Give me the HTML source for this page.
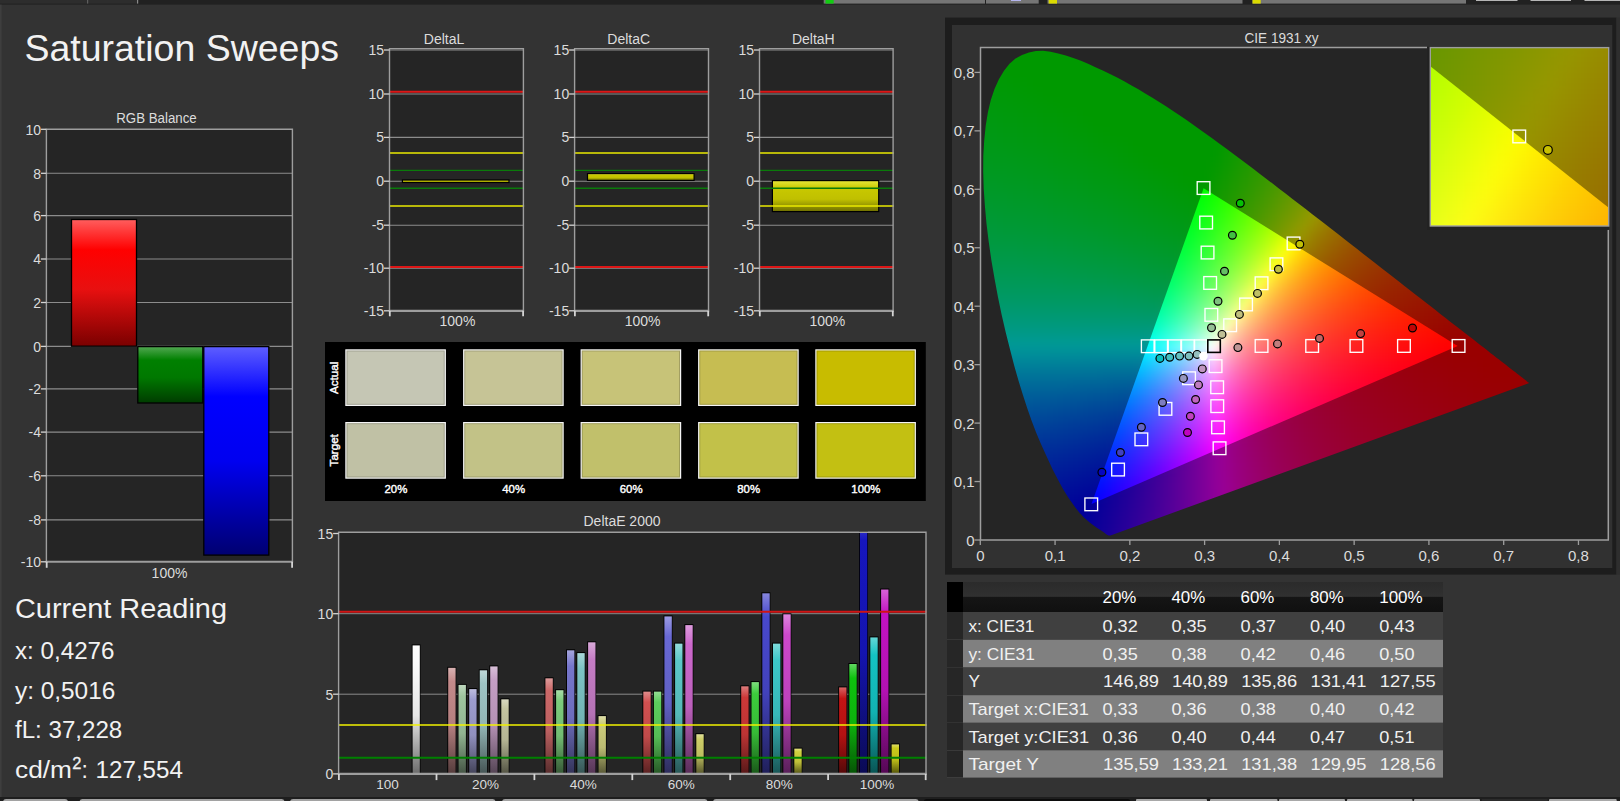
<!DOCTYPE html>
<html><head><meta charset="utf-8"><title>Saturation Sweeps</title>
<style>
html,body{margin:0;padding:0;background:#333333;overflow:hidden}
svg{display:block;font-family:"Liberation Sans", sans-serif}
</style></head><body>
<svg width="1620" height="801" viewBox="0 0 1620 801">
<defs>
<linearGradient id="gR" x1="0" y1="0" x2="0" y2="1"><stop offset="0" stop-color="#ff5e5e"/><stop offset=".24" stop-color="#ff0000"/><stop offset=".55" stop-color="#e81010"/><stop offset="1" stop-color="#7a0000"/></linearGradient>
<linearGradient id="gG" x1="0" y1="0" x2="0" y2="1"><stop offset="0" stop-color="#52a852"/><stop offset=".24" stop-color="#008000"/><stop offset=".55" stop-color="#007800"/><stop offset="1" stop-color="#003c00"/></linearGradient>
<linearGradient id="gB" x1="0" y1="0" x2="0" y2="1"><stop offset="0" stop-color="#5e5eff"/><stop offset=".24" stop-color="#0000ff"/><stop offset=".55" stop-color="#0000f0"/><stop offset="1" stop-color="#000070"/></linearGradient>
<linearGradient id="gY" x1="0" y1="0" x2="0" y2="1"><stop offset="0" stop-color="#e6e63a"/><stop offset=".25" stop-color="#c8c800"/><stop offset=".6" stop-color="#c0c000"/><stop offset="1" stop-color="#6e6e00"/></linearGradient>
<linearGradient id="e1" gradientUnits="userSpaceOnUse" x1="0" y1="645.4" x2="0" y2="773.0"><stop offset="0" stop-color="#fcfcfc"/><stop offset=".13" stop-color="#fafafa"/><stop offset=".55" stop-color="#e6e6e6"/><stop offset="1" stop-color="#6e6e6e"/></linearGradient>
<linearGradient id="e2" gradientUnits="userSpaceOnUse" x1="0" y1="667.8" x2="0" y2="773.0"><stop offset="0" stop-color="#d8b2b2"/><stop offset=".13" stop-color="#c48a8a"/><stop offset=".55" stop-color="#b47f7f"/><stop offset="1" stop-color="#563d3d"/></linearGradient>
<linearGradient id="e3" gradientUnits="userSpaceOnUse" x1="0" y1="684.9" x2="0" y2="773.0"><stop offset="0" stop-color="#bfd8bf"/><stop offset=".13" stop-color="#9ec49e"/><stop offset=".55" stop-color="#91b491"/><stop offset="1" stop-color="#465646"/></linearGradient>
<linearGradient id="e4" gradientUnits="userSpaceOnUse" x1="0" y1="689.1" x2="0" y2="773.0"><stop offset="0" stop-color="#bebedf"/><stop offset=".13" stop-color="#9c9cce"/><stop offset=".55" stop-color="#9090be"/><stop offset="1" stop-color="#45455b"/></linearGradient>
<linearGradient id="e5" gradientUnits="userSpaceOnUse" x1="0" y1="670.3" x2="0" y2="773.0"><stop offset="0" stop-color="#bfd8d8"/><stop offset=".13" stop-color="#9ec4c4"/><stop offset=".55" stop-color="#91b4b4"/><stop offset="1" stop-color="#465656"/></linearGradient>
<linearGradient id="e6" gradientUnits="userSpaceOnUse" x1="0" y1="666.4" x2="0" y2="773.0"><stop offset="0" stop-color="#d8bfd8"/><stop offset=".13" stop-color="#c49ec4"/><stop offset=".55" stop-color="#b491b4"/><stop offset="1" stop-color="#564656"/></linearGradient>
<linearGradient id="e7" gradientUnits="userSpaceOnUse" x1="0" y1="699.3" x2="0" y2="773.0"><stop offset="0" stop-color="#d8d8c0"/><stop offset=".13" stop-color="#c4c4a0"/><stop offset=".55" stop-color="#b4b493"/><stop offset="1" stop-color="#565646"/></linearGradient>
<linearGradient id="e8" gradientUnits="userSpaceOnUse" x1="0" y1="678.3" x2="0" y2="773.0"><stop offset="0" stop-color="#dd9b9b"/><stop offset=".13" stop-color="#cc6868"/><stop offset=".55" stop-color="#bc6060"/><stop offset="1" stop-color="#5a2e2e"/></linearGradient>
<linearGradient id="e9" gradientUnits="userSpaceOnUse" x1="0" y1="690.2" x2="0" y2="773.0"><stop offset="0" stop-color="#a9dda9"/><stop offset=".13" stop-color="#7ccc7c"/><stop offset=".55" stop-color="#72bc72"/><stop offset="1" stop-color="#375a37"/></linearGradient>
<linearGradient id="e10" gradientUnits="userSpaceOnUse" x1="0" y1="650.3" x2="0" y2="773.0"><stop offset="0" stop-color="#a5a5dd"/><stop offset=".13" stop-color="#7676cc"/><stop offset=".55" stop-color="#6d6dbc"/><stop offset="1" stop-color="#34345a"/></linearGradient>
<linearGradient id="e11" gradientUnits="userSpaceOnUse" x1="0" y1="653.1" x2="0" y2="773.0"><stop offset="0" stop-color="#a9d8d8"/><stop offset=".13" stop-color="#7cc4c4"/><stop offset=".55" stop-color="#72b4b4"/><stop offset="1" stop-color="#375656"/></linearGradient>
<linearGradient id="e12" gradientUnits="userSpaceOnUse" x1="0" y1="642.3" x2="0" y2="773.0"><stop offset="0" stop-color="#d8a9d8"/><stop offset=".13" stop-color="#c47cc4"/><stop offset=".55" stop-color="#b472b4"/><stop offset="1" stop-color="#563756"/></linearGradient>
<linearGradient id="e13" gradientUnits="userSpaceOnUse" x1="0" y1="716.1" x2="0" y2="773.0"><stop offset="0" stop-color="#dddda9"/><stop offset=".13" stop-color="#cccc7c"/><stop offset=".55" stop-color="#bcbc72"/><stop offset="1" stop-color="#5a5a37"/></linearGradient>
<linearGradient id="e14" gradientUnits="userSpaceOnUse" x1="0" y1="691.6" x2="0" y2="773.0"><stop offset="0" stop-color="#e18c8c"/><stop offset=".13" stop-color="#d25050"/><stop offset=".55" stop-color="#c14a4a"/><stop offset="1" stop-color="#5c2323"/></linearGradient>
<linearGradient id="e15" gradientUnits="userSpaceOnUse" x1="0" y1="691.6" x2="0" y2="773.0"><stop offset="0" stop-color="#93dd93"/><stop offset=".13" stop-color="#5ccc5c"/><stop offset=".55" stop-color="#55bc55"/><stop offset="1" stop-color="#285a28"/></linearGradient>
<linearGradient id="e16" gradientUnits="userSpaceOnUse" x1="0" y1="616.4" x2="0" y2="773.0"><stop offset="0" stop-color="#9b9be3"/><stop offset=".13" stop-color="#6868d4"/><stop offset=".55" stop-color="#6060c3"/><stop offset="1" stop-color="#2e2e5d"/></linearGradient>
<linearGradient id="e17" gradientUnits="userSpaceOnUse" x1="0" y1="643.6" x2="0" y2="773.0"><stop offset="0" stop-color="#93dbdb"/><stop offset=".13" stop-color="#5cc8c8"/><stop offset=".55" stop-color="#55b8b8"/><stop offset="1" stop-color="#285858"/></linearGradient>
<linearGradient id="e18" gradientUnits="userSpaceOnUse" x1="0" y1="625.1" x2="0" y2="773.0"><stop offset="0" stop-color="#dd9bdd"/><stop offset=".13" stop-color="#cc68cc"/><stop offset=".55" stop-color="#bc60bc"/><stop offset="1" stop-color="#5a2e5a"/></linearGradient>
<linearGradient id="e19" gradientUnits="userSpaceOnUse" x1="0" y1="734.2" x2="0" y2="773.0"><stop offset="0" stop-color="#dfdf9b"/><stop offset=".13" stop-color="#cece68"/><stop offset=".55" stop-color="#bebe60"/><stop offset="1" stop-color="#5b5b2e"/></linearGradient>
<linearGradient id="e20" gradientUnits="userSpaceOnUse" x1="0" y1="686.3" x2="0" y2="773.0"><stop offset="0" stop-color="#dd7c7c"/><stop offset=".13" stop-color="#cc3838"/><stop offset=".55" stop-color="#bc3434"/><stop offset="1" stop-color="#5a1919"/></linearGradient>
<linearGradient id="e21" gradientUnits="userSpaceOnUse" x1="0" y1="682.1" x2="0" y2="773.0"><stop offset="0" stop-color="#7edd7e"/><stop offset=".13" stop-color="#3ccc3c"/><stop offset=".55" stop-color="#37bc37"/><stop offset="1" stop-color="#1a5a1a"/></linearGradient>
<linearGradient id="e22" gradientUnits="userSpaceOnUse" x1="0" y1="593.3" x2="0" y2="773.0"><stop offset="0" stop-color="#8686dd"/><stop offset=".13" stop-color="#4848cc"/><stop offset=".55" stop-color="#4242bc"/><stop offset="1" stop-color="#20205a"/></linearGradient>
<linearGradient id="e23" gradientUnits="userSpaceOnUse" x1="0" y1="643.6" x2="0" y2="773.0"><stop offset="0" stop-color="#7edbdb"/><stop offset=".13" stop-color="#3cc8c8"/><stop offset=".55" stop-color="#37b8b8"/><stop offset="1" stop-color="#1a5858"/></linearGradient>
<linearGradient id="e24" gradientUnits="userSpaceOnUse" x1="0" y1="614.3" x2="0" y2="773.0"><stop offset="0" stop-color="#dd86dd"/><stop offset=".13" stop-color="#cc48cc"/><stop offset=".55" stop-color="#bc42bc"/><stop offset="1" stop-color="#5a205a"/></linearGradient>
<linearGradient id="e25" gradientUnits="userSpaceOnUse" x1="0" y1="748.6" x2="0" y2="773.0"><stop offset="0" stop-color="#e0e080"/><stop offset=".13" stop-color="#d0d03e"/><stop offset=".55" stop-color="#bfbf39"/><stop offset="1" stop-color="#5c5c1b"/></linearGradient>
<linearGradient id="e26" gradientUnits="userSpaceOnUse" x1="0" y1="687.4" x2="0" y2="773.0"><stop offset="0" stop-color="#d86464"/><stop offset=".13" stop-color="#c41414"/><stop offset=".55" stop-color="#b41212"/><stop offset="1" stop-color="#560909"/></linearGradient>
<linearGradient id="e27" gradientUnits="userSpaceOnUse" x1="0" y1="664.0" x2="0" y2="773.0"><stop offset="0" stop-color="#60d760"/><stop offset=".13" stop-color="#0ec20e"/><stop offset=".55" stop-color="#0db20d"/><stop offset="1" stop-color="#065506"/></linearGradient>
<linearGradient id="e28" gradientUnits="userSpaceOnUse" x1="0" y1="505.6" x2="0" y2="773.0"><stop offset="0" stop-color="#6565d4"/><stop offset=".13" stop-color="#1616be"/><stop offset=".55" stop-color="#1414af"/><stop offset="1" stop-color="#0a0a54"/></linearGradient>
<linearGradient id="e29" gradientUnits="userSpaceOnUse" x1="0" y1="637.4" x2="0" y2="773.0"><stop offset="0" stop-color="#64d7d7"/><stop offset=".13" stop-color="#14c2c2"/><stop offset=".55" stop-color="#12b2b2"/><stop offset="1" stop-color="#095555"/></linearGradient>
<linearGradient id="e30" gradientUnits="userSpaceOnUse" x1="0" y1="589.5" x2="0" y2="773.0"><stop offset="0" stop-color="#d763d7"/><stop offset=".13" stop-color="#c212c2"/><stop offset=".55" stop-color="#b211b2"/><stop offset="1" stop-color="#550855"/></linearGradient>
<linearGradient id="e31" gradientUnits="userSpaceOnUse" x1="0" y1="744.4" x2="0" y2="773.0"><stop offset="0" stop-color="#dcdc68"/><stop offset=".13" stop-color="#caca1a"/><stop offset=".55" stop-color="#baba18"/><stop offset="1" stop-color="#59590b"/></linearGradient>
<clipPath id="cl"><path d="M1110.5 535.5L1108.5 535.4L1106.6 534.4L1104.7 533.1L1102.7 531.6L1100.8 530.3L1098.4 528.7L1096.5 527.4L1094.4 526L1092 524.2L1089.4 522.2L1086.6 519.8L1083.4 516.9L1081.7 515.1L1079.7 512.9L1077.7 510.5L1075.5 507.8L1073.2 504.6L1070.7 501.1L1068.1 497.2L1065.3 492.7L1062.3 487.7L1059.2 482L1055.9 475.7L1052.3 468.7L1048.6 460.8L1044.7 452.2L1040.4 442.7L1036.1 432.4L1031.7 421.1L1027.4 408.7L1023 395.3L1018.6 381.1L1014.3 366L1010.1 349.8L1005.8 332.7L1001.7 315L998 297.2L994.6 279L991.4 260.4L988.7 241.8L986.5 223.7L984.9 206L983.7 188.6L983.2 171.7L983.3 155.7L984.2 140.4L985.7 125.8L987.9 112.2L990.8 99.9L994.5 88.9L998.9 79.2L1004 70.7L1009.5 63.8L1015.5 58.6L1022 54.9L1028.9 52.5L1035.9 51L1043.1 50.8L1050.6 51.7L1058.2 53.5L1065.8 55.5L1073.3 57.9L1081 60.8L1088.6 64L1096 67.4L1103.3 70.7L1110.5 74.2L1117.6 77.8L1124.6 81.6L1131.5 85.4L1138.4 89.3L1145.2 93.4L1152 97.5L1158.8 101.8L1165.6 106.1L1172.3 110.5L1179.1 115L1185.8 119.6L1192.5 124.3L1199.1 129L1205.8 133.8L1212.5 138.6L1219.2 143.4L1225.8 148.3L1232.5 153.3L1239.2 158.3L1245.9 163.3L1252.6 168.3L1259.3 173.4L1265.9 178.5L1272.6 183.6L1279.2 188.7L1285.9 193.8L1292.5 198.9L1299.1 204L1305.7 209.1L1312.3 214.2L1318.9 219.2L1325.4 224.3L1331.8 229.3L1338.3 234.3L1344.6 239.3L1351 244.2L1357.2 249.1L1363.4 254L1369.6 258.8L1375.7 263.5L1381.7 268.2L1387.6 272.8L1393.4 277.3L1399.2 281.8L1404.8 286.2L1410.3 290.5L1415.7 294.7L1421 298.8L1426.1 302.8L1431 306.6L1435.8 310.3L1440.3 313.9L1444.7 317.3L1449 320.7L1453.2 323.9L1457.2 327.1L1461.1 330.1L1464.9 333L1468.4 335.7L1471.8 338.3L1475 340.8L1478 343.2L1480.9 345.4L1483.7 347.6L1486.2 349.6L1488.7 351.5L1491 353.4L1493.2 355.1L1495.3 356.7L1497.2 358.2L1499.1 359.6L1500.8 361L1502.5 362.2L1505.5 364.6L1508.2 366.7L1510.7 368.7L1513 370.5L1515.1 372.1L1516.9 373.5L1518.6 374.8L1520.8 376.5L1522.5 377.8L1524.3 379.3L1526 380.6L1527.6 381.9L1529.2 383.1Z"/></clipPath>
<clipPath id="ct"><path d="M1457.7 346.1L1203.6 188.3L1091.5 503.9Z"/></clipPath>
<filter id="bl" x="-5%" y="-5%" width="110%" height="110%" color-interpolation-filters="sRGB"><feGaussianBlur stdDeviation="5"/></filter>
<filter id="bs" x="-5%" y="-5%" width="110%" height="110%" color-interpolation-filters="sRGB"><feGaussianBlur stdDeviation="3.2"/></filter>
<clipPath id="ci"><rect x="1430.3" y="47.6" width="178.4" height="178.4"/></clipPath>
<clipPath id="cit"><path d="M2307.0 762.3L1093.8 -201.1L558.6 1725.6Z"/></clipPath>
<filter id="bi" x="-20%" y="-20%" width="140%" height="140%" color-interpolation-filters="sRGB"><feGaussianBlur stdDeviation="8"/></filter>
<linearGradient id="th" x1="0" y1="0" x2="0" y2="1"><stop offset="0" stop-color="#2b2b2b"/><stop offset=".48" stop-color="#303030"/><stop offset=".5" stop-color="#151515"/><stop offset="1" stop-color="#101010"/></linearGradient>
</defs>
<rect x="0" y="0" width="1620" height="801" fill="#333333"/>
<rect x="0" y="0" width="1620" height="4.6" fill="#212121"/>
<rect x="0" y="0" width="137.5" height="3.6" fill="#2d2d2d"/>
<rect x="87" y="0" width="1.2" height="3.6" fill="#5e5e5e"/>
<rect x="137" y="0" width="1.2" height="3.6" fill="#8a8a8a"/>
<rect x="823.7" y="0" width="161.3" height="3.6" fill="#757575"/>
<rect x="825.5" y="0" width="8.2" height="3.6" fill="#12cc12"/>
<rect x="986" y="0" width="52.7" height="3.6" fill="#757575"/>
<rect x="1011" y="0" width="10" height="1.0" fill="#b4b4ee"/>
<rect x="1047.5" y="0" width="195" height="3.6" fill="#757575"/>
<rect x="1048.7" y="0" width="8.3" height="3.6" fill="#dada00"/>
<rect x="1252.5" y="0" width="213.5" height="3.6" fill="#757575"/>
<rect x="1252.5" y="0" width="8.2" height="3.6" fill="#dada00"/>
<rect x="1476" y="0" width="41.5" height="1.0" fill="#b5b5b5"/>
<rect x="1530.5" y="0" width="40.5" height="1.0" fill="#b5b5b5"/>
<rect x="1584.5" y="0" width="35.5" height="1.0" fill="#b5b5b5"/>
<rect x="0" y="4.6" width="1.6" height="796" fill="#3e3e3e"/>
<rect x="0" y="797" width="1620" height="4" fill="#1e1e1e"/>
<rect x="3" y="799" width="65" height="8" rx="3" fill="#a2a2a2"/>
<rect x="79.5" y="799" width="205.0" height="8" rx="3" fill="#a2a2a2"/>
<rect x="290" y="799" width="205.5" height="8" rx="3" fill="#a2a2a2"/>
<rect x="502" y="799" width="205.5" height="8" rx="3" fill="#a2a2a2"/>
<rect x="713" y="799" width="205.70000000000005" height="8" rx="3" fill="#a2a2a2"/>
<rect x="923.7" y="799" width="206.8" height="8" rx="3" fill="#0c0c0c"/>
<rect x="1136" y="799" width="71" height="4" rx="1" fill="#a8a8a8"/>
<rect x="1210" y="799" width="67.5" height="4" rx="1" fill="#a8a8a8"/>
<rect x="1279" y="799" width="66" height="4" rx="1" fill="#a8a8a8"/>
<rect x="1347" y="799" width="65.5" height="4" rx="1" fill="#a8a8a8"/>
<rect x="1414" y="799" width="66" height="4" rx="1" fill="#a8a8a8"/>
<rect x="1549" y="799" width="67.70000000000005" height="4" rx="1" fill="#a8a8a8"/>
<rect x="1481.7" y="799" width="65.8" height="3" fill="#2c2c2c"/>
<text x="24.4" y="60.5" font-size="37" textLength="314.6" lengthAdjust="spacingAndGlyphs" fill="#f2f2f2">Saturation Sweeps</text>
<rect x="46.4" y="129.3" width="245.99999999999997" height="432.49999999999994" fill="#252525"/>
<line x1="46.4" y1="519.9" x2="292.4" y2="519.9" stroke="#8c8c8c" stroke-width="1.1"/>
<line x1="46.4" y1="475.8" x2="292.4" y2="475.8" stroke="#8c8c8c" stroke-width="1.1"/>
<line x1="46.4" y1="432.1" x2="292.4" y2="432.1" stroke="#8c8c8c" stroke-width="1.1"/>
<line x1="46.4" y1="388.9" x2="292.4" y2="388.9" stroke="#8c8c8c" stroke-width="1.1"/>
<line x1="46.4" y1="346.4" x2="292.4" y2="346.4" stroke="#8c8c8c" stroke-width="1.1"/>
<line x1="46.4" y1="302.5" x2="292.4" y2="302.5" stroke="#8c8c8c" stroke-width="1.1"/>
<line x1="46.4" y1="259.0" x2="292.4" y2="259.0" stroke="#8c8c8c" stroke-width="1.1"/>
<line x1="46.4" y1="215.6" x2="292.4" y2="215.6" stroke="#8c8c8c" stroke-width="1.1"/>
<line x1="46.4" y1="173.3" x2="292.4" y2="173.3" stroke="#8c8c8c" stroke-width="1.1"/>
<rect x="71.5" y="219.5" width="65" height="126.7" fill="url(#gR)" stroke="#000" stroke-width="1.3"/>
<rect x="137.8" y="346.6" width="65.0" height="56.4" fill="url(#gG)" stroke="#000" stroke-width="1.3"/>
<rect x="203.8" y="346.6" width="65.0" height="208.5" fill="url(#gB)" stroke="#000" stroke-width="1.3"/>
<path d="M46.4 561.8V129.3H292.4V561.8" fill="none" stroke="#9e9e9e" stroke-width="1.4"/>
<line x1="45.699999999999996" y1="561.8" x2="293.09999999999997" y2="561.8" stroke="#9e9e9e" stroke-width="2.0"/>
<line x1="46.699999999999996" y1="561.8" x2="46.699999999999996" y2="567.8" stroke="#d4d4d4" stroke-width="1.8"/>
<line x1="292.09999999999997" y1="561.8" x2="292.09999999999997" y2="567.8" stroke="#d4d4d4" stroke-width="1.8"/>
<line x1="40.9" y1="561.8" x2="46.4" y2="561.8" stroke="#d4d4d4" stroke-width="1.3"/>
<text x="41.0" y="567.0" font-size="14" text-anchor="end" fill="#dcdcdc">-10</text>
<line x1="40.9" y1="519.9" x2="46.4" y2="519.9" stroke="#d4d4d4" stroke-width="1.3"/>
<text x="41.0" y="525.1" font-size="14" text-anchor="end" fill="#dcdcdc">-8</text>
<line x1="40.9" y1="475.8" x2="46.4" y2="475.8" stroke="#d4d4d4" stroke-width="1.3"/>
<text x="41.0" y="481.0" font-size="14" text-anchor="end" fill="#dcdcdc">-6</text>
<line x1="40.9" y1="432.1" x2="46.4" y2="432.1" stroke="#d4d4d4" stroke-width="1.3"/>
<text x="41.0" y="437.3" font-size="14" text-anchor="end" fill="#dcdcdc">-4</text>
<line x1="40.9" y1="388.9" x2="46.4" y2="388.9" stroke="#d4d4d4" stroke-width="1.3"/>
<text x="41.0" y="394.09999999999997" font-size="14" text-anchor="end" fill="#dcdcdc">-2</text>
<line x1="40.9" y1="346.4" x2="46.4" y2="346.4" stroke="#d4d4d4" stroke-width="1.3"/>
<text x="41.0" y="351.59999999999997" font-size="14" text-anchor="end" fill="#dcdcdc">0</text>
<line x1="40.9" y1="302.5" x2="46.4" y2="302.5" stroke="#d4d4d4" stroke-width="1.3"/>
<text x="41.0" y="307.7" font-size="14" text-anchor="end" fill="#dcdcdc">2</text>
<line x1="40.9" y1="259.0" x2="46.4" y2="259.0" stroke="#d4d4d4" stroke-width="1.3"/>
<text x="41.0" y="264.2" font-size="14" text-anchor="end" fill="#dcdcdc">4</text>
<line x1="40.9" y1="215.6" x2="46.4" y2="215.6" stroke="#d4d4d4" stroke-width="1.3"/>
<text x="41.0" y="220.79999999999998" font-size="14" text-anchor="end" fill="#dcdcdc">6</text>
<line x1="40.9" y1="173.3" x2="46.4" y2="173.3" stroke="#d4d4d4" stroke-width="1.3"/>
<text x="41.0" y="178.5" font-size="14" text-anchor="end" fill="#dcdcdc">8</text>
<line x1="40.9" y1="129.3" x2="46.4" y2="129.3" stroke="#d4d4d4" stroke-width="1.3"/>
<text x="41.0" y="134.5" font-size="14" text-anchor="end" fill="#dcdcdc">10</text>
<text x="156.5" y="122.8" font-size="14" text-anchor="middle" textLength="80.5" lengthAdjust="spacingAndGlyphs" fill="#dcdcdc">RGB Balance</text>
<text x="169.5" y="578" font-size="14" text-anchor="middle" fill="#dcdcdc">100%</text>
<text x="15" y="617.8" font-size="27" textLength="212" lengthAdjust="spacingAndGlyphs" fill="#f2f2f2">Current Reading</text>
<text x="15" y="659.2" font-size="23" textLength="99.5" lengthAdjust="spacingAndGlyphs" fill="#f2f2f2">x: 0,4276</text>
<text x="15" y="698.6" font-size="23" textLength="100.3" lengthAdjust="spacingAndGlyphs" fill="#f2f2f2">y: 0,5016</text>
<text x="15" y="738.2" font-size="23" textLength="107.2" lengthAdjust="spacingAndGlyphs" fill="#f2f2f2">fL: 37,228</text>
<text x="15" y="777.8" font-size="23" textLength="57.0" lengthAdjust="spacingAndGlyphs" fill="#f2f2f2">cd/m</text>
<text x="72.2" y="769.2" font-size="16.5" fill="#f2f2f2" stroke="#f2f2f2" stroke-width=".3">2</text>
<text x="81.6" y="777.8" font-size="23" fill="#f2f2f2">:</text>
<text x="95.6" y="777.8" font-size="23" textLength="87.3" lengthAdjust="spacingAndGlyphs" fill="#f2f2f2">127,554</text>
<rect x="389.5" y="48.6" width="133.89999999999998" height="262.2" fill="#252525"/>
<line x1="389.5" y1="50.0" x2="523.4" y2="50.0" stroke="#8c8c8c" stroke-width="1.1"/>
<line x1="389.5" y1="94.0" x2="523.4" y2="94.0" stroke="#8c8c8c" stroke-width="1.1"/>
<line x1="389.5" y1="137.4" x2="523.4" y2="137.4" stroke="#8c8c8c" stroke-width="1.1"/>
<line x1="389.5" y1="181.2" x2="523.4" y2="181.2" stroke="#8c8c8c" stroke-width="1.1"/>
<line x1="389.5" y1="225.2" x2="523.4" y2="225.2" stroke="#8c8c8c" stroke-width="1.1"/>
<line x1="389.5" y1="268.2" x2="523.4" y2="268.2" stroke="#8c8c8c" stroke-width="1.1"/>
<line x1="389.5" y1="91.7" x2="524.1" y2="91.7" stroke="#dc1616" stroke-width="2.0"/>
<line x1="389.5" y1="266.9" x2="524.1" y2="266.9" stroke="#dc1616" stroke-width="2.0"/>
<rect x="402.4" y="180.0" width="106.6" height="2.5" fill="url(#gY)" stroke="#000" stroke-width="1.2"/>
<line x1="389.5" y1="153.0" x2="524.1" y2="153.0" stroke="#eaea00" stroke-width="1.4"/>
<line x1="389.5" y1="206.0" x2="524.1" y2="206.0" stroke="#eaea00" stroke-width="1.4"/>
<line x1="389.5" y1="170.4" x2="524.1" y2="170.4" stroke="#0a7a0a" stroke-width="1.4"/>
<line x1="389.5" y1="188.2" x2="524.1" y2="188.2" stroke="#0a7a0a" stroke-width="1.4"/>
<path d="M389.5 310.8V48.6H523.4V310.8" fill="none" stroke="#9e9e9e" stroke-width="1.4"/>
<line x1="388.8" y1="310.8" x2="524.1" y2="310.8" stroke="#9e9e9e" stroke-width="2.2"/>
<line x1="389.8" y1="310.8" x2="389.8" y2="316.3" stroke="#d4d4d4" stroke-width="1.8"/>
<line x1="523.1" y1="310.8" x2="523.1" y2="316.3" stroke="#d4d4d4" stroke-width="1.8"/>
<line x1="384.0" y1="50.0" x2="389.5" y2="50.0" stroke="#d4d4d4" stroke-width="1.3"/>
<text x="384.1" y="55.0" font-size="14" text-anchor="end" fill="#dcdcdc">15</text>
<line x1="384.0" y1="94.0" x2="389.5" y2="94.0" stroke="#d4d4d4" stroke-width="1.3"/>
<text x="384.1" y="99.0" font-size="14" text-anchor="end" fill="#dcdcdc">10</text>
<line x1="384.0" y1="137.4" x2="389.5" y2="137.4" stroke="#d4d4d4" stroke-width="1.3"/>
<text x="384.1" y="142.4" font-size="14" text-anchor="end" fill="#dcdcdc">5</text>
<line x1="384.0" y1="181.2" x2="389.5" y2="181.2" stroke="#d4d4d4" stroke-width="1.3"/>
<text x="384.1" y="186.2" font-size="14" text-anchor="end" fill="#dcdcdc">0</text>
<line x1="384.0" y1="225.2" x2="389.5" y2="225.2" stroke="#d4d4d4" stroke-width="1.3"/>
<text x="384.1" y="230.2" font-size="14" text-anchor="end" fill="#dcdcdc">-5</text>
<line x1="384.0" y1="268.2" x2="389.5" y2="268.2" stroke="#d4d4d4" stroke-width="1.3"/>
<text x="384.1" y="273.2" font-size="14" text-anchor="end" fill="#dcdcdc">-10</text>
<line x1="384.0" y1="310.8" x2="389.5" y2="310.8" stroke="#d4d4d4" stroke-width="1.3"/>
<text x="384.1" y="315.8" font-size="14" text-anchor="end" fill="#dcdcdc">-15</text>
<text x="444" y="44.0" font-size="14" text-anchor="middle" fill="#dcdcdc">DeltaL</text>
<text x="457.45" y="325.8" font-size="14" text-anchor="middle" fill="#dcdcdc">100%</text>
<rect x="574.6" y="48.6" width="133.89999999999998" height="262.2" fill="#252525"/>
<line x1="574.6" y1="50.0" x2="708.5" y2="50.0" stroke="#8c8c8c" stroke-width="1.1"/>
<line x1="574.6" y1="94.0" x2="708.5" y2="94.0" stroke="#8c8c8c" stroke-width="1.1"/>
<line x1="574.6" y1="137.4" x2="708.5" y2="137.4" stroke="#8c8c8c" stroke-width="1.1"/>
<line x1="574.6" y1="181.2" x2="708.5" y2="181.2" stroke="#8c8c8c" stroke-width="1.1"/>
<line x1="574.6" y1="225.2" x2="708.5" y2="225.2" stroke="#8c8c8c" stroke-width="1.1"/>
<line x1="574.6" y1="268.2" x2="708.5" y2="268.2" stroke="#8c8c8c" stroke-width="1.1"/>
<line x1="574.6" y1="91.7" x2="709.2" y2="91.7" stroke="#dc1616" stroke-width="2.0"/>
<line x1="574.6" y1="266.9" x2="709.2" y2="266.9" stroke="#dc1616" stroke-width="2.0"/>
<rect x="587.5" y="173.6" width="106.6" height="6.8" fill="url(#gY)" stroke="#000" stroke-width="1.2"/>
<line x1="574.6" y1="153.0" x2="709.2" y2="153.0" stroke="#eaea00" stroke-width="1.4"/>
<line x1="574.6" y1="206.0" x2="709.2" y2="206.0" stroke="#eaea00" stroke-width="1.4"/>
<line x1="574.6" y1="170.4" x2="709.2" y2="170.4" stroke="#0a7a0a" stroke-width="1.4"/>
<line x1="574.6" y1="188.2" x2="709.2" y2="188.2" stroke="#0a7a0a" stroke-width="1.4"/>
<path d="M574.6 310.8V48.6H708.5V310.8" fill="none" stroke="#9e9e9e" stroke-width="1.4"/>
<line x1="573.9" y1="310.8" x2="709.2" y2="310.8" stroke="#9e9e9e" stroke-width="2.2"/>
<line x1="574.9" y1="310.8" x2="574.9" y2="316.3" stroke="#d4d4d4" stroke-width="1.8"/>
<line x1="708.2" y1="310.8" x2="708.2" y2="316.3" stroke="#d4d4d4" stroke-width="1.8"/>
<line x1="569.1" y1="50.0" x2="574.6" y2="50.0" stroke="#d4d4d4" stroke-width="1.3"/>
<text x="569.2" y="55.0" font-size="14" text-anchor="end" fill="#dcdcdc">15</text>
<line x1="569.1" y1="94.0" x2="574.6" y2="94.0" stroke="#d4d4d4" stroke-width="1.3"/>
<text x="569.2" y="99.0" font-size="14" text-anchor="end" fill="#dcdcdc">10</text>
<line x1="569.1" y1="137.4" x2="574.6" y2="137.4" stroke="#d4d4d4" stroke-width="1.3"/>
<text x="569.2" y="142.4" font-size="14" text-anchor="end" fill="#dcdcdc">5</text>
<line x1="569.1" y1="181.2" x2="574.6" y2="181.2" stroke="#d4d4d4" stroke-width="1.3"/>
<text x="569.2" y="186.2" font-size="14" text-anchor="end" fill="#dcdcdc">0</text>
<line x1="569.1" y1="225.2" x2="574.6" y2="225.2" stroke="#d4d4d4" stroke-width="1.3"/>
<text x="569.2" y="230.2" font-size="14" text-anchor="end" fill="#dcdcdc">-5</text>
<line x1="569.1" y1="268.2" x2="574.6" y2="268.2" stroke="#d4d4d4" stroke-width="1.3"/>
<text x="569.2" y="273.2" font-size="14" text-anchor="end" fill="#dcdcdc">-10</text>
<line x1="569.1" y1="310.8" x2="574.6" y2="310.8" stroke="#d4d4d4" stroke-width="1.3"/>
<text x="569.2" y="315.8" font-size="14" text-anchor="end" fill="#dcdcdc">-15</text>
<text x="628.7" y="44.0" font-size="14" text-anchor="middle" fill="#dcdcdc">DeltaC</text>
<text x="642.55" y="325.8" font-size="14" text-anchor="middle" fill="#dcdcdc">100%</text>
<rect x="759.5" y="48.6" width="133.60000000000002" height="262.2" fill="#252525"/>
<line x1="759.5" y1="50.0" x2="893.1" y2="50.0" stroke="#8c8c8c" stroke-width="1.1"/>
<line x1="759.5" y1="94.0" x2="893.1" y2="94.0" stroke="#8c8c8c" stroke-width="1.1"/>
<line x1="759.5" y1="137.4" x2="893.1" y2="137.4" stroke="#8c8c8c" stroke-width="1.1"/>
<line x1="759.5" y1="181.2" x2="893.1" y2="181.2" stroke="#8c8c8c" stroke-width="1.1"/>
<line x1="759.5" y1="225.2" x2="893.1" y2="225.2" stroke="#8c8c8c" stroke-width="1.1"/>
<line x1="759.5" y1="268.2" x2="893.1" y2="268.2" stroke="#8c8c8c" stroke-width="1.1"/>
<line x1="759.5" y1="91.7" x2="893.8000000000001" y2="91.7" stroke="#dc1616" stroke-width="2.0"/>
<line x1="759.5" y1="266.9" x2="893.8000000000001" y2="266.9" stroke="#dc1616" stroke-width="2.0"/>
<rect x="772.4" y="180.6" width="106.3" height="31.0" fill="url(#gY)" stroke="#000" stroke-width="1.2"/>
<line x1="759.5" y1="153.0" x2="893.8000000000001" y2="153.0" stroke="#eaea00" stroke-width="1.4"/>
<line x1="759.5" y1="206.0" x2="893.8000000000001" y2="206.0" stroke="#eaea00" stroke-width="1.4"/>
<line x1="759.5" y1="170.4" x2="893.8000000000001" y2="170.4" stroke="#0a7a0a" stroke-width="1.4"/>
<line x1="759.5" y1="188.2" x2="893.8000000000001" y2="188.2" stroke="#0a7a0a" stroke-width="1.4"/>
<path d="M759.5 310.8V48.6H893.1V310.8" fill="none" stroke="#9e9e9e" stroke-width="1.4"/>
<line x1="758.8" y1="310.8" x2="893.8000000000001" y2="310.8" stroke="#9e9e9e" stroke-width="2.2"/>
<line x1="759.8" y1="310.8" x2="759.8" y2="316.3" stroke="#d4d4d4" stroke-width="1.8"/>
<line x1="892.8000000000001" y1="310.8" x2="892.8000000000001" y2="316.3" stroke="#d4d4d4" stroke-width="1.8"/>
<line x1="754.0" y1="50.0" x2="759.5" y2="50.0" stroke="#d4d4d4" stroke-width="1.3"/>
<text x="754.1" y="55.0" font-size="14" text-anchor="end" fill="#dcdcdc">15</text>
<line x1="754.0" y1="94.0" x2="759.5" y2="94.0" stroke="#d4d4d4" stroke-width="1.3"/>
<text x="754.1" y="99.0" font-size="14" text-anchor="end" fill="#dcdcdc">10</text>
<line x1="754.0" y1="137.4" x2="759.5" y2="137.4" stroke="#d4d4d4" stroke-width="1.3"/>
<text x="754.1" y="142.4" font-size="14" text-anchor="end" fill="#dcdcdc">5</text>
<line x1="754.0" y1="181.2" x2="759.5" y2="181.2" stroke="#d4d4d4" stroke-width="1.3"/>
<text x="754.1" y="186.2" font-size="14" text-anchor="end" fill="#dcdcdc">0</text>
<line x1="754.0" y1="225.2" x2="759.5" y2="225.2" stroke="#d4d4d4" stroke-width="1.3"/>
<text x="754.1" y="230.2" font-size="14" text-anchor="end" fill="#dcdcdc">-5</text>
<line x1="754.0" y1="268.2" x2="759.5" y2="268.2" stroke="#d4d4d4" stroke-width="1.3"/>
<text x="754.1" y="273.2" font-size="14" text-anchor="end" fill="#dcdcdc">-10</text>
<line x1="754.0" y1="310.8" x2="759.5" y2="310.8" stroke="#d4d4d4" stroke-width="1.3"/>
<text x="754.1" y="315.8" font-size="14" text-anchor="end" fill="#dcdcdc">-15</text>
<text x="813.3" y="44.0" font-size="14" text-anchor="middle" fill="#dcdcdc">DeltaH</text>
<text x="827.3" y="325.8" font-size="14" text-anchor="middle" fill="#dcdcdc">100%</text>
<rect x="325" y="342" width="600.8" height="159.0" fill="#000"/>
<rect x="345.9" y="349.9" width="99.4" height="55.5" fill="#c5c6b4" stroke="#f4f4f4" stroke-width="1.2"/>
<rect x="347.0" y="351.0" width="97.2" height="53.3" fill="none" stroke="#000" stroke-opacity=".18" stroke-width="1"/>
<rect x="345.9" y="422.6" width="99.4" height="55.5" fill="#c0c1a5" stroke="#f4f4f4" stroke-width="1.2"/>
<rect x="347.0" y="423.7" width="97.2" height="53.3" fill="none" stroke="#000" stroke-opacity=".18" stroke-width="1"/>
<text x="395.90000000000003" y="492.8" font-size="11.4" text-anchor="middle" fill="#fff" stroke="#fff" stroke-width=".4">20%</text>
<rect x="463.7" y="349.9" width="99.4" height="55.5" fill="#c6c496" stroke="#f4f4f4" stroke-width="1.2"/>
<rect x="464.8" y="351.0" width="97.2" height="53.3" fill="none" stroke="#000" stroke-opacity=".18" stroke-width="1"/>
<rect x="463.7" y="422.6" width="99.4" height="55.5" fill="#c2c287" stroke="#f4f4f4" stroke-width="1.2"/>
<rect x="464.8" y="423.7" width="97.2" height="53.3" fill="none" stroke="#000" stroke-opacity=".18" stroke-width="1"/>
<text x="513.7" y="492.8" font-size="11.4" text-anchor="middle" fill="#fff" stroke="#fff" stroke-width=".4">40%</text>
<rect x="581.2" y="349.9" width="99.4" height="55.5" fill="#c7c378" stroke="#f4f4f4" stroke-width="1.2"/>
<rect x="582.3" y="351.0" width="97.2" height="53.3" fill="none" stroke="#000" stroke-opacity=".18" stroke-width="1"/>
<rect x="581.2" y="422.6" width="99.4" height="55.5" fill="#c1c06b" stroke="#f4f4f4" stroke-width="1.2"/>
<rect x="582.3" y="423.7" width="97.2" height="53.3" fill="none" stroke="#000" stroke-opacity=".18" stroke-width="1"/>
<text x="631.2" y="492.8" font-size="11.4" text-anchor="middle" fill="#fff" stroke="#fff" stroke-width=".4">60%</text>
<rect x="698.7" y="349.9" width="99.4" height="55.5" fill="#c6bd52" stroke="#f4f4f4" stroke-width="1.2"/>
<rect x="699.8" y="351.0" width="97.2" height="53.3" fill="none" stroke="#000" stroke-opacity=".18" stroke-width="1"/>
<rect x="698.7" y="422.6" width="99.4" height="55.5" fill="#c2c149" stroke="#f4f4f4" stroke-width="1.2"/>
<rect x="699.8" y="423.7" width="97.2" height="53.3" fill="none" stroke="#000" stroke-opacity=".18" stroke-width="1"/>
<text x="748.7" y="492.8" font-size="11.4" text-anchor="middle" fill="#fff" stroke="#fff" stroke-width=".4">80%</text>
<rect x="815.9" y="349.9" width="99.4" height="55.5" fill="#c8bc00" stroke="#f4f4f4" stroke-width="1.2"/>
<rect x="817.0" y="351.0" width="97.2" height="53.3" fill="none" stroke="#000" stroke-opacity=".18" stroke-width="1"/>
<rect x="815.9" y="422.6" width="99.4" height="55.5" fill="#c3c012" stroke="#f4f4f4" stroke-width="1.2"/>
<rect x="817.0" y="423.7" width="97.2" height="53.3" fill="none" stroke="#000" stroke-opacity=".18" stroke-width="1"/>
<text x="865.9" y="492.8" font-size="11.4" text-anchor="middle" fill="#fff" stroke="#fff" stroke-width=".4">100%</text>
<text transform="translate(337.8 377.8) rotate(-90)" font-size="11.6" stroke="#fff" stroke-width=".4" text-anchor="middle" fill="#fff">Actual</text>
<text transform="translate(337.8 450.3) rotate(-90)" font-size="11.6" stroke="#fff" stroke-width=".4" text-anchor="middle" fill="#fff">Target</text>
<rect x="338.6" y="532.2" width="587.4" height="240.79999999999995" fill="#252525"/>
<line x1="338.6" y1="613.7" x2="926.0" y2="613.7" stroke="#8c8c8c" stroke-width="1"/>
<line x1="338.6" y1="694.2" x2="926.0" y2="694.2" stroke="#8c8c8c" stroke-width="1"/>
<rect x="411.7" y="644.4" width="8.8" height="128.6" fill="#000"/>
<rect x="412.6" y="645.4" width="7.2" height="127.6" fill="url(#e1)"/>
<rect x="447.3" y="666.8" width="9.0" height="106.2" fill="#000"/>
<rect x="448.2" y="667.8" width="7.4" height="105.2" fill="url(#e2)"/>
<rect x="457.6" y="683.9" width="9.0" height="89.1" fill="#000"/>
<rect x="458.5" y="684.9" width="7.4" height="88.1" fill="url(#e3)"/>
<rect x="468.3" y="688.1" width="9.0" height="84.9" fill="#000"/>
<rect x="469.2" y="689.1" width="7.4" height="83.9" fill="url(#e4)"/>
<rect x="478.8" y="669.3" width="9.0" height="103.7" fill="#000"/>
<rect x="479.7" y="670.3" width="7.4" height="102.7" fill="url(#e5)"/>
<rect x="489.3" y="665.4" width="9.0" height="107.6" fill="#000"/>
<rect x="490.2" y="666.4" width="7.4" height="106.6" fill="url(#e6)"/>
<rect x="500.4" y="698.3" width="9.0" height="74.7" fill="#000"/>
<rect x="501.3" y="699.3" width="7.4" height="73.7" fill="url(#e7)"/>
<rect x="544.5" y="677.3" width="9.0" height="95.7" fill="#000"/>
<rect x="545.4" y="678.3" width="7.4" height="94.7" fill="url(#e8)"/>
<rect x="555.2" y="689.2" width="9.0" height="83.8" fill="#000"/>
<rect x="556.1" y="690.2" width="7.4" height="82.8" fill="url(#e9)"/>
<rect x="566.1" y="649.3" width="9.0" height="123.7" fill="#000"/>
<rect x="567.0" y="650.3" width="7.4" height="122.7" fill="url(#e10)"/>
<rect x="576.4" y="652.1" width="9.0" height="120.9" fill="#000"/>
<rect x="577.3" y="653.1" width="7.4" height="119.9" fill="url(#e11)"/>
<rect x="587.2" y="641.3" width="9.0" height="131.7" fill="#000"/>
<rect x="588.1" y="642.3" width="7.4" height="130.7" fill="url(#e12)"/>
<rect x="597.6" y="715.1" width="9.0" height="57.9" fill="#000"/>
<rect x="598.5" y="716.1" width="7.4" height="56.9" fill="url(#e13)"/>
<rect x="642.4" y="690.6" width="9.0" height="82.4" fill="#000"/>
<rect x="643.3" y="691.6" width="7.4" height="81.4" fill="url(#e14)"/>
<rect x="653.0" y="690.6" width="9.0" height="82.4" fill="#000"/>
<rect x="653.9" y="691.6" width="7.4" height="81.4" fill="url(#e15)"/>
<rect x="663.5" y="615.4" width="9.0" height="157.6" fill="#000"/>
<rect x="664.4" y="616.4" width="7.4" height="156.6" fill="url(#e16)"/>
<rect x="674.2" y="642.6" width="9.0" height="130.4" fill="#000"/>
<rect x="675.1" y="643.6" width="7.4" height="129.4" fill="url(#e17)"/>
<rect x="684.4" y="624.1" width="9.0" height="148.9" fill="#000"/>
<rect x="685.3" y="625.1" width="7.4" height="147.9" fill="url(#e18)"/>
<rect x="695.4" y="733.2" width="9.0" height="39.8" fill="#000"/>
<rect x="696.3" y="734.2" width="7.4" height="38.8" fill="url(#e19)"/>
<rect x="740.3" y="685.3" width="9.0" height="87.7" fill="#000"/>
<rect x="741.2" y="686.3" width="7.4" height="86.7" fill="url(#e20)"/>
<rect x="750.6" y="681.1" width="9.0" height="91.9" fill="#000"/>
<rect x="751.5" y="682.1" width="7.4" height="90.9" fill="url(#e21)"/>
<rect x="761.4" y="592.3" width="9.0" height="180.7" fill="#000"/>
<rect x="762.3" y="593.3" width="7.4" height="179.7" fill="url(#e22)"/>
<rect x="772.1" y="642.6" width="9.0" height="130.4" fill="#000"/>
<rect x="773.0" y="643.6" width="7.4" height="129.4" fill="url(#e23)"/>
<rect x="782.4" y="613.3" width="9.0" height="159.7" fill="#000"/>
<rect x="783.3" y="614.3" width="7.4" height="158.7" fill="url(#e24)"/>
<rect x="793.4" y="747.6" width="9.0" height="25.4" fill="#000"/>
<rect x="794.3" y="748.6" width="7.4" height="24.4" fill="url(#e25)"/>
<rect x="838.2" y="686.4" width="9.0" height="86.6" fill="#000"/>
<rect x="839.1" y="687.4" width="7.4" height="85.6" fill="url(#e26)"/>
<rect x="848.4" y="663.0" width="9.0" height="110.0" fill="#000"/>
<rect x="849.3" y="664.0" width="7.4" height="109.0" fill="url(#e27)"/>
<rect x="859.0" y="531.2" width="9.0" height="241.8" fill="#000"/>
<rect x="859.9" y="532.2" width="7.4" height="240.8" fill="url(#e28)"/>
<rect x="869.4" y="636.4" width="9.0" height="136.6" fill="#000"/>
<rect x="870.3" y="637.4" width="7.4" height="135.6" fill="url(#e29)"/>
<rect x="880.2" y="588.5" width="9.0" height="184.5" fill="#000"/>
<rect x="881.1" y="589.5" width="7.4" height="183.5" fill="url(#e30)"/>
<rect x="890.7" y="743.4" width="9.0" height="29.6" fill="#000"/>
<rect x="891.6" y="744.4" width="7.4" height="28.6" fill="url(#e31)"/>
<line x1="338.6" y1="611.8" x2="926.7" y2="611.8" stroke="#d01414" stroke-width="2.0"/>
<line x1="338.6" y1="725.0" x2="926.7" y2="725.0" stroke="#f2f200" stroke-width="1.7"/>
<line x1="338.6" y1="757.8" x2="926.7" y2="757.8" stroke="#008000" stroke-width="1.9"/>
<path d="M338.6 773.9V532.2H926.0V773.9" fill="none" stroke="#9e9e9e" stroke-width="1.4"/>
<line x1="337.90000000000003" y1="773.9" x2="926.7" y2="773.9" stroke="#9e9e9e" stroke-width="2.2"/>
<line x1="338.90000000000003" y1="773.9" x2="338.90000000000003" y2="780.1" stroke="#d4d4d4" stroke-width="1.8"/>
<line x1="436.5" y1="773.9" x2="436.5" y2="780.1" stroke="#d4d4d4" stroke-width="1.8"/>
<line x1="534.4" y1="773.9" x2="534.4" y2="780.1" stroke="#d4d4d4" stroke-width="1.8"/>
<line x1="632.3" y1="773.9" x2="632.3" y2="780.1" stroke="#d4d4d4" stroke-width="1.8"/>
<line x1="730.2" y1="773.9" x2="730.2" y2="780.1" stroke="#d4d4d4" stroke-width="1.8"/>
<line x1="828.1" y1="773.9" x2="828.1" y2="780.1" stroke="#d4d4d4" stroke-width="1.8"/>
<line x1="925.7" y1="773.9" x2="925.7" y2="780.1" stroke="#d4d4d4" stroke-width="1.8"/>
<line x1="333.1" y1="773.9" x2="338.6" y2="773.9" stroke="#d4d4d4" stroke-width="1.3"/>
<text x="333.20000000000005" y="779.3" font-size="14" text-anchor="end" fill="#dcdcdc">0</text>
<line x1="333.1" y1="694.2" x2="338.6" y2="694.2" stroke="#d4d4d4" stroke-width="1.3"/>
<text x="333.20000000000005" y="699.6" font-size="14" text-anchor="end" fill="#dcdcdc">5</text>
<line x1="333.1" y1="613.7" x2="338.6" y2="613.7" stroke="#d4d4d4" stroke-width="1.3"/>
<text x="333.20000000000005" y="619.1" font-size="14" text-anchor="end" fill="#dcdcdc">10</text>
<line x1="333.1" y1="533.5" x2="338.6" y2="533.5" stroke="#d4d4d4" stroke-width="1.3"/>
<text x="333.20000000000005" y="538.9" font-size="14" text-anchor="end" fill="#dcdcdc">15</text>
<text x="622" y="526.3" font-size="14" text-anchor="middle" textLength="77" lengthAdjust="spacingAndGlyphs" fill="#dcdcdc">DeltaE 2000</text>
<text x="387.55" y="789.3" font-size="13.5" text-anchor="middle" fill="#dcdcdc">100</text>
<text x="485.45000000000005" y="789.3" font-size="13.5" text-anchor="middle" fill="#dcdcdc">20%</text>
<text x="583.35" y="789.3" font-size="13.5" text-anchor="middle" fill="#dcdcdc">40%</text>
<text x="681.25" y="789.3" font-size="13.5" text-anchor="middle" fill="#dcdcdc">60%</text>
<text x="779.15" y="789.3" font-size="13.5" text-anchor="middle" fill="#dcdcdc">80%</text>
<text x="877.05" y="789.3" font-size="13.5" text-anchor="middle" fill="#dcdcdc">100%</text>
<rect x="945" y="17.6" width="671.5" height="557" fill="#1d1d1d"/>
<rect x="1616.5" y="17.6" width="3.5" height="557" fill="#2e2e2e"/>
<rect x="952" y="25" width="660.3" height="543" fill="#313131"/>
<rect x="980.5" y="47.6" width="627.8" height="492.4" fill="#252525"/>
<g clip-path="url(#cl)"><g filter="url(#bl)" stroke-width="10.6" fill="none">
<path stroke="#009900" d="M1000 45h90"/>
<path stroke="#009900" d="M990 55h120"/>
<path stroke="#009901" d="M990 65h10"/>
<path stroke="#009900" d="M1000 65h130"/>
<path stroke="#009905" d="M980 75h10"/>
<path stroke="#009904" d="M990 75h10"/>
<path stroke="#009902" d="M1000 75h10"/>
<path stroke="#009901" d="M1010 75h10"/>
<path stroke="#009900" d="M1020 75h130"/>
<path stroke="#009907" d="M980 85h10"/>
<path stroke="#009906" d="M990 85h10"/>
<path stroke="#009905" d="M1000 85h10"/>
<path stroke="#009903" d="M1010 85h10"/>
<path stroke="#009902" d="M1020 85h10"/>
<path stroke="#009900" d="M1030 85h130"/>
<path stroke="#00990b" d="M970 95h10"/>
<path stroke="#00990a" d="M980 95h10"/>
<path stroke="#009908" d="M990 95h10"/>
<path stroke="#009907" d="M1000 95h10"/>
<path stroke="#009906" d="M1010 95h10"/>
<path stroke="#009904" d="M1020 95h10"/>
<path stroke="#009903" d="M1030 95h10"/>
<path stroke="#009901" d="M1040 95h10"/>
<path stroke="#009900" d="M1050 95h130"/>
<path stroke="#00990e" d="M970 105h10"/>
<path stroke="#00990c" d="M980 105h10"/>
<path stroke="#00990b" d="M990 105h10"/>
<path stroke="#00990a" d="M1000 105h10"/>
<path stroke="#009908" d="M1010 105h10"/>
<path stroke="#009907" d="M1020 105h10"/>
<path stroke="#009905" d="M1030 105h10"/>
<path stroke="#009904" d="M1040 105h10"/>
<path stroke="#009902" d="M1050 105h10"/>
<path stroke="#009901" d="M1060 105h10"/>
<path stroke="#009900" d="M1070 105h120"/>
<path stroke="#009910" d="M970 115h10"/>
<path stroke="#00990f" d="M980 115h10"/>
<path stroke="#00990e" d="M990 115h10"/>
<path stroke="#00990c" d="M1000 115h10"/>
<path stroke="#00990b" d="M1010 115h10"/>
<path stroke="#009909" d="M1020 115h10"/>
<path stroke="#009908" d="M1030 115h10"/>
<path stroke="#009906" d="M1040 115h10"/>
<path stroke="#009905" d="M1050 115h10"/>
<path stroke="#009903" d="M1060 115h10"/>
<path stroke="#009902" d="M1070 115h10"/>
<path stroke="#009900" d="M1080 115h130"/>
<path stroke="#009913" d="M970 125h10"/>
<path stroke="#009912" d="M980 125h10"/>
<path stroke="#009911" d="M990 125h10"/>
<path stroke="#00990f" d="M1000 125h10"/>
<path stroke="#00990e" d="M1010 125h10"/>
<path stroke="#00990c" d="M1020 125h10"/>
<path stroke="#00990b" d="M1030 125h10"/>
<path stroke="#009909" d="M1040 125h10"/>
<path stroke="#009908" d="M1050 125h10"/>
<path stroke="#009906" d="M1060 125h10"/>
<path stroke="#009905" d="M1070 125h10"/>
<path stroke="#009903" d="M1080 125h10"/>
<path stroke="#009901" d="M1090 125h10"/>
<path stroke="#009900" d="M1100 125h120"/>
<path stroke="#009916" d="M970 135h10"/>
<path stroke="#009915" d="M980 135h10"/>
<path stroke="#009914" d="M990 135h10"/>
<path stroke="#009912" d="M1000 135h10"/>
<path stroke="#009911" d="M1010 135h10"/>
<path stroke="#00990f" d="M1020 135h10"/>
<path stroke="#00990e" d="M1030 135h10"/>
<path stroke="#00990c" d="M1040 135h10"/>
<path stroke="#00990b" d="M1050 135h10"/>
<path stroke="#009909" d="M1060 135h10"/>
<path stroke="#009907" d="M1070 135h10"/>
<path stroke="#009906" d="M1080 135h10"/>
<path stroke="#009904" d="M1090 135h10"/>
<path stroke="#009902" d="M1100 135h10"/>
<path stroke="#009901" d="M1110 135h10"/>
<path stroke="#009900" d="M1120 135h100"/>
<path stroke="#029900" d="M1220 135h10"/>
<path stroke="#0a9900" d="M1230 135h10"/>
<path stroke="#009919" d="M970 145h10"/>
<path stroke="#009918" d="M980 145h10"/>
<path stroke="#009917" d="M990 145h10"/>
<path stroke="#009915" d="M1000 145h10"/>
<path stroke="#009914" d="M1010 145h10"/>
<path stroke="#009912" d="M1020 145h10"/>
<path stroke="#009911" d="M1030 145h10"/>
<path stroke="#00990f" d="M1040 145h10"/>
<path stroke="#00990e" d="M1050 145h10"/>
<path stroke="#00990c" d="M1060 145h10"/>
<path stroke="#00990b" d="M1070 145h10"/>
<path stroke="#009909" d="M1080 145h10"/>
<path stroke="#009907" d="M1090 145h10"/>
<path stroke="#009905" d="M1100 145h10"/>
<path stroke="#009904" d="M1110 145h10"/>
<path stroke="#009902" d="M1120 145h10"/>
<path stroke="#009900" d="M1130 145h90"/>
<path stroke="#059900" d="M1220 145h10"/>
<path stroke="#0d9900" d="M1230 145h10"/>
<path stroke="#169900" d="M1240 145h10"/>
<path stroke="#00991d" d="M970 155h10"/>
<path stroke="#00991b" d="M980 155h10"/>
<path stroke="#00991a" d="M990 155h10"/>
<path stroke="#009919" d="M1000 155h10"/>
<path stroke="#009917" d="M1010 155h10"/>
<path stroke="#009916" d="M1020 155h10"/>
<path stroke="#009914" d="M1030 155h10"/>
<path stroke="#009913" d="M1040 155h10"/>
<path stroke="#009911" d="M1050 155h10"/>
<path stroke="#00990f" d="M1060 155h10"/>
<path stroke="#00990e" d="M1070 155h10"/>
<path stroke="#00990c" d="M1080 155h10"/>
<path stroke="#00990a" d="M1090 155h10"/>
<path stroke="#009909" d="M1100 155h10"/>
<path stroke="#009907" d="M1110 155h10"/>
<path stroke="#009905" d="M1120 155h10"/>
<path stroke="#009903" d="M1130 155h10"/>
<path stroke="#009901" d="M1140 155h10"/>
<path stroke="#009900" d="M1150 155h70"/>
<path stroke="#089900" d="M1220 155h10"/>
<path stroke="#119900" d="M1230 155h10"/>
<path stroke="#199900" d="M1240 155h10"/>
<path stroke="#239900" d="M1250 155h10"/>
<path stroke="#009920" d="M970 165h10"/>
<path stroke="#00991f" d="M980 165h10"/>
<path stroke="#00991d" d="M990 165h10"/>
<path stroke="#00991c" d="M1000 165h10"/>
<path stroke="#00991b" d="M1010 165h10"/>
<path stroke="#009919" d="M1020 165h10"/>
<path stroke="#009918" d="M1030 165h10"/>
<path stroke="#009916" d="M1040 165h10"/>
<path stroke="#009914" d="M1050 165h10"/>
<path stroke="#009913" d="M1060 165h10"/>
<path stroke="#009911" d="M1070 165h10"/>
<path stroke="#009910" d="M1080 165h10"/>
<path stroke="#00990e" d="M1090 165h10"/>
<path stroke="#00990c" d="M1100 165h10"/>
<path stroke="#00990a" d="M1110 165h10"/>
<path stroke="#009908" d="M1120 165h10"/>
<path stroke="#009906" d="M1130 165h10"/>
<path stroke="#009904" d="M1140 165h10"/>
<path stroke="#009902" d="M1150 165h10"/>
<path stroke="#009900" d="M1160 165h50"/>
<path stroke="#039900" d="M1210 165h10"/>
<path stroke="#0b9900" d="M1220 165h10"/>
<path stroke="#149900" d="M1230 165h10"/>
<path stroke="#1e9900" d="M1240 165h10"/>
<path stroke="#279900" d="M1250 165h10"/>
<path stroke="#319900" d="M1260 165h10"/>
<path stroke="#3b9900" d="M1270 165h10"/>
<path stroke="#009924" d="M970 175h10"/>
<path stroke="#009922" d="M980 175h10"/>
<path stroke="#009921" d="M990 175h10"/>
<path stroke="#009920" d="M1000 175h10"/>
<path stroke="#00991e" d="M1010 175h10"/>
<path stroke="#00991d" d="M1020 175h10"/>
<path stroke="#00991b" d="M1030 175h10"/>
<path stroke="#00991a" d="M1040 175h10"/>
<path stroke="#009918" d="M1050 175h10"/>
<path stroke="#009916" d="M1060 175h10"/>
<path stroke="#009915" d="M1070 175h10"/>
<path stroke="#009913" d="M1080 175h10"/>
<path stroke="#009911" d="M1090 175h10"/>
<path stroke="#009910" d="M1100 175h10"/>
<path stroke="#00990e" d="M1110 175h10"/>
<path stroke="#00990c" d="M1120 175h10"/>
<path stroke="#00990a" d="M1130 175h10"/>
<path stroke="#009908" d="M1140 175h10"/>
<path stroke="#009906" d="M1150 175h10"/>
<path stroke="#009904" d="M1160 175h10"/>
<path stroke="#009902" d="M1170 175h10"/>
<path stroke="#009900" d="M1180 175h30"/>
<path stroke="#069900" d="M1210 175h10"/>
<path stroke="#0f9900" d="M1220 175h10"/>
<path stroke="#189900" d="M1230 175h10"/>
<path stroke="#229900" d="M1240 175h10"/>
<path stroke="#2c9900" d="M1250 175h10"/>
<path stroke="#369900" d="M1260 175h10"/>
<path stroke="#419900" d="M1270 175h10"/>
<path stroke="#4c9900" d="M1280 175h10"/>
<path stroke="#009928" d="M970 185h10"/>
<path stroke="#009926" d="M980 185h10"/>
<path stroke="#009925" d="M990 185h10"/>
<path stroke="#009923" d="M1000 185h10"/>
<path stroke="#009922" d="M1010 185h10"/>
<path stroke="#009921" d="M1020 185h10"/>
<path stroke="#00991f" d="M1030 185h10"/>
<path stroke="#00991e" d="M1040 185h10"/>
<path stroke="#00991c" d="M1050 185h10"/>
<path stroke="#00991a" d="M1060 185h10"/>
<path stroke="#009919" d="M1070 185h10"/>
<path stroke="#009917" d="M1080 185h10"/>
<path stroke="#009915" d="M1090 185h10"/>
<path stroke="#009913" d="M1100 185h10"/>
<path stroke="#009912" d="M1110 185h10"/>
<path stroke="#009910" d="M1120 185h10"/>
<path stroke="#00990e" d="M1130 185h10"/>
<path stroke="#00990c" d="M1140 185h10"/>
<path stroke="#00990a" d="M1150 185h10"/>
<path stroke="#009908" d="M1160 185h10"/>
<path stroke="#009905" d="M1170 185h10"/>
<path stroke="#009903" d="M1180 185h10"/>
<path stroke="#009901" d="M1190 185h10"/>
<path stroke="#009900" d="M1200 185h10"/>
<path stroke="#099900" d="M1210 185h10"/>
<path stroke="#139900" d="M1220 185h10"/>
<path stroke="#1d9900" d="M1230 185h10"/>
<path stroke="#279900" d="M1240 185h10"/>
<path stroke="#319900" d="M1250 185h10"/>
<path stroke="#3c9900" d="M1260 185h10"/>
<path stroke="#479900" d="M1270 185h10"/>
<path stroke="#539900" d="M1280 185h10"/>
<path stroke="#5f9900" d="M1290 185h10"/>
<path stroke="#00992c" d="M970 195h10"/>
<path stroke="#00992a" d="M980 195h10"/>
<path stroke="#009929" d="M990 195h10"/>
<path stroke="#009928" d="M1000 195h10"/>
<path stroke="#009926" d="M1010 195h10"/>
<path stroke="#009925" d="M1020 195h10"/>
<path stroke="#009923" d="M1030 195h10"/>
<path stroke="#009922" d="M1040 195h10"/>
<path stroke="#009920" d="M1050 195h10"/>
<path stroke="#00991e" d="M1060 195h10"/>
<path stroke="#00991d" d="M1070 195h10"/>
<path stroke="#00991b" d="M1080 195h10"/>
<path stroke="#009919" d="M1090 195h10"/>
<path stroke="#009918" d="M1100 195h10"/>
<path stroke="#009916" d="M1110 195h10"/>
<path stroke="#009914" d="M1120 195h10"/>
<path stroke="#009912" d="M1130 195h10"/>
<path stroke="#009910" d="M1140 195h10"/>
<path stroke="#00990e" d="M1150 195h10"/>
<path stroke="#00990c" d="M1160 195h10"/>
<path stroke="#009909" d="M1170 195h10"/>
<path stroke="#009907" d="M1180 195h10"/>
<path stroke="#009905" d="M1190 195h10"/>
<path stroke="#049902" d="M1200 195h10"/>
<path stroke="#0d9900" d="M1210 195h10"/>
<path stroke="#179900" d="M1220 195h10"/>
<path stroke="#219900" d="M1230 195h10"/>
<path stroke="#2c9900" d="M1240 195h10"/>
<path stroke="#379900" d="M1250 195h10"/>
<path stroke="#429900" d="M1260 195h10"/>
<path stroke="#4e9900" d="M1270 195h10"/>
<path stroke="#5b9900" d="M1280 195h10"/>
<path stroke="#679900" d="M1290 195h10"/>
<path stroke="#759900" d="M1300 195h10"/>
<path stroke="#829900" d="M1310 195h10"/>
<path stroke="#009930" d="M970 205h10"/>
<path stroke="#00992f" d="M980 205h10"/>
<path stroke="#00992d" d="M990 205h10"/>
<path stroke="#00992c" d="M1000 205h10"/>
<path stroke="#00992a" d="M1010 205h10"/>
<path stroke="#009929" d="M1020 205h10"/>
<path stroke="#009928" d="M1030 205h10"/>
<path stroke="#009926" d="M1040 205h10"/>
<path stroke="#009924" d="M1050 205h10"/>
<path stroke="#009923" d="M1060 205h10"/>
<path stroke="#009921" d="M1070 205h10"/>
<path stroke="#009920" d="M1080 205h10"/>
<path stroke="#00991e" d="M1090 205h10"/>
<path stroke="#00991c" d="M1100 205h10"/>
<path stroke="#00991a" d="M1110 205h10"/>
<path stroke="#009918" d="M1120 205h10"/>
<path stroke="#009916" d="M1130 205h10"/>
<path stroke="#009914" d="M1140 205h10"/>
<path stroke="#009912" d="M1150 205h10"/>
<path stroke="#009910" d="M1160 205h10"/>
<path stroke="#00990e" d="M1170 205h10"/>
<path stroke="#00990b" d="M1180 205h10"/>
<path stroke="#009909" d="M1190 205h10"/>
<path stroke="#079907" d="M1200 205h10"/>
<path stroke="#119904" d="M1210 205h10"/>
<path stroke="#1c9901" d="M1220 205h10"/>
<path stroke="#269900" d="M1230 205h10"/>
<path stroke="#329900" d="M1240 205h10"/>
<path stroke="#3d9900" d="M1250 205h10"/>
<path stroke="#499900" d="M1260 205h10"/>
<path stroke="#569900" d="M1270 205h10"/>
<path stroke="#639900" d="M1280 205h10"/>
<path stroke="#709900" d="M1290 205h10"/>
<path stroke="#7e9900" d="M1300 205h10"/>
<path stroke="#8d9900" d="M1310 205h10"/>
<path stroke="#999600" d="M1320 205h10"/>
<path stroke="#009934" d="M970 215h10"/>
<path stroke="#009933" d="M980 215h10"/>
<path stroke="#009932" d="M990 215h10"/>
<path stroke="#009930" d="M1000 215h10"/>
<path stroke="#00992f" d="M1010 215h10"/>
<path stroke="#00992e" d="M1020 215h10"/>
<path stroke="#00992c" d="M1030 215h10"/>
<path stroke="#00992b" d="M1040 215h10"/>
<path stroke="#009929" d="M1050 215h10"/>
<path stroke="#009928" d="M1060 215h10"/>
<path stroke="#009926" d="M1070 215h10"/>
<path stroke="#009924" d="M1080 215h10"/>
<path stroke="#009922" d="M1090 215h10"/>
<path stroke="#009921" d="M1100 215h10"/>
<path stroke="#00991f" d="M1110 215h10"/>
<path stroke="#00991d" d="M1120 215h10"/>
<path stroke="#00991b" d="M1130 215h10"/>
<path stroke="#009919" d="M1140 215h10"/>
<path stroke="#009917" d="M1150 215h10"/>
<path stroke="#009915" d="M1160 215h10"/>
<path stroke="#009912" d="M1170 215h10"/>
<path stroke="#009910" d="M1180 215h10"/>
<path stroke="#01990e" d="M1190 215h10"/>
<path stroke="#0b990b" d="M1200 215h10"/>
<path stroke="#169909" d="M1210 215h10"/>
<path stroke="#219906" d="M1220 215h10"/>
<path stroke="#2c9903" d="M1230 215h10"/>
<path stroke="#389900" d="M1240 215h10"/>
<path stroke="#449900" d="M1250 215h10"/>
<path stroke="#519900" d="M1260 215h10"/>
<path stroke="#5e9900" d="M1270 215h10"/>
<path stroke="#6c9900" d="M1280 215h10"/>
<path stroke="#7a9900" d="M1290 215h10"/>
<path stroke="#899900" d="M1300 215h10"/>
<path stroke="#999900" d="M1310 215h10"/>
<path stroke="#998a00" d="M1320 215h10"/>
<path stroke="#997d00" d="M1330 215h10"/>
<path stroke="#009939" d="M970 225h10"/>
<path stroke="#009938" d="M980 225h10"/>
<path stroke="#009937" d="M990 225h10"/>
<path stroke="#009935" d="M1000 225h10"/>
<path stroke="#009934" d="M1010 225h10"/>
<path stroke="#009932" d="M1020 225h10"/>
<path stroke="#009931" d="M1030 225h10"/>
<path stroke="#009930" d="M1040 225h10"/>
<path stroke="#00992e" d="M1050 225h10"/>
<path stroke="#00992c" d="M1060 225h10"/>
<path stroke="#00992b" d="M1070 225h10"/>
<path stroke="#009929" d="M1080 225h10"/>
<path stroke="#009927" d="M1090 225h10"/>
<path stroke="#009926" d="M1100 225h10"/>
<path stroke="#009924" d="M1110 225h10"/>
<path stroke="#009922" d="M1120 225h10"/>
<path stroke="#009920" d="M1130 225h10"/>
<path stroke="#00991e" d="M1140 225h10"/>
<path stroke="#00991c" d="M1150 225h10"/>
<path stroke="#00991a" d="M1160 225h10"/>
<path stroke="#009918" d="M1170 225h10"/>
<path stroke="#009915" d="M1180 225h10"/>
<path stroke="#059913" d="M1190 225h10"/>
<path stroke="#0f9910" d="M1200 225h10"/>
<path stroke="#1a990e" d="M1210 225h10"/>
<path stroke="#26990b" d="M1220 225h10"/>
<path stroke="#329908" d="M1230 225h10"/>
<path stroke="#3e9905" d="M1240 225h10"/>
<path stroke="#4b9902" d="M1250 225h10"/>
<path stroke="#599900" d="M1260 225h10"/>
<path stroke="#679900" d="M1270 225h10"/>
<path stroke="#769900" d="M1280 225h10"/>
<path stroke="#859900" d="M1290 225h10"/>
<path stroke="#959900" d="M1300 225h10"/>
<path stroke="#998d00" d="M1310 225h10"/>
<path stroke="#997f00" d="M1320 225h10"/>
<path stroke="#997400" d="M1330 225h10"/>
<path stroke="#996900" d="M1340 225h10"/>
<path stroke="#00993e" d="M970 235h10"/>
<path stroke="#00993d" d="M980 235h10"/>
<path stroke="#00993c" d="M990 235h10"/>
<path stroke="#00993a" d="M1000 235h10"/>
<path stroke="#009939" d="M1010 235h10"/>
<path stroke="#009938" d="M1020 235h10"/>
<path stroke="#009936" d="M1030 235h10"/>
<path stroke="#009935" d="M1040 235h10"/>
<path stroke="#009933" d="M1050 235h10"/>
<path stroke="#009932" d="M1060 235h10"/>
<path stroke="#009930" d="M1070 235h10"/>
<path stroke="#00992f" d="M1080 235h10"/>
<path stroke="#00992d" d="M1090 235h10"/>
<path stroke="#00992b" d="M1100 235h10"/>
<path stroke="#009929" d="M1110 235h10"/>
<path stroke="#009927" d="M1120 235h10"/>
<path stroke="#009926" d="M1130 235h10"/>
<path stroke="#009924" d="M1140 235h10"/>
<path stroke="#009921" d="M1150 235h10"/>
<path stroke="#00991f" d="M1160 235h10"/>
<path stroke="#00991d" d="M1170 235h10"/>
<path stroke="#00991b" d="M1180 235h10"/>
<path stroke="#099918" d="M1190 235h10"/>
<path stroke="#149916" d="M1200 235h10"/>
<path stroke="#209913" d="M1210 235h10"/>
<path stroke="#2c9911" d="M1220 235h10"/>
<path stroke="#38990e" d="M1230 235h10"/>
<path stroke="#46990b" d="M1240 235h10"/>
<path stroke="#549908" d="M1250 235h10"/>
<path stroke="#629905" d="M1260 235h10"/>
<path stroke="#719901" d="M1270 235h10"/>
<path stroke="#819900" d="M1280 235h10"/>
<path stroke="#919900" d="M1290 235h10"/>
<path stroke="#999000" d="M1300 235h10"/>
<path stroke="#998100" d="M1310 235h10"/>
<path stroke="#997500" d="M1320 235h10"/>
<path stroke="#996a00" d="M1330 235h10"/>
<path stroke="#996100" d="M1340 235h10"/>
<path stroke="#995900" d="M1350 235h10"/>
<path stroke="#995100" d="M1360 235h10"/>
<path stroke="#009944" d="M970 245h10"/>
<path stroke="#009942" d="M980 245h10"/>
<path stroke="#009941" d="M990 245h10"/>
<path stroke="#009940" d="M1000 245h10"/>
<path stroke="#00993f" d="M1010 245h10"/>
<path stroke="#00993d" d="M1020 245h10"/>
<path stroke="#00993c" d="M1030 245h10"/>
<path stroke="#00993b" d="M1040 245h10"/>
<path stroke="#009939" d="M1050 245h10"/>
<path stroke="#009938" d="M1060 245h10"/>
<path stroke="#009936" d="M1070 245h10"/>
<path stroke="#009934" d="M1080 245h10"/>
<path stroke="#009933" d="M1090 245h10"/>
<path stroke="#009931" d="M1100 245h10"/>
<path stroke="#00992f" d="M1110 245h10"/>
<path stroke="#00992d" d="M1120 245h10"/>
<path stroke="#00992b" d="M1130 245h10"/>
<path stroke="#00992a" d="M1140 245h10"/>
<path stroke="#009927" d="M1150 245h10"/>
<path stroke="#009925" d="M1160 245h10"/>
<path stroke="#009923" d="M1170 245h10"/>
<path stroke="#029921" d="M1180 245h10"/>
<path stroke="#0d991e" d="M1190 245h10"/>
<path stroke="#19991c" d="M1200 245h10"/>
<path stroke="#259919" d="M1210 245h10"/>
<path stroke="#329917" d="M1220 245h10"/>
<path stroke="#409914" d="M1230 245h10"/>
<path stroke="#4e9911" d="M1240 245h10"/>
<path stroke="#5d990e" d="M1250 245h10"/>
<path stroke="#6c990b" d="M1260 245h10"/>
<path stroke="#7c9907" d="M1270 245h10"/>
<path stroke="#8d9904" d="M1280 245h10"/>
<path stroke="#999300" d="M1290 245h10"/>
<path stroke="#998400" d="M1300 245h10"/>
<path stroke="#997700" d="M1310 245h10"/>
<path stroke="#996b00" d="M1320 245h10"/>
<path stroke="#996200" d="M1330 245h10"/>
<path stroke="#995900" d="M1340 245h10"/>
<path stroke="#995100" d="M1350 245h10"/>
<path stroke="#994b00" d="M1360 245h10"/>
<path stroke="#994500" d="M1370 245h10"/>
<path stroke="#009949" d="M970 255h10"/>
<path stroke="#009948" d="M980 255h10"/>
<path stroke="#009947" d="M990 255h10"/>
<path stroke="#009946" d="M1000 255h10"/>
<path stroke="#009945" d="M1010 255h10"/>
<path stroke="#009943" d="M1020 255h10"/>
<path stroke="#009942" d="M1030 255h10"/>
<path stroke="#009941" d="M1040 255h10"/>
<path stroke="#00993f" d="M1050 255h10"/>
<path stroke="#00993e" d="M1060 255h10"/>
<path stroke="#00993c" d="M1070 255h10"/>
<path stroke="#00993b" d="M1080 255h10"/>
<path stroke="#009939" d="M1090 255h10"/>
<path stroke="#009937" d="M1100 255h10"/>
<path stroke="#009936" d="M1110 255h10"/>
<path stroke="#009934" d="M1120 255h10"/>
<path stroke="#009932" d="M1130 255h10"/>
<path stroke="#009930" d="M1140 255h10"/>
<path stroke="#00992e" d="M1150 255h10"/>
<path stroke="#00992c" d="M1160 255h10"/>
<path stroke="#00992a" d="M1170 255h10"/>
<path stroke="#069927" d="M1180 255h10"/>
<path stroke="#129925" d="M1190 255h10"/>
<path stroke="#1f9923" d="M1200 255h10"/>
<path stroke="#2c9920" d="M1210 255h10"/>
<path stroke="#39991d" d="M1220 255h10"/>
<path stroke="#48991b" d="M1230 255h10"/>
<path stroke="#579918" d="M1240 255h10"/>
<path stroke="#679915" d="M1250 255h10"/>
<path stroke="#779911" d="M1260 255h10"/>
<path stroke="#88990e" d="M1270 255h10"/>
<path stroke="#99970a" d="M1280 255h10"/>
<path stroke="#998706" d="M1290 255h10"/>
<path stroke="#997802" d="M1300 255h10"/>
<path stroke="#996c00" d="M1310 255h10"/>
<path stroke="#996200" d="M1320 255h10"/>
<path stroke="#995900" d="M1330 255h10"/>
<path stroke="#995100" d="M1340 255h10"/>
<path stroke="#994a00" d="M1350 255h10"/>
<path stroke="#994400" d="M1360 255h10"/>
<path stroke="#993e00" d="M1370 255h10"/>
<path stroke="#993900" d="M1380 255h10"/>
<path stroke="#009950" d="M970 265h10"/>
<path stroke="#00994e" d="M980 265h10"/>
<path stroke="#00994d" d="M990 265h10"/>
<path stroke="#00994c" d="M1000 265h10"/>
<path stroke="#00994b" d="M1010 265h10"/>
<path stroke="#00994a" d="M1020 265h10"/>
<path stroke="#009948" d="M1030 265h10"/>
<path stroke="#009947" d="M1040 265h10"/>
<path stroke="#009946" d="M1050 265h10"/>
<path stroke="#009944" d="M1060 265h10"/>
<path stroke="#009943" d="M1070 265h10"/>
<path stroke="#009941" d="M1080 265h10"/>
<path stroke="#009940" d="M1090 265h10"/>
<path stroke="#00993e" d="M1100 265h10"/>
<path stroke="#00993d" d="M1110 265h10"/>
<path stroke="#00993b" d="M1120 265h10"/>
<path stroke="#009939" d="M1130 265h10"/>
<path stroke="#009937" d="M1140 265h10"/>
<path stroke="#009935" d="M1150 265h10"/>
<path stroke="#009933" d="M1160 265h10"/>
<path stroke="#009931" d="M1170 265h10"/>
<path stroke="#0b992f" d="M1180 265h10"/>
<path stroke="#17992c" d="M1190 265h10"/>
<path stroke="#25992a" d="M1200 265h10"/>
<path stroke="#339927" d="M1210 265h10"/>
<path stroke="#419925" d="M1220 265h10"/>
<path stroke="#519922" d="M1230 265h10"/>
<path stroke="#61991f" d="M1240 265h10"/>
<path stroke="#72991c" d="M1250 265h10"/>
<path stroke="#849919" d="M1260 265h10"/>
<path stroke="#969915" d="M1270 265h10"/>
<path stroke="#998910" d="M1280 265h10"/>
<path stroke="#997a0b" d="M1290 265h10"/>
<path stroke="#996e07" d="M1300 265h10"/>
<path stroke="#996304" d="M1310 265h10"/>
<path stroke="#995901" d="M1320 265h10"/>
<path stroke="#995100" d="M1330 265h10"/>
<path stroke="#994a00" d="M1340 265h10"/>
<path stroke="#994300" d="M1350 265h10"/>
<path stroke="#993e00" d="M1360 265h10"/>
<path stroke="#993800" d="M1370 265h10"/>
<path stroke="#993400" d="M1380 265h10"/>
<path stroke="#992f00" d="M1390 265h10"/>
<path stroke="#992c00" d="M1400 265h10"/>
<path stroke="#009956" d="M970 275h10"/>
<path stroke="#009955" d="M980 275h10"/>
<path stroke="#009954" d="M990 275h10"/>
<path stroke="#009953" d="M1000 275h10"/>
<path stroke="#009952" d="M1010 275h10"/>
<path stroke="#009951" d="M1020 275h10"/>
<path stroke="#009950" d="M1030 275h10"/>
<path stroke="#00994e" d="M1040 275h10"/>
<path stroke="#00994d" d="M1050 275h10"/>
<path stroke="#00994c" d="M1060 275h10"/>
<path stroke="#00994a" d="M1070 275h10"/>
<path stroke="#009949" d="M1080 275h10"/>
<path stroke="#009947" d="M1090 275h10"/>
<path stroke="#009946" d="M1100 275h10"/>
<path stroke="#009944" d="M1110 275h10"/>
<path stroke="#009942" d="M1120 275h10"/>
<path stroke="#009941" d="M1130 275h10"/>
<path stroke="#00993f" d="M1140 275h10"/>
<path stroke="#00993d" d="M1150 275h10"/>
<path stroke="#00993b" d="M1160 275h10"/>
<path stroke="#039939" d="M1170 275h10"/>
<path stroke="#109937" d="M1180 275h10"/>
<path stroke="#1d9935" d="M1190 275h10"/>
<path stroke="#2c9932" d="M1200 275h10"/>
<path stroke="#3b9930" d="M1210 275h10"/>
<path stroke="#4a992d" d="M1220 275h10"/>
<path stroke="#5b992a" d="M1230 275h10"/>
<path stroke="#6c9927" d="M1240 275h10"/>
<path stroke="#7e9924" d="M1250 275h10"/>
<path stroke="#929921" d="M1260 275h10"/>
<path stroke="#998d1b" d="M1270 275h10"/>
<path stroke="#997d15" d="M1280 275h10"/>
<path stroke="#996f10" d="M1290 275h10"/>
<path stroke="#99630c" d="M1300 275h10"/>
<path stroke="#995a08" d="M1310 275h10"/>
<path stroke="#995105" d="M1320 275h10"/>
<path stroke="#994902" d="M1330 275h10"/>
<path stroke="#994300" d="M1340 275h10"/>
<path stroke="#993d00" d="M1350 275h10"/>
<path stroke="#993700" d="M1360 275h10"/>
<path stroke="#993300" d="M1370 275h10"/>
<path stroke="#992e00" d="M1380 275h10"/>
<path stroke="#992a00" d="M1390 275h10"/>
<path stroke="#992700" d="M1400 275h10"/>
<path stroke="#992300" d="M1410 275h10"/>
<path stroke="#00995c" d="M980 285h10"/>
<path stroke="#00995b" d="M990 285h10"/>
<path stroke="#00995a" d="M1000 285h10"/>
<path stroke="#009959" d="M1010 285h10"/>
<path stroke="#009958" d="M1020 285h10"/>
<path stroke="#009957" d="M1030 285h10"/>
<path stroke="#009956" d="M1040 285h10"/>
<path stroke="#009955" d="M1050 285h10"/>
<path stroke="#009953" d="M1060 285h10"/>
<path stroke="#009952" d="M1070 285h10"/>
<path stroke="#009951" d="M1080 285h10"/>
<path stroke="#00994f" d="M1090 285h10"/>
<path stroke="#00994e" d="M1100 285h10"/>
<path stroke="#00994c" d="M1110 285h10"/>
<path stroke="#00994b" d="M1120 285h10"/>
<path stroke="#009949" d="M1130 285h10"/>
<path stroke="#009947" d="M1140 285h10"/>
<path stroke="#009946" d="M1150 285h10"/>
<path stroke="#009944" d="M1160 285h10"/>
<path stroke="#089942" d="M1170 285h10"/>
<path stroke="#159940" d="M1180 285h10"/>
<path stroke="#24993e" d="M1190 285h10"/>
<path stroke="#33993b" d="M1200 285h10"/>
<path stroke="#439939" d="M1210 285h10"/>
<path stroke="#549936" d="M1220 285h10"/>
<path stroke="#669934" d="M1230 285h10"/>
<path stroke="#799931" d="M1240 285h10"/>
<path stroke="#8d992e" d="M1250 285h10"/>
<path stroke="#999128" d="M1260 285h10"/>
<path stroke="#997f21" d="M1270 285h10"/>
<path stroke="#99701a" d="M1280 285h10"/>
<path stroke="#996415" d="M1290 285h10"/>
<path stroke="#995a10" d="M1300 285h10"/>
<path stroke="#99510c" d="M1310 285h10"/>
<path stroke="#994909" d="M1320 285h10"/>
<path stroke="#994206" d="M1330 285h10"/>
<path stroke="#993c03" d="M1340 285h10"/>
<path stroke="#993601" d="M1350 285h10"/>
<path stroke="#993200" d="M1360 285h10"/>
<path stroke="#992d00" d="M1370 285h10"/>
<path stroke="#992900" d="M1380 285h10"/>
<path stroke="#992500" d="M1390 285h10"/>
<path stroke="#992200" d="M1400 285h10"/>
<path stroke="#991f00" d="M1410 285h10"/>
<path stroke="#991c00" d="M1420 285h10"/>
<path stroke="#009964" d="M980 295h10"/>
<path stroke="#009963" d="M990 295h10"/>
<path stroke="#009962" d="M1000 295h10"/>
<path stroke="#009961" d="M1010 295h10"/>
<path stroke="#009960" d="M1020 295h10"/>
<path stroke="#00995f" d="M1030 295h10"/>
<path stroke="#00995e" d="M1040 295h10"/>
<path stroke="#00995d" d="M1050 295h10"/>
<path stroke="#00995c" d="M1060 295h10"/>
<path stroke="#00995b" d="M1070 295h10"/>
<path stroke="#00995a" d="M1080 295h10"/>
<path stroke="#009958" d="M1090 295h10"/>
<path stroke="#009957" d="M1100 295h10"/>
<path stroke="#009956" d="M1110 295h10"/>
<path stroke="#009954" d="M1120 295h10"/>
<path stroke="#009953" d="M1130 295h10"/>
<path stroke="#009951" d="M1140 295h10"/>
<path stroke="#00994f" d="M1150 295h10"/>
<path stroke="#00994e" d="M1160 295h10"/>
<path stroke="#0d994c" d="M1170 295h10"/>
<path stroke="#1c994a" d="M1180 295h10"/>
<path stroke="#2b9948" d="M1190 295h10"/>
<path stroke="#3c9946" d="M1200 295h10"/>
<path stroke="#4d9943" d="M1210 295h10"/>
<path stroke="#5f9941" d="M1220 295h10"/>
<path stroke="#73993e" d="M1230 295h10"/>
<path stroke="#87993c" d="M1240 295h10"/>
<path stroke="#999537" d="M1250 295h10"/>
<path stroke="#99822e" d="M1260 295h10"/>
<path stroke="#997226" d="M1270 295h10"/>
<path stroke="#99651f" d="M1280 295h10"/>
<path stroke="#995a19" d="M1290 295h10"/>
<path stroke="#995115" d="M1300 295h10"/>
<path stroke="#994811" d="M1310 295h10"/>
<path stroke="#99410d" d="M1320 295h10"/>
<path stroke="#993b0a" d="M1330 295h10"/>
<path stroke="#993507" d="M1340 295h10"/>
<path stroke="#993004" d="M1350 295h10"/>
<path stroke="#992c02" d="M1360 295h10"/>
<path stroke="#992800" d="M1370 295h10"/>
<path stroke="#992400" d="M1380 295h10"/>
<path stroke="#992100" d="M1390 295h10"/>
<path stroke="#991e00" d="M1400 295h10"/>
<path stroke="#991b00" d="M1410 295h10"/>
<path stroke="#991800" d="M1420 295h10"/>
<path stroke="#991600" d="M1430 295h10"/>
<path stroke="#00996c" d="M980 305h20"/>
<path stroke="#00996b" d="M1000 305h10"/>
<path stroke="#00996a" d="M1010 305h10"/>
<path stroke="#009969" d="M1020 305h10"/>
<path stroke="#009968" d="M1030 305h10"/>
<path stroke="#009967" d="M1040 305h10"/>
<path stroke="#009966" d="M1050 305h10"/>
<path stroke="#009965" d="M1060 305h10"/>
<path stroke="#009964" d="M1070 305h10"/>
<path stroke="#009963" d="M1080 305h10"/>
<path stroke="#009962" d="M1090 305h10"/>
<path stroke="#009961" d="M1100 305h10"/>
<path stroke="#009960" d="M1110 305h10"/>
<path stroke="#00995e" d="M1120 305h10"/>
<path stroke="#00995d" d="M1130 305h10"/>
<path stroke="#00995c" d="M1140 305h10"/>
<path stroke="#00995a" d="M1150 305h10"/>
<path stroke="#049958" d="M1160 305h10"/>
<path stroke="#139957" d="M1170 305h10"/>
<path stroke="#239955" d="M1180 305h10"/>
<path stroke="#349953" d="M1190 305h10"/>
<path stroke="#469951" d="M1200 305h10"/>
<path stroke="#58994f" d="M1210 305h10"/>
<path stroke="#6c994d" d="M1220 305h10"/>
<path stroke="#82994b" d="M1230 305h10"/>
<path stroke="#989948" d="M1240 305h10"/>
<path stroke="#99853c" d="M1250 305h10"/>
<path stroke="#997432" d="M1260 305h10"/>
<path stroke="#99662a" d="M1270 305h10"/>
<path stroke="#995a24" d="M1280 305h10"/>
<path stroke="#99501e" d="M1290 305h10"/>
<path stroke="#994819" d="M1300 305h10"/>
<path stroke="#994015" d="M1310 305h10"/>
<path stroke="#993a11" d="M1320 305h10"/>
<path stroke="#99340d" d="M1330 305h10"/>
<path stroke="#992f0a" d="M1340 305h10"/>
<path stroke="#992b08" d="M1350 305h10"/>
<path stroke="#992605" d="M1360 305h10"/>
<path stroke="#992303" d="M1370 305h10"/>
<path stroke="#991f01" d="M1380 305h10"/>
<path stroke="#991c00" d="M1390 305h10"/>
<path stroke="#991900" d="M1400 305h10"/>
<path stroke="#991700" d="M1410 305h10"/>
<path stroke="#991400" d="M1420 305h10"/>
<path stroke="#991200" d="M1430 305h10"/>
<path stroke="#991000" d="M1440 305h10"/>
<path stroke="#990e00" d="M1450 305h10"/>
<path stroke="#009976" d="M980 315h10"/>
<path stroke="#009975" d="M990 315h10"/>
<path stroke="#009974" d="M1000 315h20"/>
<path stroke="#009973" d="M1020 315h10"/>
<path stroke="#009972" d="M1030 315h10"/>
<path stroke="#009971" d="M1040 315h20"/>
<path stroke="#009970" d="M1060 315h10"/>
<path stroke="#00996f" d="M1070 315h10"/>
<path stroke="#00996e" d="M1080 315h10"/>
<path stroke="#00996d" d="M1090 315h10"/>
<path stroke="#00996c" d="M1100 315h10"/>
<path stroke="#00996b" d="M1110 315h10"/>
<path stroke="#00996a" d="M1120 315h10"/>
<path stroke="#009969" d="M1130 315h10"/>
<path stroke="#009967" d="M1140 315h10"/>
<path stroke="#009966" d="M1150 315h10"/>
<path stroke="#0a9965" d="M1160 315h10"/>
<path stroke="#1a9963" d="M1170 315h10"/>
<path stroke="#2b9962" d="M1180 315h10"/>
<path stroke="#3d9960" d="M1190 315h10"/>
<path stroke="#51995f" d="M1200 315h10"/>
<path stroke="#65995d" d="M1210 315h10"/>
<path stroke="#7b995b" d="M1220 315h10"/>
<path stroke="#939959" d="M1230 315h10"/>
<path stroke="#99884d" d="M1240 315h10"/>
<path stroke="#997641" d="M1250 315h10"/>
<path stroke="#996737" d="M1260 315h10"/>
<path stroke="#995b2f" d="M1270 315h10"/>
<path stroke="#995028" d="M1280 315h10"/>
<path stroke="#994722" d="M1290 315h10"/>
<path stroke="#99401d" d="M1300 315h10"/>
<path stroke="#993918" d="M1310 315h10"/>
<path stroke="#993314" d="M1320 315h10"/>
<path stroke="#992e11" d="M1330 315h10"/>
<path stroke="#99290e" d="M1340 315h10"/>
<path stroke="#99250b" d="M1350 315h10"/>
<path stroke="#992108" d="M1360 315h10"/>
<path stroke="#991e06" d="M1370 315h10"/>
<path stroke="#991a04" d="M1380 315h10"/>
<path stroke="#991802" d="M1390 315h10"/>
<path stroke="#991500" d="M1400 315h10"/>
<path stroke="#991300" d="M1410 315h10"/>
<path stroke="#991000" d="M1420 315h10"/>
<path stroke="#990e00" d="M1430 315h10"/>
<path stroke="#990c00" d="M1440 315h10"/>
<path stroke="#990a00" d="M1450 315h10"/>
<path stroke="#990900" d="M1460 315h10"/>
<path stroke="#00997f" d="M980 325h30"/>
<path stroke="#00997e" d="M1010 325h10"/>
<path stroke="#00997d" d="M1020 325h20"/>
<path stroke="#00997c" d="M1040 325h20"/>
<path stroke="#00997b" d="M1060 325h10"/>
<path stroke="#00997a" d="M1070 325h20"/>
<path stroke="#009979" d="M1090 325h10"/>
<path stroke="#009978" d="M1100 325h10"/>
<path stroke="#009977" d="M1110 325h20"/>
<path stroke="#009976" d="M1130 325h10"/>
<path stroke="#009975" d="M1140 325h10"/>
<path stroke="#009974" d="M1150 325h10"/>
<path stroke="#109973" d="M1160 325h10"/>
<path stroke="#229972" d="M1170 325h10"/>
<path stroke="#359970" d="M1180 325h10"/>
<path stroke="#49996f" d="M1190 325h10"/>
<path stroke="#5e996e" d="M1200 325h10"/>
<path stroke="#74996c" d="M1210 325h10"/>
<path stroke="#8c996b" d="M1220 325h10"/>
<path stroke="#998d61" d="M1230 325h10"/>
<path stroke="#997851" d="M1240 325h10"/>
<path stroke="#996845" d="M1250 325h10"/>
<path stroke="#995b3b" d="M1260 325h10"/>
<path stroke="#995033" d="M1270 325h10"/>
<path stroke="#99472c" d="M1280 325h10"/>
<path stroke="#993f26" d="M1290 325h10"/>
<path stroke="#993820" d="M1300 325h10"/>
<path stroke="#99321c" d="M1310 325h10"/>
<path stroke="#992c18" d="M1320 325h10"/>
<path stroke="#992714" d="M1330 325h10"/>
<path stroke="#992311" d="M1340 325h10"/>
<path stroke="#991f0e" d="M1350 325h10"/>
<path stroke="#991c0b" d="M1360 325h10"/>
<path stroke="#991909" d="M1370 325h10"/>
<path stroke="#991607" d="M1380 325h10"/>
<path stroke="#991305" d="M1390 325h10"/>
<path stroke="#991103" d="M1400 325h10"/>
<path stroke="#990f01" d="M1410 325h10"/>
<path stroke="#990d00" d="M1420 325h10"/>
<path stroke="#990b00" d="M1430 325h10"/>
<path stroke="#990900" d="M1440 325h10"/>
<path stroke="#990700" d="M1450 325h10"/>
<path stroke="#990600" d="M1460 325h10"/>
<path stroke="#990400" d="M1470 325h10"/>
<path stroke="#00998a" d="M990 335h20"/>
<path stroke="#009989" d="M1010 335h30"/>
<path stroke="#009988" d="M1040 335h30"/>
<path stroke="#009987" d="M1070 335h30"/>
<path stroke="#009986" d="M1100 335h20"/>
<path stroke="#009985" d="M1120 335h20"/>
<path stroke="#009984" d="M1140 335h10"/>
<path stroke="#069983" d="M1150 335h10"/>
<path stroke="#189983" d="M1160 335h10"/>
<path stroke="#2b9982" d="M1170 335h10"/>
<path stroke="#3f9981" d="M1180 335h10"/>
<path stroke="#559981" d="M1190 335h10"/>
<path stroke="#6d9980" d="M1200 335h10"/>
<path stroke="#86997f" d="M1210 335h10"/>
<path stroke="#999278" d="M1220 335h10"/>
<path stroke="#997b65" d="M1230 335h10"/>
<path stroke="#996a55" d="M1240 335h10"/>
<path stroke="#995b49" d="M1250 335h10"/>
<path stroke="#99503f" d="M1260 335h10"/>
<path stroke="#994637" d="M1270 335h10"/>
<path stroke="#993e30" d="M1280 335h10"/>
<path stroke="#993629" d="M1290 335h10"/>
<path stroke="#993024" d="M1300 335h10"/>
<path stroke="#992b1f" d="M1310 335h10"/>
<path stroke="#99261b" d="M1320 335h10"/>
<path stroke="#992117" d="M1330 335h10"/>
<path stroke="#991e14" d="M1340 335h10"/>
<path stroke="#991a11" d="M1350 335h10"/>
<path stroke="#99170e" d="M1360 335h10"/>
<path stroke="#99140c" d="M1370 335h10"/>
<path stroke="#99110a" d="M1380 335h10"/>
<path stroke="#990f08" d="M1390 335h10"/>
<path stroke="#990d06" d="M1400 335h10"/>
<path stroke="#990b04" d="M1410 335h10"/>
<path stroke="#990902" d="M1420 335h10"/>
<path stroke="#990701" d="M1430 335h10"/>
<path stroke="#990500" d="M1440 335h10"/>
<path stroke="#990400" d="M1450 335h10"/>
<path stroke="#990200" d="M1460 335h10"/>
<path stroke="#990100" d="M1470 335h10"/>
<path stroke="#990000" d="M1480 335h20"/>
<path stroke="#009996" d="M990 345h150"/>
<path stroke="#009995" d="M1140 345h10"/>
<path stroke="#0d9995" d="M1150 345h10"/>
<path stroke="#219995" d="M1160 345h10"/>
<path stroke="#369995" d="M1170 345h10"/>
<path stroke="#4c9995" d="M1180 345h10"/>
<path stroke="#649995" d="M1190 345h10"/>
<path stroke="#7e9995" d="M1200 345h10"/>
<path stroke="#999793" d="M1210 345h10"/>
<path stroke="#997e7b" d="M1220 345h10"/>
<path stroke="#996b68" d="M1230 345h10"/>
<path stroke="#995c59" d="M1240 345h10"/>
<path stroke="#994f4d" d="M1250 345h10"/>
<path stroke="#994543" d="M1260 345h10"/>
<path stroke="#993c3a" d="M1270 345h10"/>
<path stroke="#993533" d="M1280 345h10"/>
<path stroke="#992f2d" d="M1290 345h10"/>
<path stroke="#992927" d="M1300 345h10"/>
<path stroke="#992423" d="M1310 345h10"/>
<path stroke="#99201e" d="M1320 345h10"/>
<path stroke="#991c1b" d="M1330 345h10"/>
<path stroke="#991817" d="M1340 345h10"/>
<path stroke="#991514" d="M1350 345h10"/>
<path stroke="#991211" d="M1360 345h10"/>
<path stroke="#99100f" d="M1370 345h10"/>
<path stroke="#990d0c" d="M1380 345h10"/>
<path stroke="#990b0a" d="M1390 345h10"/>
<path stroke="#990908" d="M1400 345h10"/>
<path stroke="#990706" d="M1410 345h10"/>
<path stroke="#990505" d="M1420 345h10"/>
<path stroke="#990403" d="M1430 345h10"/>
<path stroke="#990202" d="M1440 345h10"/>
<path stroke="#990100" d="M1450 345h10"/>
<path stroke="#990000" d="M1460 345h50"/>
<path stroke="#008f99" d="M990 355h30"/>
<path stroke="#008e99" d="M1020 355h30"/>
<path stroke="#008d99" d="M1050 355h30"/>
<path stroke="#008c99" d="M1080 355h30"/>
<path stroke="#008b99" d="M1110 355h20"/>
<path stroke="#008a99" d="M1130 355h10"/>
<path stroke="#018a99" d="M1140 355h10"/>
<path stroke="#138999" d="M1150 355h10"/>
<path stroke="#268999" d="M1160 355h10"/>
<path stroke="#3b8899" d="M1170 355h10"/>
<path stroke="#518899" d="M1180 355h10"/>
<path stroke="#688799" d="M1190 355h10"/>
<path stroke="#828699" d="M1200 355h10"/>
<path stroke="#998295" d="M1210 355h10"/>
<path stroke="#996d7e" d="M1220 355h10"/>
<path stroke="#995c6b" d="M1230 355h10"/>
<path stroke="#994f5d" d="M1240 355h10"/>
<path stroke="#994450" d="M1250 355h10"/>
<path stroke="#993b46" d="M1260 355h10"/>
<path stroke="#99333e" d="M1270 355h10"/>
<path stroke="#992d37" d="M1280 355h10"/>
<path stroke="#992730" d="M1290 355h10"/>
<path stroke="#99222b" d="M1300 355h10"/>
<path stroke="#991e26" d="M1310 355h10"/>
<path stroke="#991a21" d="M1320 355h10"/>
<path stroke="#99161d" d="M1330 355h10"/>
<path stroke="#99131a" d="M1340 355h10"/>
<path stroke="#991017" d="M1350 355h10"/>
<path stroke="#990e14" d="M1360 355h10"/>
<path stroke="#990b11" d="M1370 355h10"/>
<path stroke="#99090f" d="M1380 355h10"/>
<path stroke="#99070d" d="M1390 355h10"/>
<path stroke="#99050b" d="M1400 355h10"/>
<path stroke="#990309" d="M1410 355h10"/>
<path stroke="#990207" d="M1420 355h10"/>
<path stroke="#990005" d="M1430 355h10"/>
<path stroke="#990004" d="M1440 355h10"/>
<path stroke="#990002" d="M1450 355h10"/>
<path stroke="#990001" d="M1460 355h10"/>
<path stroke="#990000" d="M1470 355h50"/>
<path stroke="#008399" d="M990 365h20"/>
<path stroke="#008299" d="M1010 365h20"/>
<path stroke="#008199" d="M1030 365h20"/>
<path stroke="#008099" d="M1050 365h10"/>
<path stroke="#007f99" d="M1060 365h20"/>
<path stroke="#007e99" d="M1080 365h10"/>
<path stroke="#007d99" d="M1090 365h10"/>
<path stroke="#007c99" d="M1100 365h20"/>
<path stroke="#007b99" d="M1120 365h10"/>
<path stroke="#007a99" d="M1130 365h10"/>
<path stroke="#077999" d="M1140 365h10"/>
<path stroke="#187899" d="M1150 365h10"/>
<path stroke="#2b7799" d="M1160 365h10"/>
<path stroke="#3e7699" d="M1170 365h10"/>
<path stroke="#537599" d="M1180 365h10"/>
<path stroke="#697399" d="M1190 365h10"/>
<path stroke="#817299" d="M1200 365h10"/>
<path stroke="#996f97" d="M1210 365h10"/>
<path stroke="#995d80" d="M1220 365h10"/>
<path stroke="#994f6e" d="M1230 365h10"/>
<path stroke="#994360" d="M1240 365h10"/>
<path stroke="#993a54" d="M1250 365h10"/>
<path stroke="#99324a" d="M1260 365h10"/>
<path stroke="#992b41" d="M1270 365h10"/>
<path stroke="#99253a" d="M1280 365h10"/>
<path stroke="#992033" d="M1290 365h10"/>
<path stroke="#991b2e" d="M1300 365h10"/>
<path stroke="#991729" d="M1310 365h10"/>
<path stroke="#991424" d="M1320 365h10"/>
<path stroke="#991120" d="M1330 365h10"/>
<path stroke="#990e1d" d="M1340 365h10"/>
<path stroke="#990b19" d="M1350 365h10"/>
<path stroke="#990917" d="M1360 365h10"/>
<path stroke="#990714" d="M1370 365h10"/>
<path stroke="#990511" d="M1380 365h10"/>
<path stroke="#99030f" d="M1390 365h10"/>
<path stroke="#99010d" d="M1400 365h10"/>
<path stroke="#99000b" d="M1410 365h10"/>
<path stroke="#990009" d="M1420 365h10"/>
<path stroke="#990007" d="M1430 365h10"/>
<path stroke="#990006" d="M1440 365h10"/>
<path stroke="#990004" d="M1450 365h10"/>
<path stroke="#990003" d="M1460 365h10"/>
<path stroke="#990002" d="M1470 365h10"/>
<path stroke="#990000" d="M1480 365h50"/>
<path stroke="#007799" d="M1000 375h20"/>
<path stroke="#007699" d="M1020 375h10"/>
<path stroke="#007599" d="M1030 375h10"/>
<path stroke="#007499" d="M1040 375h10"/>
<path stroke="#007399" d="M1050 375h10"/>
<path stroke="#007299" d="M1060 375h20"/>
<path stroke="#007199" d="M1080 375h10"/>
<path stroke="#007099" d="M1090 375h10"/>
<path stroke="#006e99" d="M1100 375h10"/>
<path stroke="#006d99" d="M1110 375h10"/>
<path stroke="#006c99" d="M1120 375h10"/>
<path stroke="#006b99" d="M1130 375h10"/>
<path stroke="#0c6a99" d="M1140 375h10"/>
<path stroke="#1d6899" d="M1150 375h10"/>
<path stroke="#2f6799" d="M1160 375h10"/>
<path stroke="#416599" d="M1170 375h10"/>
<path stroke="#556399" d="M1180 375h10"/>
<path stroke="#6b6299" d="M1190 375h10"/>
<path stroke="#816099" d="M1200 375h10"/>
<path stroke="#995e99" d="M1210 375h10"/>
<path stroke="#994e83" d="M1220 375h10"/>
<path stroke="#994271" d="M1230 375h10"/>
<path stroke="#993863" d="M1240 375h10"/>
<path stroke="#993057" d="M1250 375h10"/>
<path stroke="#99294d" d="M1260 375h10"/>
<path stroke="#992344" d="M1270 375h10"/>
<path stroke="#991e3d" d="M1280 375h10"/>
<path stroke="#991936" d="M1290 375h10"/>
<path stroke="#991531" d="M1300 375h10"/>
<path stroke="#99122c" d="M1310 375h10"/>
<path stroke="#990e27" d="M1320 375h10"/>
<path stroke="#990c23" d="M1330 375h10"/>
<path stroke="#99091f" d="M1340 375h10"/>
<path stroke="#99071c" d="M1350 375h10"/>
<path stroke="#990519" d="M1360 375h10"/>
<path stroke="#990316" d="M1370 375h10"/>
<path stroke="#990114" d="M1380 375h10"/>
<path stroke="#990011" d="M1390 375h10"/>
<path stroke="#99000f" d="M1400 375h10"/>
<path stroke="#99000d" d="M1410 375h10"/>
<path stroke="#99000b" d="M1420 375h10"/>
<path stroke="#99000a" d="M1430 375h10"/>
<path stroke="#990008" d="M1440 375h10"/>
<path stroke="#990006" d="M1450 375h10"/>
<path stroke="#990005" d="M1460 375h10"/>
<path stroke="#990004" d="M1470 375h10"/>
<path stroke="#990002" d="M1480 375h10"/>
<path stroke="#990001" d="M1490 375h10"/>
<path stroke="#990000" d="M1500 375h40"/>
<path stroke="#006d99" d="M1000 385h10"/>
<path stroke="#006c99" d="M1010 385h10"/>
<path stroke="#006b99" d="M1020 385h10"/>
<path stroke="#006a99" d="M1030 385h10"/>
<path stroke="#006999" d="M1040 385h10"/>
<path stroke="#006899" d="M1050 385h10"/>
<path stroke="#006799" d="M1060 385h10"/>
<path stroke="#006599" d="M1070 385h10"/>
<path stroke="#006499" d="M1080 385h10"/>
<path stroke="#006399" d="M1090 385h10"/>
<path stroke="#006299" d="M1100 385h10"/>
<path stroke="#006099" d="M1110 385h10"/>
<path stroke="#005f99" d="M1120 385h10"/>
<path stroke="#025d99" d="M1130 385h10"/>
<path stroke="#115c99" d="M1140 385h10"/>
<path stroke="#215a99" d="M1150 385h10"/>
<path stroke="#325899" d="M1160 385h10"/>
<path stroke="#445699" d="M1170 385h10"/>
<path stroke="#575499" d="M1180 385h10"/>
<path stroke="#6c5299" d="M1190 385h10"/>
<path stroke="#815099" d="M1200 385h10"/>
<path stroke="#984d99" d="M1210 385h10"/>
<path stroke="#994185" d="M1220 385h10"/>
<path stroke="#993674" d="M1230 385h10"/>
<path stroke="#992e65" d="M1240 385h10"/>
<path stroke="#99265a" d="M1250 385h10"/>
<path stroke="#992050" d="M1260 385h10"/>
<path stroke="#991b47" d="M1270 385h10"/>
<path stroke="#991740" d="M1280 385h10"/>
<path stroke="#991339" d="M1290 385h10"/>
<path stroke="#990f34" d="M1300 385h10"/>
<path stroke="#990c2e" d="M1310 385h10"/>
<path stroke="#99092a" d="M1320 385h10"/>
<path stroke="#990726" d="M1330 385h10"/>
<path stroke="#990422" d="M1340 385h10"/>
<path stroke="#99021f" d="M1350 385h10"/>
<path stroke="#99001c" d="M1360 385h10"/>
<path stroke="#990019" d="M1370 385h10"/>
<path stroke="#990016" d="M1380 385h10"/>
<path stroke="#990014" d="M1390 385h10"/>
<path stroke="#990011" d="M1400 385h10"/>
<path stroke="#99000f" d="M1410 385h10"/>
<path stroke="#99000d" d="M1420 385h10"/>
<path stroke="#99000c" d="M1430 385h10"/>
<path stroke="#99000a" d="M1440 385h10"/>
<path stroke="#990008" d="M1450 385h10"/>
<path stroke="#990007" d="M1460 385h10"/>
<path stroke="#990005" d="M1470 385h10"/>
<path stroke="#990004" d="M1480 385h10"/>
<path stroke="#990003" d="M1490 385h10"/>
<path stroke="#990002" d="M1500 385h10"/>
<path stroke="#990001" d="M1510 385h10"/>
<path stroke="#990000" d="M1520 385h30"/>
<path stroke="#006399" d="M1000 395h10"/>
<path stroke="#006299" d="M1010 395h10"/>
<path stroke="#006099" d="M1020 395h10"/>
<path stroke="#005f99" d="M1030 395h10"/>
<path stroke="#005e99" d="M1040 395h10"/>
<path stroke="#005d99" d="M1050 395h10"/>
<path stroke="#005b99" d="M1060 395h10"/>
<path stroke="#005a99" d="M1070 395h10"/>
<path stroke="#005999" d="M1080 395h10"/>
<path stroke="#005799" d="M1090 395h10"/>
<path stroke="#005699" d="M1100 395h10"/>
<path stroke="#005499" d="M1110 395h10"/>
<path stroke="#005299" d="M1120 395h10"/>
<path stroke="#075199" d="M1130 395h10"/>
<path stroke="#164f99" d="M1140 395h10"/>
<path stroke="#254d99" d="M1150 395h10"/>
<path stroke="#364b99" d="M1160 395h10"/>
<path stroke="#474899" d="M1170 395h10"/>
<path stroke="#594699" d="M1180 395h10"/>
<path stroke="#6c4499" d="M1190 395h10"/>
<path stroke="#814199" d="M1200 395h10"/>
<path stroke="#973e99" d="M1210 395h10"/>
<path stroke="#993487" d="M1220 395h10"/>
<path stroke="#992b76" d="M1230 395h10"/>
<path stroke="#992468" d="M1240 395h10"/>
<path stroke="#991e5c" d="M1250 395h10"/>
<path stroke="#991853" d="M1260 395h10"/>
<path stroke="#99144a" d="M1270 395h10"/>
<path stroke="#991043" d="M1280 395h10"/>
<path stroke="#990c3c" d="M1290 395h10"/>
<path stroke="#990936" d="M1300 395h10"/>
<path stroke="#990731" d="M1310 395h10"/>
<path stroke="#99042c" d="M1320 395h10"/>
<path stroke="#990228" d="M1330 395h10"/>
<path stroke="#990025" d="M1340 395h10"/>
<path stroke="#990021" d="M1350 395h10"/>
<path stroke="#99001e" d="M1360 395h10"/>
<path stroke="#99001b" d="M1370 395h10"/>
<path stroke="#990018" d="M1380 395h10"/>
<path stroke="#990016" d="M1390 395h10"/>
<path stroke="#990014" d="M1400 395h10"/>
<path stroke="#990011" d="M1410 395h10"/>
<path stroke="#99000f" d="M1420 395h10"/>
<path stroke="#99000e" d="M1430 395h10"/>
<path stroke="#99000c" d="M1440 395h10"/>
<path stroke="#99000a" d="M1450 395h10"/>
<path stroke="#990009" d="M1460 395h10"/>
<path stroke="#990007" d="M1470 395h10"/>
<path stroke="#990006" d="M1480 395h10"/>
<path stroke="#990005" d="M1490 395h10"/>
<path stroke="#990003" d="M1500 395h10"/>
<path stroke="#990002" d="M1510 395h10"/>
<path stroke="#990001" d="M1520 395h10"/>
<path stroke="#990000" d="M1530 395h10"/>
<path stroke="#005899" d="M1010 405h10"/>
<path stroke="#005799" d="M1020 405h10"/>
<path stroke="#005599" d="M1030 405h10"/>
<path stroke="#005499" d="M1040 405h10"/>
<path stroke="#005399" d="M1050 405h10"/>
<path stroke="#005199" d="M1060 405h10"/>
<path stroke="#005099" d="M1070 405h10"/>
<path stroke="#004e99" d="M1080 405h10"/>
<path stroke="#004c99" d="M1090 405h10"/>
<path stroke="#004b99" d="M1100 405h10"/>
<path stroke="#004999" d="M1110 405h10"/>
<path stroke="#004799" d="M1120 405h10"/>
<path stroke="#0b4599" d="M1130 405h10"/>
<path stroke="#1a4399" d="M1140 405h10"/>
<path stroke="#294199" d="M1150 405h10"/>
<path stroke="#393e99" d="M1160 405h10"/>
<path stroke="#493c99" d="M1170 405h10"/>
<path stroke="#5b3999" d="M1180 405h10"/>
<path stroke="#6d3699" d="M1190 405h10"/>
<path stroke="#813499" d="M1200 405h10"/>
<path stroke="#953199" d="M1210 405h10"/>
<path stroke="#992888" d="M1220 405h10"/>
<path stroke="#992178" d="M1230 405h10"/>
<path stroke="#991b6b" d="M1240 405h10"/>
<path stroke="#99155f" d="M1250 405h10"/>
<path stroke="#991155" d="M1260 405h10"/>
<path stroke="#990d4d" d="M1270 405h10"/>
<path stroke="#990945" d="M1280 405h10"/>
<path stroke="#99063f" d="M1290 405h10"/>
<path stroke="#990439" d="M1300 405h10"/>
<path stroke="#990134" d="M1310 405h10"/>
<path stroke="#99002f" d="M1320 405h10"/>
<path stroke="#99002b" d="M1330 405h10"/>
<path stroke="#990027" d="M1340 405h10"/>
<path stroke="#990023" d="M1350 405h10"/>
<path stroke="#990020" d="M1360 405h10"/>
<path stroke="#99001d" d="M1370 405h10"/>
<path stroke="#99001b" d="M1380 405h10"/>
<path stroke="#990018" d="M1390 405h10"/>
<path stroke="#990016" d="M1400 405h10"/>
<path stroke="#990014" d="M1410 405h10"/>
<path stroke="#990012" d="M1420 405h10"/>
<path stroke="#990010" d="M1430 405h10"/>
<path stroke="#99000e" d="M1440 405h10"/>
<path stroke="#99000c" d="M1450 405h10"/>
<path stroke="#99000b" d="M1460 405h10"/>
<path stroke="#990009" d="M1470 405h10"/>
<path stroke="#990008" d="M1480 405h10"/>
<path stroke="#990006" d="M1490 405h10"/>
<path stroke="#990005" d="M1500 405h10"/>
<path stroke="#990004" d="M1510 405h10"/>
<path stroke="#004f99" d="M1010 415h10"/>
<path stroke="#004e99" d="M1020 415h10"/>
<path stroke="#004c99" d="M1030 415h10"/>
<path stroke="#004b99" d="M1040 415h10"/>
<path stroke="#004999" d="M1050 415h10"/>
<path stroke="#004799" d="M1060 415h10"/>
<path stroke="#004699" d="M1070 415h10"/>
<path stroke="#004499" d="M1080 415h10"/>
<path stroke="#004299" d="M1090 415h10"/>
<path stroke="#004099" d="M1100 415h10"/>
<path stroke="#003e99" d="M1110 415h10"/>
<path stroke="#023c99" d="M1120 415h10"/>
<path stroke="#103a99" d="M1130 415h10"/>
<path stroke="#1e3899" d="M1140 415h10"/>
<path stroke="#2c3599" d="M1150 415h10"/>
<path stroke="#3b3399" d="M1160 415h10"/>
<path stroke="#4b3099" d="M1170 415h10"/>
<path stroke="#5c2d99" d="M1180 415h10"/>
<path stroke="#6e2b99" d="M1190 415h10"/>
<path stroke="#812799" d="M1200 415h10"/>
<path stroke="#942499" d="M1210 415h10"/>
<path stroke="#991e8a" d="M1220 415h10"/>
<path stroke="#99177a" d="M1230 415h10"/>
<path stroke="#99126d" d="M1240 415h10"/>
<path stroke="#990d61" d="M1250 415h10"/>
<path stroke="#990a58" d="M1260 415h10"/>
<path stroke="#99064f" d="M1270 415h10"/>
<path stroke="#990348" d="M1280 415h10"/>
<path stroke="#990141" d="M1290 415h10"/>
<path stroke="#99003b" d="M1300 415h10"/>
<path stroke="#990036" d="M1310 415h10"/>
<path stroke="#990031" d="M1320 415h10"/>
<path stroke="#99002d" d="M1330 415h10"/>
<path stroke="#990029" d="M1340 415h10"/>
<path stroke="#990026" d="M1350 415h10"/>
<path stroke="#990023" d="M1360 415h10"/>
<path stroke="#990020" d="M1370 415h10"/>
<path stroke="#99001d" d="M1380 415h10"/>
<path stroke="#99001a" d="M1390 415h10"/>
<path stroke="#990018" d="M1400 415h10"/>
<path stroke="#990016" d="M1410 415h10"/>
<path stroke="#990014" d="M1420 415h10"/>
<path stroke="#990012" d="M1430 415h10"/>
<path stroke="#990010" d="M1440 415h10"/>
<path stroke="#99000e" d="M1450 415h10"/>
<path stroke="#99000c" d="M1460 415h10"/>
<path stroke="#99000b" d="M1470 415h10"/>
<path stroke="#990009" d="M1480 415h10"/>
<path stroke="#990008" d="M1490 415h10"/>
<path stroke="#004699" d="M1010 425h10"/>
<path stroke="#004599" d="M1020 425h10"/>
<path stroke="#004399" d="M1030 425h10"/>
<path stroke="#004299" d="M1040 425h10"/>
<path stroke="#004099" d="M1050 425h10"/>
<path stroke="#003e99" d="M1060 425h10"/>
<path stroke="#003c99" d="M1070 425h10"/>
<path stroke="#003b99" d="M1080 425h10"/>
<path stroke="#003999" d="M1090 425h10"/>
<path stroke="#003799" d="M1100 425h10"/>
<path stroke="#003499" d="M1110 425h10"/>
<path stroke="#073299" d="M1120 425h10"/>
<path stroke="#143099" d="M1130 425h10"/>
<path stroke="#212e99" d="M1140 425h10"/>
<path stroke="#2f2b99" d="M1150 425h10"/>
<path stroke="#3e2899" d="M1160 425h10"/>
<path stroke="#4d2699" d="M1170 425h10"/>
<path stroke="#5e2399" d="M1180 425h10"/>
<path stroke="#6f2099" d="M1190 425h10"/>
<path stroke="#811c99" d="M1200 425h10"/>
<path stroke="#931999" d="M1210 425h10"/>
<path stroke="#99138c" d="M1220 425h10"/>
<path stroke="#990e7c" d="M1230 425h10"/>
<path stroke="#990a6f" d="M1240 425h10"/>
<path stroke="#990664" d="M1250 425h10"/>
<path stroke="#99035a" d="M1260 425h10"/>
<path stroke="#990052" d="M1270 425h10"/>
<path stroke="#99004a" d="M1280 425h10"/>
<path stroke="#990044" d="M1290 425h10"/>
<path stroke="#99003e" d="M1300 425h10"/>
<path stroke="#990039" d="M1310 425h10"/>
<path stroke="#990034" d="M1320 425h10"/>
<path stroke="#990030" d="M1330 425h10"/>
<path stroke="#99002c" d="M1340 425h10"/>
<path stroke="#990028" d="M1350 425h10"/>
<path stroke="#990025" d="M1360 425h10"/>
<path stroke="#990022" d="M1370 425h10"/>
<path stroke="#99001f" d="M1380 425h10"/>
<path stroke="#99001c" d="M1390 425h10"/>
<path stroke="#99001a" d="M1400 425h10"/>
<path stroke="#990018" d="M1410 425h10"/>
<path stroke="#990015" d="M1420 425h10"/>
<path stroke="#990013" d="M1430 425h10"/>
<path stroke="#990012" d="M1440 425h10"/>
<path stroke="#990010" d="M1450 425h10"/>
<path stroke="#99000e" d="M1460 425h10"/>
<path stroke="#003d99" d="M1020 435h10"/>
<path stroke="#003b99" d="M1030 435h10"/>
<path stroke="#003999" d="M1040 435h10"/>
<path stroke="#003899" d="M1050 435h10"/>
<path stroke="#003699" d="M1060 435h10"/>
<path stroke="#003499" d="M1070 435h10"/>
<path stroke="#003299" d="M1080 435h10"/>
<path stroke="#003099" d="M1090 435h10"/>
<path stroke="#002e99" d="M1100 435h10"/>
<path stroke="#002b99" d="M1110 435h10"/>
<path stroke="#0b2999" d="M1120 435h10"/>
<path stroke="#172799" d="M1130 435h10"/>
<path stroke="#242499" d="M1140 435h10"/>
<path stroke="#322199" d="M1150 435h10"/>
<path stroke="#401f99" d="M1160 435h10"/>
<path stroke="#4f1c99" d="M1170 435h10"/>
<path stroke="#5f1999" d="M1180 435h10"/>
<path stroke="#6f1599" d="M1190 435h10"/>
<path stroke="#801299" d="M1200 435h10"/>
<path stroke="#930f99" d="M1210 435h10"/>
<path stroke="#990a8d" d="M1220 435h10"/>
<path stroke="#99067e" d="M1230 435h10"/>
<path stroke="#990271" d="M1240 435h10"/>
<path stroke="#990066" d="M1250 435h10"/>
<path stroke="#99005c" d="M1260 435h10"/>
<path stroke="#990054" d="M1270 435h10"/>
<path stroke="#99004d" d="M1280 435h10"/>
<path stroke="#990046" d="M1290 435h10"/>
<path stroke="#990040" d="M1300 435h10"/>
<path stroke="#99003b" d="M1310 435h10"/>
<path stroke="#990036" d="M1320 435h10"/>
<path stroke="#990032" d="M1330 435h10"/>
<path stroke="#99002e" d="M1340 435h10"/>
<path stroke="#99002a" d="M1350 435h10"/>
<path stroke="#990027" d="M1360 435h10"/>
<path stroke="#990024" d="M1370 435h10"/>
<path stroke="#990021" d="M1380 435h10"/>
<path stroke="#99001e" d="M1390 435h10"/>
<path stroke="#99001c" d="M1400 435h10"/>
<path stroke="#990019" d="M1410 435h10"/>
<path stroke="#990017" d="M1420 435h10"/>
<path stroke="#990015" d="M1430 435h10"/>
<path stroke="#003599" d="M1020 445h10"/>
<path stroke="#003399" d="M1030 445h10"/>
<path stroke="#003199" d="M1040 445h10"/>
<path stroke="#003099" d="M1050 445h10"/>
<path stroke="#002e99" d="M1060 445h10"/>
<path stroke="#002c99" d="M1070 445h10"/>
<path stroke="#002a99" d="M1080 445h10"/>
<path stroke="#002799" d="M1090 445h10"/>
<path stroke="#002599" d="M1100 445h10"/>
<path stroke="#032399" d="M1110 445h10"/>
<path stroke="#0f2099" d="M1120 445h10"/>
<path stroke="#1b1e99" d="M1130 445h10"/>
<path stroke="#271b99" d="M1140 445h10"/>
<path stroke="#351899" d="M1150 445h10"/>
<path stroke="#421699" d="M1160 445h10"/>
<path stroke="#511399" d="M1170 445h10"/>
<path stroke="#600f99" d="M1180 445h10"/>
<path stroke="#700c99" d="M1190 445h10"/>
<path stroke="#800999" d="M1200 445h10"/>
<path stroke="#920599" d="M1210 445h10"/>
<path stroke="#99018f" d="M1220 445h10"/>
<path stroke="#990080" d="M1230 445h10"/>
<path stroke="#990073" d="M1240 445h10"/>
<path stroke="#990068" d="M1250 445h10"/>
<path stroke="#99005f" d="M1260 445h10"/>
<path stroke="#990056" d="M1270 445h10"/>
<path stroke="#99004f" d="M1280 445h10"/>
<path stroke="#990048" d="M1290 445h10"/>
<path stroke="#990042" d="M1300 445h10"/>
<path stroke="#99003d" d="M1310 445h10"/>
<path stroke="#990038" d="M1320 445h10"/>
<path stroke="#990034" d="M1330 445h10"/>
<path stroke="#990030" d="M1340 445h10"/>
<path stroke="#99002c" d="M1350 445h10"/>
<path stroke="#990029" d="M1360 445h10"/>
<path stroke="#990026" d="M1370 445h10"/>
<path stroke="#990023" d="M1380 445h10"/>
<path stroke="#990020" d="M1390 445h10"/>
<path stroke="#99001e" d="M1400 445h10"/>
<path stroke="#002e99" d="M1020 455h10"/>
<path stroke="#002c99" d="M1030 455h10"/>
<path stroke="#002a99" d="M1040 455h10"/>
<path stroke="#002899" d="M1050 455h10"/>
<path stroke="#002699" d="M1060 455h10"/>
<path stroke="#002499" d="M1070 455h10"/>
<path stroke="#002299" d="M1080 455h10"/>
<path stroke="#002099" d="M1090 455h10"/>
<path stroke="#001d99" d="M1100 455h10"/>
<path stroke="#071b99" d="M1110 455h10"/>
<path stroke="#121899" d="M1120 455h10"/>
<path stroke="#1e1699" d="M1130 455h10"/>
<path stroke="#2a1399" d="M1140 455h10"/>
<path stroke="#371099" d="M1150 455h10"/>
<path stroke="#440d99" d="M1160 455h10"/>
<path stroke="#520a99" d="M1170 455h10"/>
<path stroke="#610799" d="M1180 455h10"/>
<path stroke="#700499" d="M1190 455h10"/>
<path stroke="#800099" d="M1200 455h10"/>
<path stroke="#910099" d="M1210 455h10"/>
<path stroke="#990090" d="M1220 455h10"/>
<path stroke="#990081" d="M1230 455h10"/>
<path stroke="#990075" d="M1240 455h10"/>
<path stroke="#99006a" d="M1250 455h10"/>
<path stroke="#990061" d="M1260 455h10"/>
<path stroke="#990058" d="M1270 455h10"/>
<path stroke="#990051" d="M1280 455h10"/>
<path stroke="#99004a" d="M1290 455h10"/>
<path stroke="#990045" d="M1300 455h10"/>
<path stroke="#99003f" d="M1310 455h10"/>
<path stroke="#99003a" d="M1320 455h10"/>
<path stroke="#990036" d="M1330 455h10"/>
<path stroke="#990032" d="M1340 455h10"/>
<path stroke="#99002e" d="M1350 455h10"/>
<path stroke="#99002b" d="M1360 455h10"/>
<path stroke="#990028" d="M1370 455h10"/>
<path stroke="#990025" d="M1380 455h10"/>
<path stroke="#002599" d="M1030 465h10"/>
<path stroke="#002399" d="M1040 465h10"/>
<path stroke="#002199" d="M1050 465h10"/>
<path stroke="#001f99" d="M1060 465h10"/>
<path stroke="#001d99" d="M1070 465h10"/>
<path stroke="#001b99" d="M1080 465h10"/>
<path stroke="#001899" d="M1090 465h10"/>
<path stroke="#001699" d="M1100 465h10"/>
<path stroke="#0a1399" d="M1110 465h10"/>
<path stroke="#151199" d="M1120 465h10"/>
<path stroke="#210e99" d="M1130 465h10"/>
<path stroke="#2d0b99" d="M1140 465h10"/>
<path stroke="#390899" d="M1150 465h10"/>
<path stroke="#460599" d="M1160 465h10"/>
<path stroke="#540299" d="M1170 465h10"/>
<path stroke="#620099" d="M1180 465h10"/>
<path stroke="#710099" d="M1190 465h10"/>
<path stroke="#800099" d="M1200 465h10"/>
<path stroke="#900099" d="M1210 465h10"/>
<path stroke="#990091" d="M1220 465h10"/>
<path stroke="#990083" d="M1230 465h10"/>
<path stroke="#990077" d="M1240 465h10"/>
<path stroke="#99006c" d="M1250 465h10"/>
<path stroke="#990063" d="M1260 465h10"/>
<path stroke="#99005a" d="M1270 465h10"/>
<path stroke="#990053" d="M1280 465h10"/>
<path stroke="#99004d" d="M1290 465h10"/>
<path stroke="#990047" d="M1300 465h10"/>
<path stroke="#990041" d="M1310 465h10"/>
<path stroke="#99003c" d="M1320 465h10"/>
<path stroke="#990038" d="M1330 465h10"/>
<path stroke="#990034" d="M1340 465h10"/>
<path stroke="#990030" d="M1350 465h10"/>
<path stroke="#001e99" d="M1030 475h10"/>
<path stroke="#001c99" d="M1040 475h10"/>
<path stroke="#001a99" d="M1050 475h10"/>
<path stroke="#001899" d="M1060 475h10"/>
<path stroke="#001699" d="M1070 475h10"/>
<path stroke="#001499" d="M1080 475h10"/>
<path stroke="#001199" d="M1090 475h10"/>
<path stroke="#030f99" d="M1100 475h10"/>
<path stroke="#0e0c99" d="M1110 475h10"/>
<path stroke="#190a99" d="M1120 475h10"/>
<path stroke="#240799" d="M1130 475h10"/>
<path stroke="#2f0499" d="M1140 475h10"/>
<path stroke="#3c0199" d="M1150 475h10"/>
<path stroke="#480099" d="M1160 475h10"/>
<path stroke="#550099" d="M1170 475h10"/>
<path stroke="#630099" d="M1180 475h10"/>
<path stroke="#710099" d="M1190 475h10"/>
<path stroke="#800099" d="M1200 475h10"/>
<path stroke="#900099" d="M1210 475h10"/>
<path stroke="#990092" d="M1220 475h10"/>
<path stroke="#990084" d="M1230 475h10"/>
<path stroke="#990078" d="M1240 475h10"/>
<path stroke="#99006e" d="M1250 475h10"/>
<path stroke="#990065" d="M1260 475h10"/>
<path stroke="#99005c" d="M1270 475h10"/>
<path stroke="#990055" d="M1280 475h10"/>
<path stroke="#99004f" d="M1290 475h10"/>
<path stroke="#990049" d="M1300 475h10"/>
<path stroke="#990043" d="M1310 475h10"/>
<path stroke="#99003e" d="M1320 475h10"/>
<path stroke="#001699" d="M1040 485h10"/>
<path stroke="#001499" d="M1050 485h10"/>
<path stroke="#001299" d="M1060 485h10"/>
<path stroke="#000f99" d="M1070 485h10"/>
<path stroke="#000d99" d="M1080 485h10"/>
<path stroke="#000b99" d="M1090 485h10"/>
<path stroke="#070899" d="M1100 485h10"/>
<path stroke="#110699" d="M1110 485h10"/>
<path stroke="#1b0399" d="M1120 485h10"/>
<path stroke="#260099" d="M1130 485h10"/>
<path stroke="#320099" d="M1140 485h10"/>
<path stroke="#3e0099" d="M1150 485h10"/>
<path stroke="#4a0099" d="M1160 485h10"/>
<path stroke="#570099" d="M1170 485h10"/>
<path stroke="#640099" d="M1180 485h10"/>
<path stroke="#720099" d="M1190 485h10"/>
<path stroke="#800099" d="M1200 485h10"/>
<path stroke="#8f0099" d="M1210 485h10"/>
<path stroke="#990094" d="M1220 485h10"/>
<path stroke="#990086" d="M1230 485h10"/>
<path stroke="#99007a" d="M1240 485h10"/>
<path stroke="#99006f" d="M1250 485h10"/>
<path stroke="#990066" d="M1260 485h10"/>
<path stroke="#99005e" d="M1270 485h10"/>
<path stroke="#990057" d="M1280 485h10"/>
<path stroke="#990050" d="M1290 485h10"/>
<path stroke="#001099" d="M1040 495h10"/>
<path stroke="#000e99" d="M1050 495h10"/>
<path stroke="#000c99" d="M1060 495h10"/>
<path stroke="#000999" d="M1070 495h10"/>
<path stroke="#000799" d="M1080 495h10"/>
<path stroke="#000499" d="M1090 495h10"/>
<path stroke="#0a0299" d="M1100 495h10"/>
<path stroke="#140099" d="M1110 495h10"/>
<path stroke="#1e0099" d="M1120 495h10"/>
<path stroke="#290099" d="M1130 495h10"/>
<path stroke="#340099" d="M1140 495h10"/>
<path stroke="#400099" d="M1150 495h10"/>
<path stroke="#4b0099" d="M1160 495h10"/>
<path stroke="#580099" d="M1170 495h10"/>
<path stroke="#650099" d="M1180 495h10"/>
<path stroke="#720099" d="M1190 495h10"/>
<path stroke="#800099" d="M1200 495h10"/>
<path stroke="#8e0099" d="M1210 495h10"/>
<path stroke="#990095" d="M1220 495h10"/>
<path stroke="#990087" d="M1230 495h10"/>
<path stroke="#99007b" d="M1240 495h10"/>
<path stroke="#990071" d="M1250 495h10"/>
<path stroke="#990068" d="M1260 495h10"/>
<path stroke="#990060" d="M1270 495h10"/>
<path stroke="#000899" d="M1050 505h10"/>
<path stroke="#000699" d="M1060 505h10"/>
<path stroke="#000399" d="M1070 505h10"/>
<path stroke="#000199" d="M1080 505h10"/>
<path stroke="#040099" d="M1090 505h10"/>
<path stroke="#0d0099" d="M1100 505h10"/>
<path stroke="#170099" d="M1110 505h10"/>
<path stroke="#210099" d="M1120 505h10"/>
<path stroke="#2b0099" d="M1130 505h10"/>
<path stroke="#360099" d="M1140 505h10"/>
<path stroke="#410099" d="M1150 505h10"/>
<path stroke="#4d0099" d="M1160 505h10"/>
<path stroke="#590099" d="M1170 505h10"/>
<path stroke="#650099" d="M1180 505h10"/>
<path stroke="#720099" d="M1190 505h10"/>
<path stroke="#800099" d="M1200 505h10"/>
<path stroke="#8e0099" d="M1210 505h10"/>
<path stroke="#990096" d="M1220 505h10"/>
<path stroke="#990088" d="M1230 505h10"/>
<path stroke="#99007d" d="M1240 505h10"/>
<path stroke="#000099" d="M1060 515h30"/>
<path stroke="#070099" d="M1090 515h10"/>
<path stroke="#100099" d="M1100 515h10"/>
<path stroke="#190099" d="M1110 515h10"/>
<path stroke="#230099" d="M1120 515h10"/>
<path stroke="#2e0099" d="M1130 515h10"/>
<path stroke="#380099" d="M1140 515h10"/>
<path stroke="#430099" d="M1150 515h10"/>
<path stroke="#4e0099" d="M1160 515h10"/>
<path stroke="#5a0099" d="M1170 515h10"/>
<path stroke="#660099" d="M1180 515h10"/>
<path stroke="#730099" d="M1190 515h10"/>
<path stroke="#800099" d="M1200 515h10"/>
<path stroke="#8d0099" d="M1210 515h10"/>
<path stroke="#000099" d="M1060 525h20"/>
<path stroke="#010099" d="M1080 525h10"/>
<path stroke="#0a0099" d="M1090 525h10"/>
<path stroke="#130099" d="M1100 525h10"/>
<path stroke="#1c0099" d="M1110 525h10"/>
<path stroke="#260099" d="M1120 525h10"/>
<path stroke="#300099" d="M1130 525h10"/>
<path stroke="#3a0099" d="M1140 525h10"/>
<path stroke="#450099" d="M1150 525h10"/>
<path stroke="#500099" d="M1160 525h10"/>
<path stroke="#5b0099" d="M1170 525h10"/>
<path stroke="#670099" d="M1180 525h10"/>
<path stroke="#000099" d="M1070 535h10"/>
<path stroke="#040099" d="M1080 535h10"/>
<path stroke="#0c0099" d="M1090 535h10"/>
<path stroke="#150099" d="M1100 535h10"/>
<path stroke="#1e0099" d="M1110 535h10"/>
<path stroke="#280099" d="M1120 535h10"/>
<path stroke="#320099" d="M1130 535h10"/>
<path stroke="#3c0099" d="M1140 535h10"/>
<path stroke="#460099" d="M1150 535h10"/>
<path stroke="#510099" d="M1160 535h10"/>
<path stroke="#0e0099" d="M1090 545h10"/>
<path stroke="#160099" d="M1100 545h10"/>
<path stroke="#1f0099" d="M1110 545h10"/>
<path stroke="#290099" d="M1120 545h10"/>
<path stroke="#320099" d="M1130 545h10"/>
</g></g>
<g clip-path="url(#ct)"><g filter="url(#bs)" stroke-width="6.6" fill="none">
<path stroke="#00ff00" d="M1198 179h12"/>
<path stroke="#00ff01" d="M1192 185h6"/>
<path stroke="#00ff00" d="M1198 185h6"/>
<path stroke="#03ff00" d="M1204 185h6"/>
<path stroke="#0dff00" d="M1210 185h6"/>
<path stroke="#16ff00" d="M1216 185h6"/>
<path stroke="#00ff05" d="M1192 191h6"/>
<path stroke="#00ff03" d="M1198 191h6"/>
<path stroke="#07ff00" d="M1204 191h6"/>
<path stroke="#10ff00" d="M1210 191h6"/>
<path stroke="#1aff00" d="M1216 191h6"/>
<path stroke="#24ff00" d="M1222 191h6"/>
<path stroke="#00ff0c" d="M1186 197h6"/>
<path stroke="#00ff09" d="M1192 197h6"/>
<path stroke="#01ff07" d="M1198 197h6"/>
<path stroke="#0aff05" d="M1204 197h6"/>
<path stroke="#14ff02" d="M1210 197h6"/>
<path stroke="#1eff00" d="M1216 197h6"/>
<path stroke="#28ff00" d="M1222 197h6"/>
<path stroke="#32ff00" d="M1228 197h6"/>
<path stroke="#3dff00" d="M1234 197h6"/>
<path stroke="#00ff10" d="M1186 203h6"/>
<path stroke="#00ff0e" d="M1192 203h6"/>
<path stroke="#04ff0b" d="M1198 203h6"/>
<path stroke="#0eff09" d="M1204 203h6"/>
<path stroke="#18ff06" d="M1210 203h6"/>
<path stroke="#22ff04" d="M1216 203h6"/>
<path stroke="#2cff01" d="M1222 203h6"/>
<path stroke="#37ff00" d="M1228 203h6"/>
<path stroke="#42ff00" d="M1234 203h6"/>
<path stroke="#4dff00" d="M1240 203h6"/>
<path stroke="#00ff15" d="M1186 209h6"/>
<path stroke="#00ff12" d="M1192 209h6"/>
<path stroke="#08ff10" d="M1198 209h6"/>
<path stroke="#12ff0d" d="M1204 209h6"/>
<path stroke="#1cff0b" d="M1210 209h6"/>
<path stroke="#27ff08" d="M1216 209h6"/>
<path stroke="#31ff05" d="M1222 209h6"/>
<path stroke="#3cff03" d="M1228 209h6"/>
<path stroke="#47ff00" d="M1234 209h6"/>
<path stroke="#53ff00" d="M1240 209h6"/>
<path stroke="#5eff00" d="M1246 209h6"/>
<path stroke="#6aff00" d="M1252 209h6"/>
<path stroke="#00ff1c" d="M1180 215h6"/>
<path stroke="#00ff19" d="M1186 215h6"/>
<path stroke="#01ff17" d="M1192 215h6"/>
<path stroke="#0cff15" d="M1198 215h6"/>
<path stroke="#16ff12" d="M1204 215h6"/>
<path stroke="#20ff0f" d="M1210 215h6"/>
<path stroke="#2bff0d" d="M1216 215h6"/>
<path stroke="#36ff0a" d="M1222 215h6"/>
<path stroke="#41ff07" d="M1228 215h6"/>
<path stroke="#4dff05" d="M1234 215h6"/>
<path stroke="#59ff02" d="M1240 215h6"/>
<path stroke="#65ff00" d="M1246 215h6"/>
<path stroke="#71ff00" d="M1252 215h6"/>
<path stroke="#7eff00" d="M1258 215h6"/>
<path stroke="#8bff00" d="M1264 215h6"/>
<path stroke="#00ff21" d="M1180 221h6"/>
<path stroke="#00ff1e" d="M1186 221h6"/>
<path stroke="#05ff1c" d="M1192 221h6"/>
<path stroke="#10ff1a" d="M1198 221h6"/>
<path stroke="#1aff17" d="M1204 221h6"/>
<path stroke="#25ff14" d="M1210 221h6"/>
<path stroke="#30ff12" d="M1216 221h6"/>
<path stroke="#3bff0f" d="M1222 221h6"/>
<path stroke="#47ff0c" d="M1228 221h6"/>
<path stroke="#53ff0a" d="M1234 221h6"/>
<path stroke="#5fff07" d="M1240 221h6"/>
<path stroke="#6cff04" d="M1246 221h6"/>
<path stroke="#79ff01" d="M1252 221h6"/>
<path stroke="#86ff00" d="M1258 221h6"/>
<path stroke="#93ff00" d="M1264 221h6"/>
<path stroke="#a1ff00" d="M1270 221h6"/>
<path stroke="#00ff26" d="M1180 227h6"/>
<path stroke="#00ff24" d="M1186 227h6"/>
<path stroke="#09ff21" d="M1192 227h6"/>
<path stroke="#14ff1f" d="M1198 227h6"/>
<path stroke="#1fff1c" d="M1204 227h6"/>
<path stroke="#2aff1a" d="M1210 227h6"/>
<path stroke="#35ff17" d="M1216 227h6"/>
<path stroke="#41ff14" d="M1222 227h6"/>
<path stroke="#4dff12" d="M1228 227h6"/>
<path stroke="#59ff0f" d="M1234 227h6"/>
<path stroke="#66ff0c" d="M1240 227h6"/>
<path stroke="#73ff09" d="M1246 227h6"/>
<path stroke="#80ff06" d="M1252 227h6"/>
<path stroke="#8eff03" d="M1258 227h6"/>
<path stroke="#9cff00" d="M1264 227h6"/>
<path stroke="#aaff00" d="M1270 227h6"/>
<path stroke="#b9ff00" d="M1276 227h6"/>
<path stroke="#c8ff00" d="M1282 227h6"/>
<path stroke="#00ff2e" d="M1174 233h6"/>
<path stroke="#00ff2c" d="M1180 233h6"/>
<path stroke="#02ff29" d="M1186 233h6"/>
<path stroke="#0dff27" d="M1192 233h6"/>
<path stroke="#18ff24" d="M1198 233h6"/>
<path stroke="#23ff22" d="M1204 233h6"/>
<path stroke="#2fff1f" d="M1210 233h6"/>
<path stroke="#3bff1d" d="M1216 233h6"/>
<path stroke="#47ff1a" d="M1222 233h6"/>
<path stroke="#53ff17" d="M1228 233h6"/>
<path stroke="#60ff14" d="M1234 233h6"/>
<path stroke="#6dff11" d="M1240 233h6"/>
<path stroke="#7bff0e" d="M1246 233h6"/>
<path stroke="#88ff0b" d="M1252 233h6"/>
<path stroke="#96ff08" d="M1258 233h6"/>
<path stroke="#a5ff05" d="M1264 233h6"/>
<path stroke="#b4ff01" d="M1270 233h6"/>
<path stroke="#c3ff00" d="M1276 233h6"/>
<path stroke="#d3ff00" d="M1282 233h6"/>
<path stroke="#e3ff00" d="M1288 233h6"/>
<path stroke="#00ff34" d="M1174 239h6"/>
<path stroke="#00ff31" d="M1180 239h6"/>
<path stroke="#06ff2f" d="M1186 239h6"/>
<path stroke="#11ff2d" d="M1192 239h6"/>
<path stroke="#1dff2a" d="M1198 239h6"/>
<path stroke="#28ff28" d="M1204 239h6"/>
<path stroke="#34ff25" d="M1210 239h6"/>
<path stroke="#41ff22" d="M1216 239h6"/>
<path stroke="#4dff20" d="M1222 239h6"/>
<path stroke="#5aff1d" d="M1228 239h6"/>
<path stroke="#67ff1a" d="M1234 239h6"/>
<path stroke="#75ff17" d="M1240 239h6"/>
<path stroke="#83ff14" d="M1246 239h6"/>
<path stroke="#91ff11" d="M1252 239h6"/>
<path stroke="#a0ff0e" d="M1258 239h6"/>
<path stroke="#afff0b" d="M1264 239h6"/>
<path stroke="#beff07" d="M1270 239h6"/>
<path stroke="#ceff04" d="M1276 239h6"/>
<path stroke="#dfff00" d="M1282 239h6"/>
<path stroke="#efff00" d="M1288 239h6"/>
<path stroke="#fffd00" d="M1294 239h6"/>
<path stroke="#ffed00" d="M1300 239h6"/>
<path stroke="#00ff3a" d="M1174 245h6"/>
<path stroke="#00ff38" d="M1180 245h6"/>
<path stroke="#0aff35" d="M1186 245h6"/>
<path stroke="#16ff33" d="M1192 245h6"/>
<path stroke="#22ff30" d="M1198 245h6"/>
<path stroke="#2eff2e" d="M1204 245h6"/>
<path stroke="#3aff2b" d="M1210 245h6"/>
<path stroke="#47ff29" d="M1216 245h6"/>
<path stroke="#54ff26" d="M1222 245h6"/>
<path stroke="#61ff23" d="M1228 245h6"/>
<path stroke="#6fff20" d="M1234 245h6"/>
<path stroke="#7dff1d" d="M1240 245h6"/>
<path stroke="#8bff1a" d="M1246 245h6"/>
<path stroke="#9aff17" d="M1252 245h6"/>
<path stroke="#a9ff14" d="M1258 245h6"/>
<path stroke="#b9ff11" d="M1264 245h6"/>
<path stroke="#c9ff0d" d="M1270 245h6"/>
<path stroke="#daff0a" d="M1276 245h6"/>
<path stroke="#ebff06" d="M1282 245h6"/>
<path stroke="#fdff02" d="M1288 245h6"/>
<path stroke="#fff000" d="M1294 245h6"/>
<path stroke="#ffe100" d="M1300 245h6"/>
<path stroke="#ffd300" d="M1306 245h6"/>
<path stroke="#ffc600" d="M1312 245h6"/>
<path stroke="#00ff43" d="M1168 251h6"/>
<path stroke="#00ff40" d="M1174 251h6"/>
<path stroke="#03ff3e" d="M1180 251h6"/>
<path stroke="#0fff3c" d="M1186 251h6"/>
<path stroke="#1bff39" d="M1192 251h6"/>
<path stroke="#27ff37" d="M1198 251h6"/>
<path stroke="#33ff34" d="M1204 251h6"/>
<path stroke="#40ff32" d="M1210 251h6"/>
<path stroke="#4dff2f" d="M1216 251h6"/>
<path stroke="#5bff2c" d="M1222 251h6"/>
<path stroke="#69ff2a" d="M1228 251h6"/>
<path stroke="#77ff27" d="M1234 251h6"/>
<path stroke="#86ff24" d="M1240 251h6"/>
<path stroke="#95ff21" d="M1246 251h6"/>
<path stroke="#a4ff1e" d="M1252 251h6"/>
<path stroke="#b4ff1a" d="M1258 251h6"/>
<path stroke="#c4ff17" d="M1264 251h6"/>
<path stroke="#d5ff14" d="M1270 251h6"/>
<path stroke="#e7ff10" d="M1276 251h6"/>
<path stroke="#f8ff0d" d="M1282 251h6"/>
<path stroke="#fff408" d="M1288 251h6"/>
<path stroke="#ffe304" d="M1294 251h6"/>
<path stroke="#ffd501" d="M1300 251h6"/>
<path stroke="#ffc800" d="M1306 251h6"/>
<path stroke="#ffbb00" d="M1312 251h6"/>
<path stroke="#ffb000" d="M1318 251h6"/>
<path stroke="#00ff49" d="M1168 257h6"/>
<path stroke="#00ff47" d="M1174 257h6"/>
<path stroke="#07ff45" d="M1180 257h6"/>
<path stroke="#13ff43" d="M1186 257h6"/>
<path stroke="#20ff40" d="M1192 257h6"/>
<path stroke="#2cff3e" d="M1198 257h6"/>
<path stroke="#39ff3b" d="M1204 257h6"/>
<path stroke="#47ff39" d="M1210 257h6"/>
<path stroke="#54ff36" d="M1216 257h6"/>
<path stroke="#62ff33" d="M1222 257h6"/>
<path stroke="#71ff31" d="M1228 257h6"/>
<path stroke="#7fff2e" d="M1234 257h6"/>
<path stroke="#8fff2b" d="M1240 257h6"/>
<path stroke="#9eff28" d="M1246 257h6"/>
<path stroke="#afff25" d="M1252 257h6"/>
<path stroke="#bfff21" d="M1258 257h6"/>
<path stroke="#d0ff1e" d="M1264 257h6"/>
<path stroke="#e2ff1b" d="M1270 257h6"/>
<path stroke="#f4ff17" d="M1276 257h6"/>
<path stroke="#fff713" d="M1282 257h6"/>
<path stroke="#ffe60e" d="M1288 257h6"/>
<path stroke="#ffd70a" d="M1294 257h6"/>
<path stroke="#ffc906" d="M1300 257h6"/>
<path stroke="#ffbd03" d="M1306 257h6"/>
<path stroke="#ffb100" d="M1312 257h6"/>
<path stroke="#ffa700" d="M1318 257h6"/>
<path stroke="#ff9d00" d="M1324 257h6"/>
<path stroke="#ff9500" d="M1330 257h6"/>
<path stroke="#00ff51" d="M1168 263h6"/>
<path stroke="#00ff4e" d="M1174 263h6"/>
<path stroke="#0cff4c" d="M1180 263h6"/>
<path stroke="#18ff4a" d="M1186 263h6"/>
<path stroke="#25ff47" d="M1192 263h6"/>
<path stroke="#32ff45" d="M1198 263h6"/>
<path stroke="#40ff43" d="M1204 263h6"/>
<path stroke="#4dff40" d="M1210 263h6"/>
<path stroke="#5cff3d" d="M1216 263h6"/>
<path stroke="#6aff3b" d="M1222 263h6"/>
<path stroke="#79ff38" d="M1228 263h6"/>
<path stroke="#89ff35" d="M1234 263h6"/>
<path stroke="#99ff32" d="M1240 263h6"/>
<path stroke="#a9ff2f" d="M1246 263h6"/>
<path stroke="#baff2c" d="M1252 263h6"/>
<path stroke="#cbff29" d="M1258 263h6"/>
<path stroke="#ddff25" d="M1264 263h6"/>
<path stroke="#f0ff22" d="M1270 263h6"/>
<path stroke="#fffb1e" d="M1276 263h6"/>
<path stroke="#ffea19" d="M1282 263h6"/>
<path stroke="#ffda14" d="M1288 263h6"/>
<path stroke="#ffcb0f" d="M1294 263h6"/>
<path stroke="#ffbe0b" d="M1300 263h6"/>
<path stroke="#ffb308" d="M1306 263h6"/>
<path stroke="#ffa804" d="M1312 263h6"/>
<path stroke="#ff9e01" d="M1318 263h6"/>
<path stroke="#ff9500" d="M1324 263h6"/>
<path stroke="#ff8c00" d="M1330 263h6"/>
<path stroke="#ff8500" d="M1336 263h6"/>
<path stroke="#00ff5a" d="M1162 269h6"/>
<path stroke="#00ff58" d="M1168 269h6"/>
<path stroke="#04ff56" d="M1174 269h6"/>
<path stroke="#11ff54" d="M1180 269h6"/>
<path stroke="#1eff52" d="M1186 269h6"/>
<path stroke="#2bff4f" d="M1192 269h6"/>
<path stroke="#38ff4d" d="M1198 269h6"/>
<path stroke="#46ff4a" d="M1204 269h6"/>
<path stroke="#55ff48" d="M1210 269h6"/>
<path stroke="#63ff45" d="M1216 269h6"/>
<path stroke="#73ff43" d="M1222 269h6"/>
<path stroke="#82ff40" d="M1228 269h6"/>
<path stroke="#92ff3d" d="M1234 269h6"/>
<path stroke="#a3ff3a" d="M1240 269h6"/>
<path stroke="#b4ff37" d="M1246 269h6"/>
<path stroke="#c6ff34" d="M1252 269h6"/>
<path stroke="#d8ff31" d="M1258 269h6"/>
<path stroke="#ebff2d" d="M1264 269h6"/>
<path stroke="#feff2a" d="M1270 269h6"/>
<path stroke="#ffed24" d="M1276 269h6"/>
<path stroke="#ffdc1e" d="M1282 269h6"/>
<path stroke="#ffcd19" d="M1288 269h6"/>
<path stroke="#ffc014" d="M1294 269h6"/>
<path stroke="#ffb410" d="M1300 269h6"/>
<path stroke="#ffa90d" d="M1306 269h6"/>
<path stroke="#ff9e09" d="M1312 269h6"/>
<path stroke="#ff9506" d="M1318 269h6"/>
<path stroke="#ff8c03" d="M1324 269h6"/>
<path stroke="#ff8400" d="M1330 269h6"/>
<path stroke="#ff7d00" d="M1336 269h6"/>
<path stroke="#ff7600" d="M1342 269h6"/>
<path stroke="#ff7000" d="M1348 269h6"/>
<path stroke="#00ff62" d="M1162 275h6"/>
<path stroke="#00ff60" d="M1168 275h6"/>
<path stroke="#09ff5e" d="M1174 275h6"/>
<path stroke="#16ff5c" d="M1180 275h6"/>
<path stroke="#23ff5a" d="M1186 275h6"/>
<path stroke="#31ff58" d="M1192 275h6"/>
<path stroke="#3fff55" d="M1198 275h6"/>
<path stroke="#4eff53" d="M1204 275h6"/>
<path stroke="#5cff50" d="M1210 275h6"/>
<path stroke="#6cff4e" d="M1216 275h6"/>
<path stroke="#7cff4b" d="M1222 275h6"/>
<path stroke="#8cff48" d="M1228 275h6"/>
<path stroke="#9dff46" d="M1234 275h6"/>
<path stroke="#aeff43" d="M1240 275h6"/>
<path stroke="#c0ff40" d="M1246 275h6"/>
<path stroke="#d3ff3d" d="M1252 275h6"/>
<path stroke="#e6ff39" d="M1258 275h6"/>
<path stroke="#faff36" d="M1264 275h6"/>
<path stroke="#fff130" d="M1270 275h6"/>
<path stroke="#ffdf29" d="M1276 275h6"/>
<path stroke="#ffd023" d="M1282 275h6"/>
<path stroke="#ffc21e" d="M1288 275h6"/>
<path stroke="#ffb519" d="M1294 275h6"/>
<path stroke="#ffa915" d="M1300 275h6"/>
<path stroke="#ff9f11" d="M1306 275h6"/>
<path stroke="#ff950e" d="M1312 275h6"/>
<path stroke="#ff8c0a" d="M1318 275h6"/>
<path stroke="#ff8407" d="M1324 275h6"/>
<path stroke="#ff7d04" d="M1330 275h6"/>
<path stroke="#ff7602" d="M1336 275h6"/>
<path stroke="#ff6f00" d="M1342 275h6"/>
<path stroke="#ff6900" d="M1348 275h6"/>
<path stroke="#ff6300" d="M1354 275h6"/>
<path stroke="#ff5e00" d="M1360 275h6"/>
<path stroke="#00ff6b" d="M1162 281h6"/>
<path stroke="#01ff69" d="M1168 281h6"/>
<path stroke="#0eff67" d="M1174 281h6"/>
<path stroke="#1bff65" d="M1180 281h6"/>
<path stroke="#29ff63" d="M1186 281h6"/>
<path stroke="#37ff60" d="M1192 281h6"/>
<path stroke="#46ff5e" d="M1198 281h6"/>
<path stroke="#55ff5c" d="M1204 281h6"/>
<path stroke="#65ff59" d="M1210 281h6"/>
<path stroke="#75ff57" d="M1216 281h6"/>
<path stroke="#85ff54" d="M1222 281h6"/>
<path stroke="#97ff52" d="M1228 281h6"/>
<path stroke="#a8ff4f" d="M1234 281h6"/>
<path stroke="#baff4c" d="M1240 281h6"/>
<path stroke="#cdff49" d="M1246 281h6"/>
<path stroke="#e1ff46" d="M1252 281h6"/>
<path stroke="#f5ff43" d="M1258 281h6"/>
<path stroke="#fff53d" d="M1264 281h6"/>
<path stroke="#ffe235" d="M1270 281h6"/>
<path stroke="#ffd22f" d="M1276 281h6"/>
<path stroke="#ffc329" d="M1282 281h6"/>
<path stroke="#ffb623" d="M1288 281h6"/>
<path stroke="#ffaa1e" d="M1294 281h6"/>
<path stroke="#ff9f1a" d="M1300 281h6"/>
<path stroke="#ff9516" d="M1306 281h6"/>
<path stroke="#ff8c12" d="M1312 281h6"/>
<path stroke="#ff840e" d="M1318 281h6"/>
<path stroke="#ff7c0b" d="M1324 281h6"/>
<path stroke="#ff7508" d="M1330 281h6"/>
<path stroke="#ff6f06" d="M1336 281h6"/>
<path stroke="#ff6803" d="M1342 281h6"/>
<path stroke="#ff6301" d="M1348 281h6"/>
<path stroke="#ff5d00" d="M1354 281h6"/>
<path stroke="#ff5800" d="M1360 281h6"/>
<path stroke="#ff5300" d="M1366 281h6"/>
<path stroke="#00ff76" d="M1156 287h6"/>
<path stroke="#00ff74" d="M1162 287h6"/>
<path stroke="#05ff72" d="M1168 287h6"/>
<path stroke="#13ff70" d="M1174 287h6"/>
<path stroke="#21ff6e" d="M1180 287h6"/>
<path stroke="#2fff6c" d="M1186 287h6"/>
<path stroke="#3eff6a" d="M1192 287h6"/>
<path stroke="#4eff68" d="M1198 287h6"/>
<path stroke="#5dff65" d="M1204 287h6"/>
<path stroke="#6eff63" d="M1210 287h6"/>
<path stroke="#7fff60" d="M1216 287h6"/>
<path stroke="#90ff5e" d="M1222 287h6"/>
<path stroke="#a2ff5b" d="M1228 287h6"/>
<path stroke="#b4ff59" d="M1234 287h6"/>
<path stroke="#c8ff56" d="M1240 287h6"/>
<path stroke="#dbff53" d="M1246 287h6"/>
<path stroke="#f0ff50" d="M1252 287h6"/>
<path stroke="#fff94b" d="M1258 287h6"/>
<path stroke="#ffe642" d="M1264 287h6"/>
<path stroke="#ffd43b" d="M1270 287h6"/>
<path stroke="#ffc534" d="M1276 287h6"/>
<path stroke="#ffb72d" d="M1282 287h6"/>
<path stroke="#ffab28" d="M1288 287h6"/>
<path stroke="#ffa023" d="M1294 287h6"/>
<path stroke="#ff961e" d="M1300 287h6"/>
<path stroke="#ff8c1a" d="M1306 287h6"/>
<path stroke="#ff8416" d="M1312 287h6"/>
<path stroke="#ff7c13" d="M1318 287h6"/>
<path stroke="#ff750f" d="M1324 287h6"/>
<path stroke="#ff6e0c" d="M1330 287h6"/>
<path stroke="#ff6809" d="M1336 287h6"/>
<path stroke="#ff6207" d="M1342 287h6"/>
<path stroke="#ff5c04" d="M1348 287h6"/>
<path stroke="#ff5702" d="M1354 287h6"/>
<path stroke="#ff5200" d="M1360 287h6"/>
<path stroke="#ff4e00" d="M1366 287h6"/>
<path stroke="#ff4900" d="M1372 287h6"/>
<path stroke="#ff4500" d="M1378 287h6"/>
<path stroke="#00ff80" d="M1156 293h6"/>
<path stroke="#00ff7e" d="M1162 293h6"/>
<path stroke="#0bff7c" d="M1168 293h6"/>
<path stroke="#19ff7a" d="M1174 293h6"/>
<path stroke="#27ff78" d="M1180 293h6"/>
<path stroke="#36ff76" d="M1186 293h6"/>
<path stroke="#46ff74" d="M1192 293h6"/>
<path stroke="#56ff72" d="M1198 293h6"/>
<path stroke="#66ff70" d="M1204 293h6"/>
<path stroke="#77ff6d" d="M1210 293h6"/>
<path stroke="#89ff6b" d="M1216 293h6"/>
<path stroke="#9bff68" d="M1222 293h6"/>
<path stroke="#aeff66" d="M1228 293h6"/>
<path stroke="#c1ff63" d="M1234 293h6"/>
<path stroke="#d6ff61" d="M1240 293h6"/>
<path stroke="#ebff5e" d="M1246 293h6"/>
<path stroke="#fffe5a" d="M1252 293h6"/>
<path stroke="#ffe950" d="M1258 293h6"/>
<path stroke="#ffd747" d="M1264 293h6"/>
<path stroke="#ffc740" d="M1270 293h6"/>
<path stroke="#ffb939" d="M1276 293h6"/>
<path stroke="#ffac32" d="M1282 293h6"/>
<path stroke="#ffa02d" d="M1288 293h6"/>
<path stroke="#ff9627" d="M1294 293h6"/>
<path stroke="#ff8c23" d="M1300 293h6"/>
<path stroke="#ff841e" d="M1306 293h6"/>
<path stroke="#ff7b1a" d="M1312 293h6"/>
<path stroke="#ff7417" d="M1318 293h6"/>
<path stroke="#ff6d13" d="M1324 293h6"/>
<path stroke="#ff6710" d="M1330 293h6"/>
<path stroke="#ff610d" d="M1336 293h6"/>
<path stroke="#ff5b0a" d="M1342 293h6"/>
<path stroke="#ff5608" d="M1348 293h6"/>
<path stroke="#ff5105" d="M1354 293h6"/>
<path stroke="#ff4c03" d="M1360 293h6"/>
<path stroke="#ff4801" d="M1366 293h6"/>
<path stroke="#ff4400" d="M1372 293h6"/>
<path stroke="#ff4000" d="M1378 293h6"/>
<path stroke="#ff3d00" d="M1384 293h6"/>
<path stroke="#ff3900" d="M1390 293h6"/>
<path stroke="#00ff8c" d="M1150 299h6"/>
<path stroke="#00ff8a" d="M1156 299h6"/>
<path stroke="#02ff88" d="M1162 299h6"/>
<path stroke="#10ff87" d="M1168 299h6"/>
<path stroke="#1fff85" d="M1174 299h6"/>
<path stroke="#2eff83" d="M1180 299h6"/>
<path stroke="#3eff81" d="M1186 299h6"/>
<path stroke="#4eff7f" d="M1192 299h6"/>
<path stroke="#5fff7d" d="M1198 299h6"/>
<path stroke="#70ff7b" d="M1204 299h6"/>
<path stroke="#82ff79" d="M1210 299h6"/>
<path stroke="#94ff76" d="M1216 299h6"/>
<path stroke="#a7ff74" d="M1222 299h6"/>
<path stroke="#bbff71" d="M1228 299h6"/>
<path stroke="#d0ff6f" d="M1234 299h6"/>
<path stroke="#e5ff6c" d="M1240 299h6"/>
<path stroke="#fbff6a" d="M1246 299h6"/>
<path stroke="#ffed60" d="M1252 299h6"/>
<path stroke="#ffda55" d="M1258 299h6"/>
<path stroke="#ffc94c" d="M1264 299h6"/>
<path stroke="#ffbb44" d="M1270 299h6"/>
<path stroke="#ffad3d" d="M1276 299h6"/>
<path stroke="#ffa137" d="M1282 299h6"/>
<path stroke="#ff9631" d="M1288 299h6"/>
<path stroke="#ff8c2c" d="M1294 299h6"/>
<path stroke="#ff8327" d="M1300 299h6"/>
<path stroke="#ff7b22" d="M1306 299h6"/>
<path stroke="#ff731e" d="M1312 299h6"/>
<path stroke="#ff6c1b" d="M1318 299h6"/>
<path stroke="#ff6617" d="M1324 299h6"/>
<path stroke="#ff6014" d="M1330 299h6"/>
<path stroke="#ff5a11" d="M1336 299h6"/>
<path stroke="#ff550e" d="M1342 299h6"/>
<path stroke="#ff500b" d="M1348 299h6"/>
<path stroke="#ff4b09" d="M1354 299h6"/>
<path stroke="#ff4706" d="M1360 299h6"/>
<path stroke="#ff4304" d="M1366 299h6"/>
<path stroke="#ff3f02" d="M1372 299h6"/>
<path stroke="#ff3b00" d="M1378 299h6"/>
<path stroke="#ff3800" d="M1384 299h6"/>
<path stroke="#ff3400" d="M1390 299h6"/>
<path stroke="#ff3100" d="M1396 299h6"/>
<path stroke="#00ff97" d="M1150 305h6"/>
<path stroke="#00ff95" d="M1156 305h6"/>
<path stroke="#07ff93" d="M1162 305h6"/>
<path stroke="#16ff92" d="M1168 305h6"/>
<path stroke="#25ff90" d="M1174 305h6"/>
<path stroke="#35ff8e" d="M1180 305h6"/>
<path stroke="#45ff8d" d="M1186 305h6"/>
<path stroke="#56ff8b" d="M1192 305h6"/>
<path stroke="#68ff89" d="M1198 305h6"/>
<path stroke="#7aff87" d="M1204 305h6"/>
<path stroke="#8dff85" d="M1210 305h6"/>
<path stroke="#a0ff82" d="M1216 305h6"/>
<path stroke="#b5ff80" d="M1222 305h6"/>
<path stroke="#caff7e" d="M1228 305h6"/>
<path stroke="#dfff7c" d="M1234 305h6"/>
<path stroke="#f6ff79" d="M1240 305h6"/>
<path stroke="#fff170" d="M1246 305h6"/>
<path stroke="#ffdd64" d="M1252 305h6"/>
<path stroke="#ffcc5a" d="M1258 305h6"/>
<path stroke="#ffbc51" d="M1264 305h6"/>
<path stroke="#ffae49" d="M1270 305h6"/>
<path stroke="#ffa242" d="M1276 305h6"/>
<path stroke="#ff963b" d="M1282 305h6"/>
<path stroke="#ff8c35" d="M1288 305h6"/>
<path stroke="#ff8330" d="M1294 305h6"/>
<path stroke="#ff7a2b" d="M1300 305h6"/>
<path stroke="#ff7326" d="M1306 305h6"/>
<path stroke="#ff6b22" d="M1312 305h6"/>
<path stroke="#ff651e" d="M1318 305h6"/>
<path stroke="#ff5f1b" d="M1324 305h6"/>
<path stroke="#ff5917" d="M1330 305h6"/>
<path stroke="#ff5314" d="M1336 305h6"/>
<path stroke="#ff4e11" d="M1342 305h6"/>
<path stroke="#ff4a0f" d="M1348 305h6"/>
<path stroke="#ff450c" d="M1354 305h6"/>
<path stroke="#ff410a" d="M1360 305h6"/>
<path stroke="#ff3d07" d="M1366 305h6"/>
<path stroke="#ff3a05" d="M1372 305h6"/>
<path stroke="#ff3603" d="M1378 305h6"/>
<path stroke="#ff3301" d="M1384 305h6"/>
<path stroke="#ff3000" d="M1390 305h6"/>
<path stroke="#ff2d00" d="M1396 305h6"/>
<path stroke="#ff2a00" d="M1402 305h6"/>
<path stroke="#ff2700" d="M1408 305h6"/>
<path stroke="#00ffa2" d="M1150 311h6"/>
<path stroke="#00ffa1" d="M1156 311h6"/>
<path stroke="#0dff9f" d="M1162 311h6"/>
<path stroke="#1cff9e" d="M1168 311h6"/>
<path stroke="#2cff9c" d="M1174 311h6"/>
<path stroke="#3dff9b" d="M1180 311h6"/>
<path stroke="#4eff99" d="M1186 311h6"/>
<path stroke="#60ff97" d="M1192 311h6"/>
<path stroke="#72ff96" d="M1198 311h6"/>
<path stroke="#85ff94" d="M1204 311h6"/>
<path stroke="#99ff92" d="M1210 311h6"/>
<path stroke="#aeff90" d="M1216 311h6"/>
<path stroke="#c3ff8e" d="M1222 311h6"/>
<path stroke="#d9ff8c" d="M1228 311h6"/>
<path stroke="#f0ff89" d="M1234 311h6"/>
<path stroke="#fff682" d="M1240 311h6"/>
<path stroke="#ffe175" d="M1246 311h6"/>
<path stroke="#ffce69" d="M1252 311h6"/>
<path stroke="#ffbe5f" d="M1258 311h6"/>
<path stroke="#ffaf56" d="M1264 311h6"/>
<path stroke="#ffa24e" d="M1270 311h6"/>
<path stroke="#ff9746" d="M1276 311h6"/>
<path stroke="#ff8c40" d="M1282 311h6"/>
<path stroke="#ff8339" d="M1288 311h6"/>
<path stroke="#ff7a34" d="M1294 311h6"/>
<path stroke="#ff722f" d="M1300 311h6"/>
<path stroke="#ff6b2a" d="M1306 311h6"/>
<path stroke="#ff6426" d="M1312 311h6"/>
<path stroke="#ff5d22" d="M1318 311h6"/>
<path stroke="#ff581e" d="M1324 311h6"/>
<path stroke="#ff521b" d="M1330 311h6"/>
<path stroke="#ff4d18" d="M1336 311h6"/>
<path stroke="#ff4815" d="M1342 311h6"/>
<path stroke="#ff4412" d="M1348 311h6"/>
<path stroke="#ff400f" d="M1354 311h6"/>
<path stroke="#ff3c0d" d="M1360 311h6"/>
<path stroke="#ff380b" d="M1366 311h6"/>
<path stroke="#ff3508" d="M1372 311h6"/>
<path stroke="#ff3106" d="M1378 311h6"/>
<path stroke="#ff2e04" d="M1384 311h6"/>
<path stroke="#ff2b02" d="M1390 311h6"/>
<path stroke="#ff2801" d="M1396 311h6"/>
<path stroke="#ff2600" d="M1402 311h6"/>
<path stroke="#ff2300" d="M1408 311h6"/>
<path stroke="#ff2100" d="M1414 311h6"/>
<path stroke="#00ffb0" d="M1144 317h6"/>
<path stroke="#00ffaf" d="M1150 317h6"/>
<path stroke="#03ffae" d="M1156 317h6"/>
<path stroke="#13ffac" d="M1162 317h6"/>
<path stroke="#23ffab" d="M1168 317h6"/>
<path stroke="#34ffaa" d="M1174 317h6"/>
<path stroke="#45ffa8" d="M1180 317h6"/>
<path stroke="#57ffa7" d="M1186 317h6"/>
<path stroke="#6affa5" d="M1192 317h6"/>
<path stroke="#7dffa4" d="M1198 317h6"/>
<path stroke="#91ffa2" d="M1204 317h6"/>
<path stroke="#a6ffa0" d="M1210 317h6"/>
<path stroke="#bcff9e" d="M1216 317h6"/>
<path stroke="#d3ff9c" d="M1222 317h6"/>
<path stroke="#eaff9a" d="M1228 317h6"/>
<path stroke="#fffb96" d="M1234 317h6"/>
<path stroke="#ffe587" d="M1240 317h6"/>
<path stroke="#ffd179" d="M1246 317h6"/>
<path stroke="#ffc06e" d="M1252 317h6"/>
<path stroke="#ffb163" d="M1258 317h6"/>
<path stroke="#ffa35a" d="M1264 317h6"/>
<path stroke="#ff9752" d="M1270 317h6"/>
<path stroke="#ff8c4a" d="M1276 317h6"/>
<path stroke="#ff8244" d="M1282 317h6"/>
<path stroke="#ff793e" d="M1288 317h6"/>
<path stroke="#ff7138" d="M1294 317h6"/>
<path stroke="#ff6a33" d="M1300 317h6"/>
<path stroke="#ff632e" d="M1306 317h6"/>
<path stroke="#ff5c2a" d="M1312 317h6"/>
<path stroke="#ff5626" d="M1318 317h6"/>
<path stroke="#ff5122" d="M1324 317h6"/>
<path stroke="#ff4c1e" d="M1330 317h6"/>
<path stroke="#ff471b" d="M1336 317h6"/>
<path stroke="#ff4218" d="M1342 317h6"/>
<path stroke="#ff3e15" d="M1348 317h6"/>
<path stroke="#ff3a12" d="M1354 317h6"/>
<path stroke="#ff3710" d="M1360 317h6"/>
<path stroke="#ff330e" d="M1366 317h6"/>
<path stroke="#ff300b" d="M1372 317h6"/>
<path stroke="#ff2d09" d="M1378 317h6"/>
<path stroke="#ff2a07" d="M1384 317h6"/>
<path stroke="#ff2705" d="M1390 317h6"/>
<path stroke="#ff2403" d="M1396 317h6"/>
<path stroke="#ff2202" d="M1402 317h6"/>
<path stroke="#ff1f00" d="M1408 317h6"/>
<path stroke="#ff1d00" d="M1414 317h6"/>
<path stroke="#ff1b00" d="M1420 317h6"/>
<path stroke="#ff1800" d="M1426 317h6"/>
<path stroke="#00ffbe" d="M1144 323h6"/>
<path stroke="#00ffbd" d="M1150 323h6"/>
<path stroke="#09ffbc" d="M1156 323h6"/>
<path stroke="#19ffba" d="M1162 323h6"/>
<path stroke="#2affb9" d="M1168 323h6"/>
<path stroke="#3cffb8" d="M1174 323h6"/>
<path stroke="#4effb7" d="M1180 323h6"/>
<path stroke="#61ffb5" d="M1186 323h6"/>
<path stroke="#75ffb4" d="M1192 323h6"/>
<path stroke="#89ffb3" d="M1198 323h6"/>
<path stroke="#9fffb1" d="M1204 323h6"/>
<path stroke="#b5ffb0" d="M1210 323h6"/>
<path stroke="#ccffae" d="M1216 323h6"/>
<path stroke="#e4ffad" d="M1222 323h6"/>
<path stroke="#fdffab" d="M1228 323h6"/>
<path stroke="#ffe99a" d="M1234 323h6"/>
<path stroke="#ffd48b" d="M1240 323h6"/>
<path stroke="#ffc27e" d="M1246 323h6"/>
<path stroke="#ffb272" d="M1252 323h6"/>
<path stroke="#ffa468" d="M1258 323h6"/>
<path stroke="#ff975e" d="M1264 323h6"/>
<path stroke="#ff8c56" d="M1270 323h6"/>
<path stroke="#ff824e" d="M1276 323h6"/>
<path stroke="#ff7948" d="M1282 323h6"/>
<path stroke="#ff7041" d="M1288 323h6"/>
<path stroke="#ff693c" d="M1294 323h6"/>
<path stroke="#ff6237" d="M1300 323h6"/>
<path stroke="#ff5b32" d="M1306 323h6"/>
<path stroke="#ff552d" d="M1312 323h6"/>
<path stroke="#ff4f29" d="M1318 323h6"/>
<path stroke="#ff4a25" d="M1324 323h6"/>
<path stroke="#ff4522" d="M1330 323h6"/>
<path stroke="#ff411e" d="M1336 323h6"/>
<path stroke="#ff3d1b" d="M1342 323h6"/>
<path stroke="#ff3918" d="M1348 323h6"/>
<path stroke="#ff3516" d="M1354 323h6"/>
<path stroke="#ff3113" d="M1360 323h6"/>
<path stroke="#ff2e11" d="M1366 323h6"/>
<path stroke="#ff2b0e" d="M1372 323h6"/>
<path stroke="#ff280c" d="M1378 323h6"/>
<path stroke="#ff250a" d="M1384 323h6"/>
<path stroke="#ff2208" d="M1390 323h6"/>
<path stroke="#ff2006" d="M1396 323h6"/>
<path stroke="#ff1d04" d="M1402 323h6"/>
<path stroke="#ff1b03" d="M1408 323h6"/>
<path stroke="#ff1901" d="M1414 323h6"/>
<path stroke="#ff1700" d="M1420 323h6"/>
<path stroke="#ff1500" d="M1426 323h6"/>
<path stroke="#ff1300" d="M1432 323h6"/>
<path stroke="#ff1100" d="M1438 323h6"/>
<path stroke="#00ffcc" d="M1144 329h6"/>
<path stroke="#00ffcb" d="M1150 329h6"/>
<path stroke="#0fffca" d="M1156 329h6"/>
<path stroke="#20ffca" d="M1162 329h6"/>
<path stroke="#32ffc9" d="M1168 329h6"/>
<path stroke="#45ffc8" d="M1174 329h6"/>
<path stroke="#58ffc7" d="M1180 329h6"/>
<path stroke="#6cffc6" d="M1186 329h6"/>
<path stroke="#81ffc4" d="M1192 329h6"/>
<path stroke="#97ffc3" d="M1198 329h6"/>
<path stroke="#adffc2" d="M1204 329h6"/>
<path stroke="#c5ffc1" d="M1210 329h6"/>
<path stroke="#ddffc0" d="M1216 329h6"/>
<path stroke="#f7ffbe" d="M1222 329h6"/>
<path stroke="#ffedb0" d="M1228 329h6"/>
<path stroke="#ffd79e" d="M1234 329h6"/>
<path stroke="#ffc48f" d="M1240 329h6"/>
<path stroke="#ffb482" d="M1246 329h6"/>
<path stroke="#ffa576" d="M1252 329h6"/>
<path stroke="#ff986c" d="M1258 329h6"/>
<path stroke="#ff8c62" d="M1264 329h6"/>
<path stroke="#ff825a" d="M1270 329h6"/>
<path stroke="#ff7852" d="M1276 329h6"/>
<path stroke="#ff6f4b" d="M1282 329h6"/>
<path stroke="#ff6845" d="M1288 329h6"/>
<path stroke="#ff603f" d="M1294 329h6"/>
<path stroke="#ff5a3a" d="M1300 329h6"/>
<path stroke="#ff5435" d="M1306 329h6"/>
<path stroke="#ff4e31" d="M1312 329h6"/>
<path stroke="#ff492d" d="M1318 329h6"/>
<path stroke="#ff4429" d="M1324 329h6"/>
<path stroke="#ff3f25" d="M1330 329h6"/>
<path stroke="#ff3b22" d="M1336 329h6"/>
<path stroke="#ff371e" d="M1342 329h6"/>
<path stroke="#ff331b" d="M1348 329h6"/>
<path stroke="#ff3019" d="M1354 329h6"/>
<path stroke="#ff2c16" d="M1360 329h6"/>
<path stroke="#ff2913" d="M1366 329h6"/>
<path stroke="#ff2611" d="M1372 329h6"/>
<path stroke="#ff230f" d="M1378 329h6"/>
<path stroke="#ff210d" d="M1384 329h6"/>
<path stroke="#ff1e0b" d="M1390 329h6"/>
<path stroke="#ff1c09" d="M1396 329h6"/>
<path stroke="#ff1907" d="M1402 329h6"/>
<path stroke="#ff1705" d="M1408 329h6"/>
<path stroke="#ff1503" d="M1414 329h6"/>
<path stroke="#ff1302" d="M1420 329h6"/>
<path stroke="#ff1100" d="M1426 329h6"/>
<path stroke="#ff0f00" d="M1432 329h6"/>
<path stroke="#ff0e00" d="M1438 329h6"/>
<path stroke="#ff0c00" d="M1444 329h6"/>
<path stroke="#00ffdc" d="M1138 335h12"/>
<path stroke="#04ffdb" d="M1150 335h6"/>
<path stroke="#16ffdb" d="M1156 335h6"/>
<path stroke="#28ffda" d="M1162 335h6"/>
<path stroke="#3bffd9" d="M1168 335h6"/>
<path stroke="#4effd9" d="M1174 335h6"/>
<path stroke="#63ffd8" d="M1180 335h6"/>
<path stroke="#78ffd7" d="M1186 335h6"/>
<path stroke="#8effd6" d="M1192 335h6"/>
<path stroke="#a5ffd6" d="M1198 335h6"/>
<path stroke="#bdffd5" d="M1204 335h6"/>
<path stroke="#d6ffd4" d="M1210 335h6"/>
<path stroke="#f1ffd3" d="M1216 335h6"/>
<path stroke="#fff3c8" d="M1222 335h6"/>
<path stroke="#ffdbb3" d="M1228 335h6"/>
<path stroke="#ffc7a2" d="M1234 335h6"/>
<path stroke="#ffb593" d="M1240 335h6"/>
<path stroke="#ffa686" d="M1246 335h6"/>
<path stroke="#ff987a" d="M1252 335h6"/>
<path stroke="#ff8c70" d="M1258 335h6"/>
<path stroke="#ff8166" d="M1264 335h6"/>
<path stroke="#ff775e" d="M1270 335h6"/>
<path stroke="#ff6f56" d="M1276 335h6"/>
<path stroke="#ff674f" d="M1282 335h6"/>
<path stroke="#ff5f49" d="M1288 335h6"/>
<path stroke="#ff5843" d="M1294 335h6"/>
<path stroke="#ff523e" d="M1300 335h6"/>
<path stroke="#ff4c39" d="M1306 335h6"/>
<path stroke="#ff4734" d="M1312 335h6"/>
<path stroke="#ff4230" d="M1318 335h6"/>
<path stroke="#ff3d2c" d="M1324 335h6"/>
<path stroke="#ff3928" d="M1330 335h6"/>
<path stroke="#ff3525" d="M1336 335h6"/>
<path stroke="#ff3121" d="M1342 335h6"/>
<path stroke="#ff2e1e" d="M1348 335h6"/>
<path stroke="#ff2a1c" d="M1354 335h6"/>
<path stroke="#ff2719" d="M1360 335h6"/>
<path stroke="#ff2416" d="M1366 335h6"/>
<path stroke="#ff2114" d="M1372 335h6"/>
<path stroke="#ff1f12" d="M1378 335h6"/>
<path stroke="#ff1c0f" d="M1384 335h6"/>
<path stroke="#ff1a0d" d="M1390 335h6"/>
<path stroke="#ff180b" d="M1396 335h6"/>
<path stroke="#ff1509" d="M1402 335h6"/>
<path stroke="#ff1308" d="M1408 335h6"/>
<path stroke="#ff1106" d="M1414 335h6"/>
<path stroke="#ff0f04" d="M1420 335h6"/>
<path stroke="#ff0e03" d="M1426 335h6"/>
<path stroke="#ff0c01" d="M1432 335h6"/>
<path stroke="#ff0a00" d="M1438 335h6"/>
<path stroke="#ff0900" d="M1444 335h6"/>
<path stroke="#ff0700" d="M1450 335h6"/>
<path stroke="#ff0500" d="M1456 335h6"/>
<path stroke="#00ffed" d="M1138 341h12"/>
<path stroke="#0bffed" d="M1150 341h6"/>
<path stroke="#1dffec" d="M1156 341h6"/>
<path stroke="#30ffec" d="M1162 341h6"/>
<path stroke="#44ffec" d="M1168 341h6"/>
<path stroke="#59ffeb" d="M1174 341h6"/>
<path stroke="#6fffeb" d="M1180 341h6"/>
<path stroke="#85ffeb" d="M1186 341h6"/>
<path stroke="#9dffea" d="M1192 341h6"/>
<path stroke="#b5ffea" d="M1198 341h6"/>
<path stroke="#cfffe9" d="M1204 341h6"/>
<path stroke="#eaffe9" d="M1210 341h6"/>
<path stroke="#fff8e2" d="M1216 341h6"/>
<path stroke="#ffdfcb" d="M1222 341h6"/>
<path stroke="#ffcab7" d="M1228 341h6"/>
<path stroke="#ffb7a6" d="M1234 341h6"/>
<path stroke="#ffa797" d="M1240 341h6"/>
<path stroke="#ff9989" d="M1246 341h6"/>
<path stroke="#ff8c7e" d="M1252 341h6"/>
<path stroke="#ff8173" d="M1258 341h6"/>
<path stroke="#ff776a" d="M1264 341h6"/>
<path stroke="#ff6e62" d="M1270 341h6"/>
<path stroke="#ff655a" d="M1276 341h6"/>
<path stroke="#ff5e53" d="M1282 341h6"/>
<path stroke="#ff574c" d="M1288 341h6"/>
<path stroke="#ff5147" d="M1294 341h6"/>
<path stroke="#ff4b41" d="M1300 341h6"/>
<path stroke="#ff453c" d="M1306 341h6"/>
<path stroke="#ff4037" d="M1312 341h6"/>
<path stroke="#ff3c33" d="M1318 341h6"/>
<path stroke="#ff372f" d="M1324 341h6"/>
<path stroke="#ff332b" d="M1330 341h6"/>
<path stroke="#ff2f28" d="M1336 341h6"/>
<path stroke="#ff2c24" d="M1342 341h6"/>
<path stroke="#ff2921" d="M1348 341h6"/>
<path stroke="#ff251e" d="M1354 341h6"/>
<path stroke="#ff221c" d="M1360 341h6"/>
<path stroke="#ff2019" d="M1366 341h6"/>
<path stroke="#ff1d17" d="M1372 341h6"/>
<path stroke="#ff1a14" d="M1378 341h6"/>
<path stroke="#ff1812" d="M1384 341h6"/>
<path stroke="#ff1610" d="M1390 341h6"/>
<path stroke="#ff130e" d="M1396 341h6"/>
<path stroke="#ff110c" d="M1402 341h6"/>
<path stroke="#ff0f0a" d="M1408 341h6"/>
<path stroke="#ff0e08" d="M1414 341h6"/>
<path stroke="#ff0c07" d="M1420 341h6"/>
<path stroke="#ff0a05" d="M1426 341h6"/>
<path stroke="#ff0803" d="M1432 341h6"/>
<path stroke="#ff0702" d="M1438 341h6"/>
<path stroke="#ff0501" d="M1444 341h6"/>
<path stroke="#ff0400" d="M1450 341h6"/>
<path stroke="#ff0200" d="M1456 341h6"/>
<path stroke="#ff0100" d="M1462 341h6"/>
<path stroke="#00ffff" d="M1138 347h6"/>
<path stroke="#00feff" d="M1144 347h6"/>
<path stroke="#12feff" d="M1150 347h6"/>
<path stroke="#25feff" d="M1156 347h6"/>
<path stroke="#39feff" d="M1162 347h6"/>
<path stroke="#4efeff" d="M1168 347h6"/>
<path stroke="#64feff" d="M1174 347h6"/>
<path stroke="#7bfeff" d="M1180 347h6"/>
<path stroke="#93feff" d="M1186 347h6"/>
<path stroke="#acfeff" d="M1192 347h6"/>
<path stroke="#c6feff" d="M1198 347h6"/>
<path stroke="#e2feff" d="M1204 347h6"/>
<path stroke="#fefeff" d="M1210 347h6"/>
<path stroke="#ffe3e5" d="M1216 347h6"/>
<path stroke="#ffcdce" d="M1222 347h6"/>
<path stroke="#ffb9ba" d="M1228 347h6"/>
<path stroke="#ffa8a9" d="M1234 347h6"/>
<path stroke="#ff999a" d="M1240 347h6"/>
<path stroke="#ff8c8d" d="M1246 347h6"/>
<path stroke="#ff8081" d="M1252 347h6"/>
<path stroke="#ff7677" d="M1258 347h6"/>
<path stroke="#ff6d6e" d="M1264 347h6"/>
<path stroke="#ff6465" d="M1270 347h6"/>
<path stroke="#ff5c5d" d="M1276 347h6"/>
<path stroke="#ff5556" d="M1282 347h6"/>
<path stroke="#ff4f50" d="M1288 347h6"/>
<path stroke="#ff494a" d="M1294 347h6"/>
<path stroke="#ff4444" d="M1300 347h6"/>
<path stroke="#ff3f3f" d="M1306 347h6"/>
<path stroke="#ff3a3b" d="M1312 347h6"/>
<path stroke="#ff3536" d="M1318 347h6"/>
<path stroke="#ff3132" d="M1324 347h6"/>
<path stroke="#ff2e2e" d="M1330 347h6"/>
<path stroke="#ff2a2b" d="M1336 347h6"/>
<path stroke="#ff2727" d="M1342 347h6"/>
<path stroke="#ff2324" d="M1348 347h6"/>
<path stroke="#ff2021" d="M1354 347h6"/>
<path stroke="#ff1e1e" d="M1360 347h6"/>
<path stroke="#ff1b1c" d="M1366 347h6"/>
<path stroke="#ff1819" d="M1372 347h6"/>
<path stroke="#ff1617" d="M1378 347h6"/>
<path stroke="#ff1415" d="M1384 347h6"/>
<path stroke="#ff1212" d="M1390 347h6"/>
<path stroke="#ff1010" d="M1396 347h6"/>
<path stroke="#ff0e0e" d="M1402 347h6"/>
<path stroke="#ff0c0c" d="M1408 347h6"/>
<path stroke="#ff0a0b" d="M1414 347h6"/>
<path stroke="#ff0809" d="M1420 347h6"/>
<path stroke="#ff0707" d="M1426 347h6"/>
<path stroke="#ff0506" d="M1432 347h6"/>
<path stroke="#ff0304" d="M1438 347h6"/>
<path stroke="#ff0203" d="M1444 347h6"/>
<path stroke="#ff0101" d="M1450 347h6"/>
<path stroke="#ff0000" d="M1456 347h12"/>
<path stroke="#00ecff" d="M1132 353h12"/>
<path stroke="#06ecff" d="M1144 353h6"/>
<path stroke="#18ebff" d="M1150 353h6"/>
<path stroke="#2bebff" d="M1156 353h6"/>
<path stroke="#3eeaff" d="M1162 353h6"/>
<path stroke="#53eaff" d="M1168 353h6"/>
<path stroke="#68e9ff" d="M1174 353h6"/>
<path stroke="#7ee9ff" d="M1180 353h6"/>
<path stroke="#95e8ff" d="M1186 353h6"/>
<path stroke="#ade8ff" d="M1192 353h6"/>
<path stroke="#c7e7ff" d="M1198 353h6"/>
<path stroke="#e1e7ff" d="M1204 353h6"/>
<path stroke="#fde6ff" d="M1210 353h6"/>
<path stroke="#ffd0e7" d="M1216 353h6"/>
<path stroke="#ffbbd0" d="M1222 353h6"/>
<path stroke="#ffa9bd" d="M1228 353h6"/>
<path stroke="#ff9aac" d="M1234 353h6"/>
<path stroke="#ff8c9e" d="M1240 353h6"/>
<path stroke="#ff8091" d="M1246 353h6"/>
<path stroke="#ff7585" d="M1252 353h6"/>
<path stroke="#ff6c7b" d="M1258 353h6"/>
<path stroke="#ff6371" d="M1264 353h6"/>
<path stroke="#ff5b69" d="M1270 353h6"/>
<path stroke="#ff5461" d="M1276 353h6"/>
<path stroke="#ff4d5a" d="M1282 353h6"/>
<path stroke="#ff4753" d="M1288 353h6"/>
<path stroke="#ff424d" d="M1294 353h6"/>
<path stroke="#ff3d48" d="M1300 353h6"/>
<path stroke="#ff3843" d="M1306 353h6"/>
<path stroke="#ff333e" d="M1312 353h6"/>
<path stroke="#ff2f39" d="M1318 353h6"/>
<path stroke="#ff2b35" d="M1324 353h6"/>
<path stroke="#ff2831" d="M1330 353h6"/>
<path stroke="#ff252e" d="M1336 353h6"/>
<path stroke="#ff212a" d="M1342 353h6"/>
<path stroke="#ff1e27" d="M1348 353h6"/>
<path stroke="#ff1c24" d="M1354 353h6"/>
<path stroke="#ff1921" d="M1360 353h6"/>
<path stroke="#ff161e" d="M1366 353h6"/>
<path stroke="#ff141c" d="M1372 353h6"/>
<path stroke="#ff1219" d="M1378 353h6"/>
<path stroke="#ff1017" d="M1384 353h6"/>
<path stroke="#ff0e15" d="M1390 353h6"/>
<path stroke="#ff0c13" d="M1396 353h6"/>
<path stroke="#ff0a11" d="M1402 353h6"/>
<path stroke="#ff080f" d="M1408 353h6"/>
<path stroke="#ff060d" d="M1414 353h6"/>
<path stroke="#ff050b" d="M1420 353h6"/>
<path stroke="#ff030a" d="M1426 353h6"/>
<path stroke="#ff0208" d="M1432 353h6"/>
<path stroke="#ff0006" d="M1438 353h6"/>
<path stroke="#ff0005" d="M1444 353h6"/>
<path stroke="#ff0004" d="M1450 353h6"/>
<path stroke="#ff0002" d="M1456 353h6"/>
<path stroke="#ff0001" d="M1462 353h6"/>
<path stroke="#00dbff" d="M1132 359h12"/>
<path stroke="#0cdaff" d="M1144 359h6"/>
<path stroke="#1dd9ff" d="M1150 359h6"/>
<path stroke="#30d9ff" d="M1156 359h6"/>
<path stroke="#43d8ff" d="M1162 359h6"/>
<path stroke="#57d7ff" d="M1168 359h6"/>
<path stroke="#6bd6ff" d="M1174 359h6"/>
<path stroke="#81d5ff" d="M1180 359h6"/>
<path stroke="#97d4ff" d="M1186 359h6"/>
<path stroke="#afd3ff" d="M1192 359h6"/>
<path stroke="#c7d2ff" d="M1198 359h6"/>
<path stroke="#e0d1ff" d="M1204 359h6"/>
<path stroke="#fbd0ff" d="M1210 359h6"/>
<path stroke="#ffbde9" d="M1216 359h6"/>
<path stroke="#ffabd3" d="M1222 359h6"/>
<path stroke="#ff9ac0" d="M1228 359h6"/>
<path stroke="#ff8caf" d="M1234 359h6"/>
<path stroke="#ff7fa1" d="M1240 359h6"/>
<path stroke="#ff7494" d="M1246 359h6"/>
<path stroke="#ff6a88" d="M1252 359h6"/>
<path stroke="#ff617e" d="M1258 359h6"/>
<path stroke="#ff5974" d="M1264 359h6"/>
<path stroke="#ff526c" d="M1270 359h6"/>
<path stroke="#ff4b64" d="M1276 359h6"/>
<path stroke="#ff455d" d="M1282 359h6"/>
<path stroke="#ff4057" d="M1288 359h6"/>
<path stroke="#ff3b50" d="M1294 359h6"/>
<path stroke="#ff364b" d="M1300 359h6"/>
<path stroke="#ff3146" d="M1306 359h6"/>
<path stroke="#ff2d41" d="M1312 359h6"/>
<path stroke="#ff293c" d="M1318 359h6"/>
<path stroke="#ff2638" d="M1324 359h6"/>
<path stroke="#ff2234" d="M1330 359h6"/>
<path stroke="#ff1f31" d="M1336 359h6"/>
<path stroke="#ff1c2d" d="M1342 359h6"/>
<path stroke="#ff192a" d="M1348 359h6"/>
<path stroke="#ff1727" d="M1354 359h6"/>
<path stroke="#ff1424" d="M1360 359h6"/>
<path stroke="#ff1221" d="M1366 359h6"/>
<path stroke="#ff101e" d="M1372 359h6"/>
<path stroke="#ff0e1c" d="M1378 359h6"/>
<path stroke="#ff0c1a" d="M1384 359h6"/>
<path stroke="#ff0a17" d="M1390 359h6"/>
<path stroke="#ff0815" d="M1396 359h6"/>
<path stroke="#ff0613" d="M1402 359h6"/>
<path stroke="#ff0411" d="M1408 359h6"/>
<path stroke="#ff030f" d="M1414 359h6"/>
<path stroke="#ff010e" d="M1420 359h6"/>
<path stroke="#ff000c" d="M1426 359h6"/>
<path stroke="#ff000a" d="M1432 359h6"/>
<path stroke="#ff0009" d="M1438 359h6"/>
<path stroke="#ff0007" d="M1444 359h6"/>
<path stroke="#ff0006" d="M1450 359h6"/>
<path stroke="#00cbff" d="M1132 365h6"/>
<path stroke="#00caff" d="M1138 365h6"/>
<path stroke="#11c9ff" d="M1144 365h6"/>
<path stroke="#22c8ff" d="M1150 365h6"/>
<path stroke="#34c7ff" d="M1156 365h6"/>
<path stroke="#47c6ff" d="M1162 365h6"/>
<path stroke="#5ac5ff" d="M1168 365h6"/>
<path stroke="#6fc4ff" d="M1174 365h6"/>
<path stroke="#83c3ff" d="M1180 365h6"/>
<path stroke="#99c1ff" d="M1186 365h6"/>
<path stroke="#b0c0ff" d="M1192 365h6"/>
<path stroke="#c7bfff" d="M1198 365h6"/>
<path stroke="#e0bdff" d="M1204 365h6"/>
<path stroke="#fabcff" d="M1210 365h6"/>
<path stroke="#ffaceb" d="M1216 365h6"/>
<path stroke="#ff9bd6" d="M1222 365h6"/>
<path stroke="#ff8cc3" d="M1228 365h6"/>
<path stroke="#ff7fb2" d="M1234 365h6"/>
<path stroke="#ff73a4" d="M1240 365h6"/>
<path stroke="#ff6997" d="M1246 365h6"/>
<path stroke="#ff608c" d="M1252 365h6"/>
<path stroke="#ff5881" d="M1258 365h6"/>
<path stroke="#ff5078" d="M1264 365h6"/>
<path stroke="#ff4a6f" d="M1270 365h6"/>
<path stroke="#ff4367" d="M1276 365h6"/>
<path stroke="#ff3e60" d="M1282 365h6"/>
<path stroke="#ff385a" d="M1288 365h6"/>
<path stroke="#ff3454" d="M1294 365h6"/>
<path stroke="#ff2f4e" d="M1300 365h6"/>
<path stroke="#ff2b49" d="M1306 365h6"/>
<path stroke="#ff2744" d="M1312 365h6"/>
<path stroke="#ff243f" d="M1318 365h6"/>
<path stroke="#ff203b" d="M1324 365h6"/>
<path stroke="#ff1d37" d="M1330 365h6"/>
<path stroke="#ff1a33" d="M1336 365h6"/>
<path stroke="#ff1730" d="M1342 365h6"/>
<path stroke="#ff152d" d="M1348 365h6"/>
<path stroke="#ff1229" d="M1354 365h6"/>
<path stroke="#ff1026" d="M1360 365h6"/>
<path stroke="#ff0e24" d="M1366 365h6"/>
<path stroke="#ff0b21" d="M1372 365h6"/>
<path stroke="#ff091e" d="M1378 365h6"/>
<path stroke="#ff081c" d="M1384 365h6"/>
<path stroke="#ff061a" d="M1390 365h6"/>
<path stroke="#ff0418" d="M1396 365h6"/>
<path stroke="#ff0216" d="M1402 365h6"/>
<path stroke="#ff0114" d="M1408 365h6"/>
<path stroke="#ff0012" d="M1414 365h6"/>
<path stroke="#ff0010" d="M1420 365h6"/>
<path stroke="#ff000e" d="M1426 365h6"/>
<path stroke="#ff000c" d="M1432 365h6"/>
<path stroke="#ff000b" d="M1438 365h6"/>
<path stroke="#00bdff" d="M1126 371h6"/>
<path stroke="#00bcff" d="M1132 371h6"/>
<path stroke="#06bbff" d="M1138 371h6"/>
<path stroke="#16baff" d="M1144 371h6"/>
<path stroke="#27b8ff" d="M1150 371h6"/>
<path stroke="#39b7ff" d="M1156 371h6"/>
<path stroke="#4bb6ff" d="M1162 371h6"/>
<path stroke="#5eb4ff" d="M1168 371h6"/>
<path stroke="#72b3ff" d="M1174 371h6"/>
<path stroke="#86b1ff" d="M1180 371h6"/>
<path stroke="#9bb0ff" d="M1186 371h6"/>
<path stroke="#b1aeff" d="M1192 371h6"/>
<path stroke="#c8adff" d="M1198 371h6"/>
<path stroke="#dfabff" d="M1204 371h6"/>
<path stroke="#f8a9ff" d="M1210 371h6"/>
<path stroke="#ff9bed" d="M1216 371h6"/>
<path stroke="#ff8cd8" d="M1222 371h6"/>
<path stroke="#ff7ec6" d="M1228 371h6"/>
<path stroke="#ff72b5" d="M1234 371h6"/>
<path stroke="#ff68a7" d="M1240 371h6"/>
<path stroke="#ff5e9a" d="M1246 371h6"/>
<path stroke="#ff568f" d="M1252 371h6"/>
<path stroke="#ff4e84" d="M1258 371h6"/>
<path stroke="#ff477b" d="M1264 371h6"/>
<path stroke="#ff4172" d="M1270 371h6"/>
<path stroke="#ff3b6b" d="M1276 371h6"/>
<path stroke="#ff3663" d="M1282 371h6"/>
<path stroke="#ff315d" d="M1288 371h6"/>
<path stroke="#ff2d57" d="M1294 371h6"/>
<path stroke="#ff2951" d="M1300 371h6"/>
<path stroke="#ff254c" d="M1306 371h6"/>
<path stroke="#ff2147" d="M1312 371h6"/>
<path stroke="#ff1e42" d="M1318 371h6"/>
<path stroke="#ff1b3e" d="M1324 371h6"/>
<path stroke="#ff183a" d="M1330 371h6"/>
<path stroke="#ff1536" d="M1336 371h6"/>
<path stroke="#ff1233" d="M1342 371h6"/>
<path stroke="#ff102f" d="M1348 371h6"/>
<path stroke="#ff0e2c" d="M1354 371h6"/>
<path stroke="#ff0b29" d="M1360 371h6"/>
<path stroke="#ff0926" d="M1366 371h6"/>
<path stroke="#ff0724" d="M1372 371h6"/>
<path stroke="#ff0521" d="M1378 371h6"/>
<path stroke="#ff041e" d="M1384 371h6"/>
<path stroke="#ff021c" d="M1390 371h6"/>
<path stroke="#ff001a" d="M1396 371h6"/>
<path stroke="#ff0018" d="M1402 371h6"/>
<path stroke="#ff0016" d="M1408 371h6"/>
<path stroke="#ff0014" d="M1414 371h6"/>
<path stroke="#ff0012" d="M1420 371h6"/>
<path stroke="#00afff" d="M1126 377h6"/>
<path stroke="#00adff" d="M1132 377h6"/>
<path stroke="#0bacff" d="M1138 377h6"/>
<path stroke="#1babff" d="M1144 377h6"/>
<path stroke="#2ca9ff" d="M1150 377h6"/>
<path stroke="#3da8ff" d="M1156 377h6"/>
<path stroke="#4fa6ff" d="M1162 377h6"/>
<path stroke="#61a4ff" d="M1168 377h6"/>
<path stroke="#74a3ff" d="M1174 377h6"/>
<path stroke="#88a1ff" d="M1180 377h6"/>
<path stroke="#9d9fff" d="M1186 377h6"/>
<path stroke="#b29dff" d="M1192 377h6"/>
<path stroke="#c89bff" d="M1198 377h6"/>
<path stroke="#df99ff" d="M1204 377h6"/>
<path stroke="#f797ff" d="M1210 377h6"/>
<path stroke="#ff8cef" d="M1216 377h6"/>
<path stroke="#ff7eda" d="M1222 377h6"/>
<path stroke="#ff71c8" d="M1228 377h6"/>
<path stroke="#ff66b8" d="M1234 377h6"/>
<path stroke="#ff5daa" d="M1240 377h6"/>
<path stroke="#ff549d" d="M1246 377h6"/>
<path stroke="#ff4c92" d="M1252 377h6"/>
<path stroke="#ff4587" d="M1258 377h6"/>
<path stroke="#ff3f7e" d="M1264 377h6"/>
<path stroke="#ff3975" d="M1270 377h6"/>
<path stroke="#ff346e" d="M1276 377h6"/>
<path stroke="#ff2f66" d="M1282 377h6"/>
<path stroke="#ff2a60" d="M1288 377h6"/>
<path stroke="#ff265a" d="M1294 377h6"/>
<path stroke="#ff2254" d="M1300 377h6"/>
<path stroke="#ff1f4f" d="M1306 377h6"/>
<path stroke="#ff1b4a" d="M1312 377h6"/>
<path stroke="#ff1845" d="M1318 377h6"/>
<path stroke="#ff1541" d="M1324 377h6"/>
<path stroke="#ff133d" d="M1330 377h6"/>
<path stroke="#ff1039" d="M1336 377h6"/>
<path stroke="#ff0e35" d="M1342 377h6"/>
<path stroke="#ff0b32" d="M1348 377h6"/>
<path stroke="#ff092f" d="M1354 377h6"/>
<path stroke="#ff072c" d="M1360 377h6"/>
<path stroke="#ff0529" d="M1366 377h6"/>
<path stroke="#ff0326" d="M1372 377h6"/>
<path stroke="#ff0123" d="M1378 377h6"/>
<path stroke="#ff0021" d="M1384 377h6"/>
<path stroke="#ff001e" d="M1390 377h6"/>
<path stroke="#ff001c" d="M1396 377h6"/>
<path stroke="#ff001a" d="M1402 377h6"/>
<path stroke="#ff0018" d="M1408 377h6"/>
<path stroke="#00a3ff" d="M1120 383h6"/>
<path stroke="#00a1ff" d="M1126 383h6"/>
<path stroke="#01a0ff" d="M1132 383h6"/>
<path stroke="#119eff" d="M1138 383h6"/>
<path stroke="#209dff" d="M1144 383h6"/>
<path stroke="#309bff" d="M1150 383h6"/>
<path stroke="#4199ff" d="M1156 383h6"/>
<path stroke="#5397ff" d="M1162 383h6"/>
<path stroke="#6496ff" d="M1168 383h6"/>
<path stroke="#7794ff" d="M1174 383h6"/>
<path stroke="#8a92ff" d="M1180 383h6"/>
<path stroke="#9e90ff" d="M1186 383h6"/>
<path stroke="#b38eff" d="M1192 383h6"/>
<path stroke="#c88bff" d="M1198 383h6"/>
<path stroke="#df89ff" d="M1204 383h6"/>
<path stroke="#f687ff" d="M1210 383h6"/>
<path stroke="#ff7df1" d="M1216 383h6"/>
<path stroke="#ff70dc" d="M1222 383h6"/>
<path stroke="#ff65ca" d="M1228 383h6"/>
<path stroke="#ff5bbb" d="M1234 383h6"/>
<path stroke="#ff52ad" d="M1240 383h6"/>
<path stroke="#ff4aa0" d="M1246 383h6"/>
<path stroke="#ff4395" d="M1252 383h6"/>
<path stroke="#ff3d8a" d="M1258 383h6"/>
<path stroke="#ff3781" d="M1264 383h6"/>
<path stroke="#ff3178" d="M1270 383h6"/>
<path stroke="#ff2c71" d="M1276 383h6"/>
<path stroke="#ff2869" d="M1282 383h6"/>
<path stroke="#ff2463" d="M1288 383h6"/>
<path stroke="#ff205d" d="M1294 383h6"/>
<path stroke="#ff1c57" d="M1300 383h6"/>
<path stroke="#ff1951" d="M1306 383h6"/>
<path stroke="#ff164c" d="M1312 383h6"/>
<path stroke="#ff1348" d="M1318 383h6"/>
<path stroke="#ff1043" d="M1324 383h6"/>
<path stroke="#ff0e3f" d="M1330 383h6"/>
<path stroke="#ff0b3b" d="M1336 383h6"/>
<path stroke="#ff0938" d="M1342 383h6"/>
<path stroke="#ff0734" d="M1348 383h6"/>
<path stroke="#ff0531" d="M1354 383h6"/>
<path stroke="#ff032e" d="M1360 383h6"/>
<path stroke="#ff012b" d="M1366 383h6"/>
<path stroke="#ff0028" d="M1372 383h6"/>
<path stroke="#ff0026" d="M1378 383h6"/>
<path stroke="#ff0023" d="M1384 383h6"/>
<path stroke="#ff0021" d="M1390 383h6"/>
<path stroke="#ff001f" d="M1396 383h6"/>
<path stroke="#0096ff" d="M1120 389h6"/>
<path stroke="#0094ff" d="M1126 389h6"/>
<path stroke="#0693ff" d="M1132 389h6"/>
<path stroke="#1591ff" d="M1138 389h6"/>
<path stroke="#258fff" d="M1144 389h6"/>
<path stroke="#358dff" d="M1150 389h6"/>
<path stroke="#458bff" d="M1156 389h6"/>
<path stroke="#5689ff" d="M1162 389h6"/>
<path stroke="#6787ff" d="M1168 389h6"/>
<path stroke="#7a85ff" d="M1174 389h6"/>
<path stroke="#8c83ff" d="M1180 389h6"/>
<path stroke="#a081ff" d="M1186 389h6"/>
<path stroke="#b47fff" d="M1192 389h6"/>
<path stroke="#c97cff" d="M1198 389h6"/>
<path stroke="#de7aff" d="M1204 389h6"/>
<path stroke="#f577ff" d="M1210 389h6"/>
<path stroke="#ff6ff3" d="M1216 389h6"/>
<path stroke="#ff63de" d="M1222 389h6"/>
<path stroke="#ff59cd" d="M1228 389h6"/>
<path stroke="#ff50bd" d="M1234 389h6"/>
<path stroke="#ff48af" d="M1240 389h6"/>
<path stroke="#ff41a3" d="M1246 389h6"/>
<path stroke="#ff3a97" d="M1252 389h6"/>
<path stroke="#ff348d" d="M1258 389h6"/>
<path stroke="#ff2f84" d="M1264 389h6"/>
<path stroke="#ff2a7b" d="M1270 389h6"/>
<path stroke="#ff2573" d="M1276 389h6"/>
<path stroke="#ff216c" d="M1282 389h6"/>
<path stroke="#ff1d66" d="M1288 389h6"/>
<path stroke="#ff1a5f" d="M1294 389h6"/>
<path stroke="#ff165a" d="M1300 389h6"/>
<path stroke="#ff1354" d="M1306 389h6"/>
<path stroke="#ff104f" d="M1312 389h6"/>
<path stroke="#ff0e4b" d="M1318 389h6"/>
<path stroke="#ff0b46" d="M1324 389h6"/>
<path stroke="#ff0942" d="M1330 389h6"/>
<path stroke="#ff063e" d="M1336 389h6"/>
<path stroke="#ff043a" d="M1342 389h6"/>
<path stroke="#ff0237" d="M1348 389h6"/>
<path stroke="#ff0034" d="M1354 389h6"/>
<path stroke="#ff0031" d="M1360 389h6"/>
<path stroke="#ff002e" d="M1366 389h6"/>
<path stroke="#ff002b" d="M1372 389h6"/>
<path stroke="#ff0028" d="M1378 389h6"/>
<path stroke="#008aff" d="M1120 395h6"/>
<path stroke="#0088ff" d="M1126 395h6"/>
<path stroke="#0b86ff" d="M1132 395h6"/>
<path stroke="#1a84ff" d="M1138 395h6"/>
<path stroke="#2982ff" d="M1144 395h6"/>
<path stroke="#3980ff" d="M1150 395h6"/>
<path stroke="#497eff" d="M1156 395h6"/>
<path stroke="#597cff" d="M1162 395h6"/>
<path stroke="#6a7aff" d="M1168 395h6"/>
<path stroke="#7c78ff" d="M1174 395h6"/>
<path stroke="#8e75ff" d="M1180 395h6"/>
<path stroke="#a173ff" d="M1186 395h6"/>
<path stroke="#b571ff" d="M1192 395h6"/>
<path stroke="#c96eff" d="M1198 395h6"/>
<path stroke="#de6bff" d="M1204 395h6"/>
<path stroke="#f468ff" d="M1210 395h6"/>
<path stroke="#ff61f4" d="M1216 395h6"/>
<path stroke="#ff57e0" d="M1222 395h6"/>
<path stroke="#ff4dcf" d="M1228 395h6"/>
<path stroke="#ff45c0" d="M1234 395h6"/>
<path stroke="#ff3eb2" d="M1240 395h6"/>
<path stroke="#ff37a5" d="M1246 395h6"/>
<path stroke="#ff319a" d="M1252 395h6"/>
<path stroke="#ff2c90" d="M1258 395h6"/>
<path stroke="#ff2787" d="M1264 395h6"/>
<path stroke="#ff227e" d="M1270 395h6"/>
<path stroke="#ff1e76" d="M1276 395h6"/>
<path stroke="#ff1a6f" d="M1282 395h6"/>
<path stroke="#ff1768" d="M1288 395h6"/>
<path stroke="#ff1462" d="M1294 395h6"/>
<path stroke="#ff105c" d="M1300 395h6"/>
<path stroke="#ff0e57" d="M1306 395h6"/>
<path stroke="#ff0b52" d="M1312 395h6"/>
<path stroke="#ff084d" d="M1318 395h6"/>
<path stroke="#ff0649" d="M1324 395h6"/>
<path stroke="#ff0445" d="M1330 395h6"/>
<path stroke="#ff0241" d="M1336 395h6"/>
<path stroke="#ff003d" d="M1342 395h6"/>
<path stroke="#ff0039" d="M1348 395h6"/>
<path stroke="#ff0036" d="M1354 395h6"/>
<path stroke="#ff0033" d="M1360 395h6"/>
<path stroke="#ff0030" d="M1366 395h6"/>
<path stroke="#0080ff" d="M1114 401h6"/>
<path stroke="#007eff" d="M1120 401h6"/>
<path stroke="#027cff" d="M1126 401h6"/>
<path stroke="#107aff" d="M1132 401h6"/>
<path stroke="#1e78ff" d="M1138 401h6"/>
<path stroke="#2d76ff" d="M1144 401h6"/>
<path stroke="#3c74ff" d="M1150 401h6"/>
<path stroke="#4c72ff" d="M1156 401h6"/>
<path stroke="#5c70ff" d="M1162 401h6"/>
<path stroke="#6d6dff" d="M1168 401h6"/>
<path stroke="#7e6bff" d="M1174 401h6"/>
<path stroke="#9068ff" d="M1180 401h6"/>
<path stroke="#a266ff" d="M1186 401h6"/>
<path stroke="#b563ff" d="M1192 401h6"/>
<path stroke="#c960ff" d="M1198 401h6"/>
<path stroke="#de5eff" d="M1204 401h6"/>
<path stroke="#f35bff" d="M1210 401h6"/>
<path stroke="#ff54f6" d="M1216 401h6"/>
<path stroke="#ff4be2" d="M1222 401h6"/>
<path stroke="#ff43d1" d="M1228 401h6"/>
<path stroke="#ff3bc2" d="M1234 401h6"/>
<path stroke="#ff34b4" d="M1240 401h6"/>
<path stroke="#ff2ea8" d="M1246 401h6"/>
<path stroke="#ff299d" d="M1252 401h6"/>
<path stroke="#ff2493" d="M1258 401h6"/>
<path stroke="#ff1f89" d="M1264 401h6"/>
<path stroke="#ff1b81" d="M1270 401h6"/>
<path stroke="#ff1779" d="M1276 401h6"/>
<path stroke="#ff1472" d="M1282 401h6"/>
<path stroke="#ff116b" d="M1288 401h6"/>
<path stroke="#ff0e65" d="M1294 401h6"/>
<path stroke="#ff0b5f" d="M1300 401h6"/>
<path stroke="#ff085a" d="M1306 401h6"/>
<path stroke="#ff0654" d="M1312 401h6"/>
<path stroke="#ff0350" d="M1318 401h6"/>
<path stroke="#ff014b" d="M1324 401h6"/>
<path stroke="#ff0047" d="M1330 401h6"/>
<path stroke="#ff0043" d="M1336 401h6"/>
<path stroke="#ff003f" d="M1342 401h6"/>
<path stroke="#ff003c" d="M1348 401h6"/>
<path stroke="#ff0038" d="M1354 401h6"/>
<path stroke="#0075ff" d="M1114 407h6"/>
<path stroke="#0073ff" d="M1120 407h6"/>
<path stroke="#0771ff" d="M1126 407h6"/>
<path stroke="#146fff" d="M1132 407h6"/>
<path stroke="#236dff" d="M1138 407h6"/>
<path stroke="#316bff" d="M1144 407h6"/>
<path stroke="#4068ff" d="M1150 407h6"/>
<path stroke="#4f66ff" d="M1156 407h6"/>
<path stroke="#5f64ff" d="M1162 407h6"/>
<path stroke="#6f61ff" d="M1168 407h6"/>
<path stroke="#805fff" d="M1174 407h6"/>
<path stroke="#925cff" d="M1180 407h6"/>
<path stroke="#a459ff" d="M1186 407h6"/>
<path stroke="#b657ff" d="M1192 407h6"/>
<path stroke="#c954ff" d="M1198 407h6"/>
<path stroke="#dd51ff" d="M1204 407h6"/>
<path stroke="#f24eff" d="M1210 407h6"/>
<path stroke="#ff48f7" d="M1216 407h6"/>
<path stroke="#ff40e4" d="M1222 407h6"/>
<path stroke="#ff38d3" d="M1228 407h6"/>
<path stroke="#ff31c4" d="M1234 407h6"/>
<path stroke="#ff2bb7" d="M1240 407h6"/>
<path stroke="#ff26aa" d="M1246 407h6"/>
<path stroke="#ff219f" d="M1252 407h6"/>
<path stroke="#ff1c95" d="M1258 407h6"/>
<path stroke="#ff188c" d="M1264 407h6"/>
<path stroke="#ff1483" d="M1270 407h6"/>
<path stroke="#ff117c" d="M1276 407h6"/>
<path stroke="#ff0e74" d="M1282 407h6"/>
<path stroke="#ff0b6e" d="M1288 407h6"/>
<path stroke="#ff0867" d="M1294 407h6"/>
<path stroke="#ff0562" d="M1300 407h6"/>
<path stroke="#ff035c" d="M1306 407h6"/>
<path stroke="#ff0157" d="M1312 407h6"/>
<path stroke="#ff0052" d="M1318 407h6"/>
<path stroke="#ff004e" d="M1324 407h6"/>
<path stroke="#ff0049" d="M1330 407h6"/>
<path stroke="#ff0045" d="M1336 407h6"/>
<path stroke="#006aff" d="M1114 413h6"/>
<path stroke="#0068ff" d="M1120 413h6"/>
<path stroke="#0b66ff" d="M1126 413h6"/>
<path stroke="#1964ff" d="M1132 413h6"/>
<path stroke="#2762ff" d="M1138 413h6"/>
<path stroke="#3560ff" d="M1144 413h6"/>
<path stroke="#435dff" d="M1150 413h6"/>
<path stroke="#525bff" d="M1156 413h6"/>
<path stroke="#6258ff" d="M1162 413h6"/>
<path stroke="#7256ff" d="M1168 413h6"/>
<path stroke="#8253ff" d="M1174 413h6"/>
<path stroke="#9350ff" d="M1180 413h6"/>
<path stroke="#a54eff" d="M1186 413h6"/>
<path stroke="#b74bff" d="M1192 413h6"/>
<path stroke="#ca48ff" d="M1198 413h6"/>
<path stroke="#dd45ff" d="M1204 413h6"/>
<path stroke="#f141ff" d="M1210 413h6"/>
<path stroke="#ff3cf9" d="M1216 413h6"/>
<path stroke="#ff35e6" d="M1222 413h6"/>
<path stroke="#ff2ed5" d="M1228 413h6"/>
<path stroke="#ff28c6" d="M1234 413h6"/>
<path stroke="#ff22b9" d="M1240 413h6"/>
<path stroke="#ff1dad" d="M1246 413h6"/>
<path stroke="#ff19a2" d="M1252 413h6"/>
<path stroke="#ff1598" d="M1258 413h6"/>
<path stroke="#ff118e" d="M1264 413h6"/>
<path stroke="#ff0e86" d="M1270 413h6"/>
<path stroke="#ff0a7e" d="M1276 413h6"/>
<path stroke="#ff0777" d="M1282 413h6"/>
<path stroke="#ff0570" d="M1288 413h6"/>
<path stroke="#ff026a" d="M1294 413h6"/>
<path stroke="#ff0064" d="M1300 413h6"/>
<path stroke="#ff005f" d="M1306 413h6"/>
<path stroke="#ff0059" d="M1312 413h6"/>
<path stroke="#ff0055" d="M1318 413h6"/>
<path stroke="#ff0050" d="M1324 413h6"/>
<path stroke="#0062ff" d="M1108 419h6"/>
<path stroke="#0060ff" d="M1114 419h6"/>
<path stroke="#035eff" d="M1120 419h6"/>
<path stroke="#105cff" d="M1126 419h6"/>
<path stroke="#1d5aff" d="M1132 419h6"/>
<path stroke="#2a58ff" d="M1138 419h6"/>
<path stroke="#3855ff" d="M1144 419h6"/>
<path stroke="#4753ff" d="M1150 419h6"/>
<path stroke="#5550ff" d="M1156 419h6"/>
<path stroke="#654eff" d="M1162 419h6"/>
<path stroke="#744bff" d="M1168 419h6"/>
<path stroke="#8448ff" d="M1174 419h6"/>
<path stroke="#9545ff" d="M1180 419h6"/>
<path stroke="#a642ff" d="M1186 419h6"/>
<path stroke="#b83fff" d="M1192 419h6"/>
<path stroke="#ca3cff" d="M1198 419h6"/>
<path stroke="#dd39ff" d="M1204 419h6"/>
<path stroke="#f036ff" d="M1210 419h6"/>
<path stroke="#ff31fa" d="M1216 419h6"/>
<path stroke="#ff2ae7" d="M1222 419h6"/>
<path stroke="#ff24d7" d="M1228 419h6"/>
<path stroke="#ff1fc8" d="M1234 419h6"/>
<path stroke="#ff1abb" d="M1240 419h6"/>
<path stroke="#ff15af" d="M1246 419h6"/>
<path stroke="#ff11a4" d="M1252 419h6"/>
<path stroke="#ff0e9a" d="M1258 419h6"/>
<path stroke="#ff0a91" d="M1264 419h6"/>
<path stroke="#ff0788" d="M1270 419h6"/>
<path stroke="#ff0481" d="M1276 419h6"/>
<path stroke="#ff0279" d="M1282 419h6"/>
<path stroke="#ff0073" d="M1288 419h6"/>
<path stroke="#ff006c" d="M1294 419h6"/>
<path stroke="#ff0067" d="M1300 419h6"/>
<path stroke="#ff0061" d="M1306 419h6"/>
<path stroke="#ff005c" d="M1312 419h6"/>
<path stroke="#0059ff" d="M1108 425h6"/>
<path stroke="#0057ff" d="M1114 425h6"/>
<path stroke="#0755ff" d="M1120 425h6"/>
<path stroke="#1452ff" d="M1126 425h6"/>
<path stroke="#2150ff" d="M1132 425h6"/>
<path stroke="#2e4eff" d="M1138 425h6"/>
<path stroke="#3c4bff" d="M1144 425h6"/>
<path stroke="#4a49ff" d="M1150 425h6"/>
<path stroke="#5846ff" d="M1156 425h6"/>
<path stroke="#6743ff" d="M1162 425h6"/>
<path stroke="#7640ff" d="M1168 425h6"/>
<path stroke="#863eff" d="M1174 425h6"/>
<path stroke="#963bff" d="M1180 425h6"/>
<path stroke="#a738ff" d="M1186 425h6"/>
<path stroke="#b835ff" d="M1192 425h6"/>
<path stroke="#ca31ff" d="M1198 425h6"/>
<path stroke="#dc2eff" d="M1204 425h6"/>
<path stroke="#ef2bff" d="M1210 425h6"/>
<path stroke="#ff27fb" d="M1216 425h6"/>
<path stroke="#ff20e9" d="M1222 425h6"/>
<path stroke="#ff1bd9" d="M1228 425h6"/>
<path stroke="#ff16ca" d="M1234 425h6"/>
<path stroke="#ff12bd" d="M1240 425h6"/>
<path stroke="#ff0eb1" d="M1246 425h6"/>
<path stroke="#ff0aa6" d="M1252 425h6"/>
<path stroke="#ff079c" d="M1258 425h6"/>
<path stroke="#ff0493" d="M1264 425h6"/>
<path stroke="#ff018b" d="M1270 425h6"/>
<path stroke="#ff0083" d="M1276 425h6"/>
<path stroke="#ff007c" d="M1282 425h6"/>
<path stroke="#ff0075" d="M1288 425h6"/>
<path stroke="#ff006f" d="M1294 425h6"/>
<path stroke="#0050ff" d="M1108 431h6"/>
<path stroke="#004dff" d="M1114 431h6"/>
<path stroke="#0b4bff" d="M1120 431h6"/>
<path stroke="#1849ff" d="M1126 431h6"/>
<path stroke="#2446ff" d="M1132 431h6"/>
<path stroke="#3244ff" d="M1138 431h6"/>
<path stroke="#3f41ff" d="M1144 431h6"/>
<path stroke="#4d3fff" d="M1150 431h6"/>
<path stroke="#5b3cff" d="M1156 431h6"/>
<path stroke="#6939ff" d="M1162 431h6"/>
<path stroke="#7837ff" d="M1168 431h6"/>
<path stroke="#8834ff" d="M1174 431h6"/>
<path stroke="#9831ff" d="M1180 431h6"/>
<path stroke="#a82eff" d="M1186 431h6"/>
<path stroke="#b92aff" d="M1192 431h6"/>
<path stroke="#ca27ff" d="M1198 431h6"/>
<path stroke="#dc24ff" d="M1204 431h6"/>
<path stroke="#ef20ff" d="M1210 431h6"/>
<path stroke="#ff1cfc" d="M1216 431h6"/>
<path stroke="#ff17eb" d="M1222 431h6"/>
<path stroke="#ff12db" d="M1228 431h6"/>
<path stroke="#ff0ecc" d="M1234 431h6"/>
<path stroke="#ff0abf" d="M1240 431h6"/>
<path stroke="#ff06b3" d="M1246 431h6"/>
<path stroke="#ff03a9" d="M1252 431h6"/>
<path stroke="#ff009f" d="M1258 431h6"/>
<path stroke="#ff0096" d="M1264 431h6"/>
<path stroke="#ff008d" d="M1270 431h6"/>
<path stroke="#ff0085" d="M1276 431h6"/>
<path stroke="#ff007e" d="M1282 431h6"/>
<path stroke="#0049ff" d="M1102 437h6"/>
<path stroke="#0047ff" d="M1108 437h6"/>
<path stroke="#0345ff" d="M1114 437h6"/>
<path stroke="#0f42ff" d="M1120 437h6"/>
<path stroke="#1b40ff" d="M1126 437h6"/>
<path stroke="#283dff" d="M1132 437h6"/>
<path stroke="#353bff" d="M1138 437h6"/>
<path stroke="#4238ff" d="M1144 437h6"/>
<path stroke="#5036ff" d="M1150 437h6"/>
<path stroke="#5e33ff" d="M1156 437h6"/>
<path stroke="#6c30ff" d="M1162 437h6"/>
<path stroke="#7a2dff" d="M1168 437h6"/>
<path stroke="#8a2aff" d="M1174 437h6"/>
<path stroke="#9927ff" d="M1180 437h6"/>
<path stroke="#a924ff" d="M1186 437h6"/>
<path stroke="#ba21ff" d="M1192 437h6"/>
<path stroke="#ca1dff" d="M1198 437h6"/>
<path stroke="#dc1aff" d="M1204 437h6"/>
<path stroke="#ee16ff" d="M1210 437h6"/>
<path stroke="#ff12fe" d="M1216 437h6"/>
<path stroke="#ff0eec" d="M1222 437h6"/>
<path stroke="#ff09dc" d="M1228 437h6"/>
<path stroke="#ff06ce" d="M1234 437h6"/>
<path stroke="#ff02c1" d="M1240 437h6"/>
<path stroke="#ff00b5" d="M1246 437h6"/>
<path stroke="#ff00ab" d="M1252 437h6"/>
<path stroke="#ff00a1" d="M1258 437h6"/>
<path stroke="#ff0098" d="M1264 437h6"/>
<path stroke="#ff008f" d="M1270 437h6"/>
<path stroke="#0041ff" d="M1102 443h6"/>
<path stroke="#003eff" d="M1108 443h6"/>
<path stroke="#073cff" d="M1114 443h6"/>
<path stroke="#133aff" d="M1120 443h6"/>
<path stroke="#1f37ff" d="M1126 443h6"/>
<path stroke="#2b35ff" d="M1132 443h6"/>
<path stroke="#3832ff" d="M1138 443h6"/>
<path stroke="#452fff" d="M1144 443h6"/>
<path stroke="#522dff" d="M1150 443h6"/>
<path stroke="#602aff" d="M1156 443h6"/>
<path stroke="#6e27ff" d="M1162 443h6"/>
<path stroke="#7c24ff" d="M1168 443h6"/>
<path stroke="#8b21ff" d="M1174 443h6"/>
<path stroke="#9a1eff" d="M1180 443h6"/>
<path stroke="#aa1bff" d="M1186 443h6"/>
<path stroke="#ba17ff" d="M1192 443h6"/>
<path stroke="#cb14ff" d="M1198 443h6"/>
<path stroke="#dc10ff" d="M1204 443h6"/>
<path stroke="#ed0dff" d="M1210 443h6"/>
<path stroke="#ff09ff" d="M1216 443h6"/>
<path stroke="#ff05ed" d="M1222 443h6"/>
<path stroke="#ff01de" d="M1228 443h6"/>
<path stroke="#ff00d0" d="M1234 443h6"/>
<path stroke="#ff00c3" d="M1240 443h6"/>
<path stroke="#ff00b7" d="M1246 443h6"/>
<path stroke="#ff00ad" d="M1252 443h6"/>
<path stroke="#0039ff" d="M1102 449h6"/>
<path stroke="#0036ff" d="M1108 449h6"/>
<path stroke="#0b34ff" d="M1114 449h6"/>
<path stroke="#1731ff" d="M1120 449h6"/>
<path stroke="#232fff" d="M1126 449h6"/>
<path stroke="#2f2cff" d="M1132 449h6"/>
<path stroke="#3b2aff" d="M1138 449h6"/>
<path stroke="#4827ff" d="M1144 449h6"/>
<path stroke="#5524ff" d="M1150 449h6"/>
<path stroke="#6221ff" d="M1156 449h6"/>
<path stroke="#701eff" d="M1162 449h6"/>
<path stroke="#7e1bff" d="M1168 449h6"/>
<path stroke="#8d18ff" d="M1174 449h6"/>
<path stroke="#9c15ff" d="M1180 449h6"/>
<path stroke="#ab12ff" d="M1186 449h6"/>
<path stroke="#bb0eff" d="M1192 449h6"/>
<path stroke="#cb0bff" d="M1198 449h6"/>
<path stroke="#db07ff" d="M1204 449h6"/>
<path stroke="#ed04ff" d="M1210 449h6"/>
<path stroke="#fe00ff" d="M1216 449h6"/>
<path stroke="#ff00ef" d="M1222 449h6"/>
<path stroke="#ff00df" d="M1228 449h6"/>
<path stroke="#ff00d2" d="M1234 449h6"/>
<path stroke="#ff00c5" d="M1240 449h6"/>
<path stroke="#0033ff" d="M1096 455h6"/>
<path stroke="#0031ff" d="M1102 455h6"/>
<path stroke="#042eff" d="M1108 455h6"/>
<path stroke="#0f2cff" d="M1114 455h6"/>
<path stroke="#1a29ff" d="M1120 455h6"/>
<path stroke="#2627ff" d="M1126 455h6"/>
<path stroke="#3224ff" d="M1132 455h6"/>
<path stroke="#3e22ff" d="M1138 455h6"/>
<path stroke="#4b1fff" d="M1144 455h6"/>
<path stroke="#571cff" d="M1150 455h6"/>
<path stroke="#6519ff" d="M1156 455h6"/>
<path stroke="#7216ff" d="M1162 455h6"/>
<path stroke="#8013ff" d="M1168 455h6"/>
<path stroke="#8e10ff" d="M1174 455h6"/>
<path stroke="#9d0dff" d="M1180 455h6"/>
<path stroke="#ac09ff" d="M1186 455h6"/>
<path stroke="#bb06ff" d="M1192 455h6"/>
<path stroke="#cb02ff" d="M1198 455h6"/>
<path stroke="#db00ff" d="M1204 455h6"/>
<path stroke="#ec00ff" d="M1210 455h6"/>
<path stroke="#fd00ff" d="M1216 455h6"/>
<path stroke="#ff00f0" d="M1222 455h6"/>
<path stroke="#ff00e1" d="M1228 455h6"/>
<path stroke="#002cff" d="M1096 461h6"/>
<path stroke="#0029ff" d="M1102 461h6"/>
<path stroke="#0827ff" d="M1108 461h6"/>
<path stroke="#1324ff" d="M1114 461h6"/>
<path stroke="#1e22ff" d="M1120 461h6"/>
<path stroke="#291fff" d="M1126 461h6"/>
<path stroke="#351cff" d="M1132 461h6"/>
<path stroke="#411aff" d="M1138 461h6"/>
<path stroke="#4d17ff" d="M1144 461h6"/>
<path stroke="#5a14ff" d="M1150 461h6"/>
<path stroke="#6711ff" d="M1156 461h6"/>
<path stroke="#740eff" d="M1162 461h6"/>
<path stroke="#820bff" d="M1168 461h6"/>
<path stroke="#9008ff" d="M1174 461h6"/>
<path stroke="#9e05ff" d="M1180 461h6"/>
<path stroke="#ad01ff" d="M1186 461h6"/>
<path stroke="#bc00ff" d="M1192 461h6"/>
<path stroke="#cb00ff" d="M1198 461h6"/>
<path stroke="#db00ff" d="M1204 461h6"/>
<path stroke="#eb00ff" d="M1210 461h6"/>
<path stroke="#0027ff" d="M1090 467h6"/>
<path stroke="#0024ff" d="M1096 467h6"/>
<path stroke="#0122ff" d="M1102 467h6"/>
<path stroke="#0b1fff" d="M1108 467h6"/>
<path stroke="#161dff" d="M1114 467h6"/>
<path stroke="#211aff" d="M1120 467h6"/>
<path stroke="#2c18ff" d="M1126 467h6"/>
<path stroke="#3815ff" d="M1132 467h6"/>
<path stroke="#4412ff" d="M1138 467h6"/>
<path stroke="#500fff" d="M1144 467h6"/>
<path stroke="#5c0cff" d="M1150 467h6"/>
<path stroke="#6909ff" d="M1156 467h6"/>
<path stroke="#7606ff" d="M1162 467h6"/>
<path stroke="#8303ff" d="M1168 467h6"/>
<path stroke="#9100ff" d="M1174 467h6"/>
<path stroke="#9f00ff" d="M1180 467h6"/>
<path stroke="#ad00ff" d="M1186 467h6"/>
<path stroke="#bc00ff" d="M1192 467h6"/>
<path stroke="#cb00ff" d="M1198 467h6"/>
<path stroke="#0020ff" d="M1090 473h6"/>
<path stroke="#001dff" d="M1096 473h6"/>
<path stroke="#041bff" d="M1102 473h6"/>
<path stroke="#0f18ff" d="M1108 473h6"/>
<path stroke="#1916ff" d="M1114 473h6"/>
<path stroke="#2413ff" d="M1120 473h6"/>
<path stroke="#2f11ff" d="M1126 473h6"/>
<path stroke="#3b0eff" d="M1132 473h6"/>
<path stroke="#460bff" d="M1138 473h6"/>
<path stroke="#5208ff" d="M1144 473h6"/>
<path stroke="#5e05ff" d="M1150 473h6"/>
<path stroke="#6b02ff" d="M1156 473h6"/>
<path stroke="#7800ff" d="M1162 473h6"/>
<path stroke="#8500ff" d="M1168 473h6"/>
<path stroke="#9200ff" d="M1174 473h6"/>
<path stroke="#a000ff" d="M1180 473h6"/>
<path stroke="#ae00ff" d="M1186 473h6"/>
<path stroke="#0019ff" d="M1090 479h6"/>
<path stroke="#0017ff" d="M1096 479h6"/>
<path stroke="#0814ff" d="M1102 479h6"/>
<path stroke="#1212ff" d="M1108 479h6"/>
<path stroke="#1d0fff" d="M1114 479h6"/>
<path stroke="#270cff" d="M1120 479h6"/>
<path stroke="#320aff" d="M1126 479h6"/>
<path stroke="#3d07ff" d="M1132 479h6"/>
<path stroke="#4904ff" d="M1138 479h6"/>
<path stroke="#5501ff" d="M1144 479h6"/>
<path stroke="#6100ff" d="M1150 479h6"/>
<path stroke="#6d00ff" d="M1156 479h6"/>
<path stroke="#7900ff" d="M1162 479h6"/>
<path stroke="#8600ff" d="M1168 479h6"/>
<path stroke="#9300ff" d="M1174 479h6"/>
<path stroke="#0015ff" d="M1084 485h6"/>
<path stroke="#0013ff" d="M1090 485h6"/>
<path stroke="#0110ff" d="M1096 485h6"/>
<path stroke="#0b0eff" d="M1102 485h6"/>
<path stroke="#150bff" d="M1108 485h6"/>
<path stroke="#2008ff" d="M1114 485h6"/>
<path stroke="#2a06ff" d="M1120 485h6"/>
<path stroke="#3503ff" d="M1126 485h6"/>
<path stroke="#4000ff" d="M1132 485h6"/>
<path stroke="#4b00ff" d="M1138 485h6"/>
<path stroke="#5700ff" d="M1144 485h6"/>
<path stroke="#6300ff" d="M1150 485h6"/>
<path stroke="#6f00ff" d="M1156 485h6"/>
<path stroke="#000fff" d="M1084 491h6"/>
<path stroke="#000cff" d="M1090 491h6"/>
<path stroke="#050aff" d="M1096 491h6"/>
<path stroke="#0e07ff" d="M1102 491h6"/>
<path stroke="#1805ff" d="M1108 491h6"/>
<path stroke="#2302ff" d="M1114 491h6"/>
<path stroke="#2d00ff" d="M1120 491h6"/>
<path stroke="#3800ff" d="M1126 491h6"/>
<path stroke="#4300ff" d="M1132 491h6"/>
<path stroke="#4e00ff" d="M1138 491h6"/>
<path stroke="#5900ff" d="M1144 491h6"/>
<path stroke="#0009ff" d="M1084 497h6"/>
<path stroke="#0006ff" d="M1090 497h6"/>
<path stroke="#0804ff" d="M1096 497h6"/>
<path stroke="#1201ff" d="M1102 497h6"/>
<path stroke="#1b00ff" d="M1108 497h6"/>
<path stroke="#2600ff" d="M1114 497h6"/>
<path stroke="#3000ff" d="M1120 497h6"/>
<path stroke="#3a00ff" d="M1126 497h6"/>
<path stroke="#4500ff" d="M1132 497h6"/>
<path stroke="#0005ff" d="M1078 503h6"/>
<path stroke="#0003ff" d="M1084 503h6"/>
<path stroke="#0200ff" d="M1090 503h6"/>
<path stroke="#0b00ff" d="M1096 503h6"/>
<path stroke="#1500ff" d="M1102 503h6"/>
<path stroke="#1e00ff" d="M1108 503h6"/>
<path stroke="#2800ff" d="M1114 503h6"/>
<path stroke="#0000ff" d="M1084 509h6"/>
<path stroke="#0500ff" d="M1090 509h6"/>
<path stroke="#0e00ff" d="M1096 509h6"/>
<path stroke="#1800ff" d="M1102 509h6"/>
</g></g>
<path d="M980.5 540.0V47.6H1427M1608.3 229.8V540.0" fill="none" stroke="#9e9e9e" stroke-width="1.5"/>
<line x1="979.8" y1="540.0" x2="1609.0" y2="540.0" stroke="#9e9e9e" stroke-width="1.5"/>
<line x1="974.5" y1="540.0" x2="980.5" y2="540.0" stroke="#9e9e9e" stroke-width="1.3"/>
<text x="974.5" y="545.5" font-size="15" text-anchor="end" fill="#dcdcdc">0</text>
<line x1="980.3" y1="540.0" x2="980.3" y2="545.0" stroke="#9e9e9e" stroke-width="1.3"/>
<text x="980.3" y="561" font-size="15" text-anchor="middle" fill="#dcdcdc">0</text>
<line x1="974.5" y1="481.55" x2="980.5" y2="481.55" stroke="#9e9e9e" stroke-width="1.3"/>
<text x="974.5" y="487.05" font-size="15" text-anchor="end" fill="#dcdcdc">0,1</text>
<line x1="1055.07" y1="540.0" x2="1055.07" y2="545.0" stroke="#9e9e9e" stroke-width="1.3"/>
<text x="1055.07" y="561" font-size="15" text-anchor="middle" fill="#dcdcdc">0,1</text>
<line x1="974.5" y1="423.1" x2="980.5" y2="423.1" stroke="#9e9e9e" stroke-width="1.3"/>
<text x="974.5" y="428.6" font-size="15" text-anchor="end" fill="#dcdcdc">0,2</text>
<line x1="1129.84" y1="540.0" x2="1129.84" y2="545.0" stroke="#9e9e9e" stroke-width="1.3"/>
<text x="1129.84" y="561" font-size="15" text-anchor="middle" fill="#dcdcdc">0,2</text>
<line x1="974.5" y1="364.65" x2="980.5" y2="364.65" stroke="#9e9e9e" stroke-width="1.3"/>
<text x="974.5" y="370.15" font-size="15" text-anchor="end" fill="#dcdcdc">0,3</text>
<line x1="1204.61" y1="540.0" x2="1204.61" y2="545.0" stroke="#9e9e9e" stroke-width="1.3"/>
<text x="1204.61" y="561" font-size="15" text-anchor="middle" fill="#dcdcdc">0,3</text>
<line x1="974.5" y1="306.2" x2="980.5" y2="306.2" stroke="#9e9e9e" stroke-width="1.3"/>
<text x="974.5" y="311.7" font-size="15" text-anchor="end" fill="#dcdcdc">0,4</text>
<line x1="1279.38" y1="540.0" x2="1279.38" y2="545.0" stroke="#9e9e9e" stroke-width="1.3"/>
<text x="1279.38" y="561" font-size="15" text-anchor="middle" fill="#dcdcdc">0,4</text>
<line x1="974.5" y1="247.75" x2="980.5" y2="247.75" stroke="#9e9e9e" stroke-width="1.3"/>
<text x="974.5" y="253.25" font-size="15" text-anchor="end" fill="#dcdcdc">0,5</text>
<line x1="1354.15" y1="540.0" x2="1354.15" y2="545.0" stroke="#9e9e9e" stroke-width="1.3"/>
<text x="1354.15" y="561" font-size="15" text-anchor="middle" fill="#dcdcdc">0,5</text>
<line x1="974.5" y1="189.3" x2="980.5" y2="189.3" stroke="#9e9e9e" stroke-width="1.3"/>
<text x="974.5" y="194.8" font-size="15" text-anchor="end" fill="#dcdcdc">0,6</text>
<line x1="1428.92" y1="540.0" x2="1428.92" y2="545.0" stroke="#9e9e9e" stroke-width="1.3"/>
<text x="1428.92" y="561" font-size="15" text-anchor="middle" fill="#dcdcdc">0,6</text>
<line x1="974.5" y1="130.85000000000002" x2="980.5" y2="130.85000000000002" stroke="#9e9e9e" stroke-width="1.3"/>
<text x="974.5" y="136.35000000000002" font-size="15" text-anchor="end" fill="#dcdcdc">0,7</text>
<line x1="1503.69" y1="540.0" x2="1503.69" y2="545.0" stroke="#9e9e9e" stroke-width="1.3"/>
<text x="1503.69" y="561" font-size="15" text-anchor="middle" fill="#dcdcdc">0,7</text>
<line x1="974.5" y1="72.39999999999998" x2="980.5" y2="72.39999999999998" stroke="#9e9e9e" stroke-width="1.3"/>
<text x="974.5" y="77.89999999999998" font-size="15" text-anchor="end" fill="#dcdcdc">0,8</text>
<line x1="1578.46" y1="540.0" x2="1578.46" y2="545.0" stroke="#9e9e9e" stroke-width="1.3"/>
<text x="1578.46" y="561" font-size="15" text-anchor="middle" fill="#dcdcdc">0,8</text>
<text x="1281.5" y="43.3" font-size="14" text-anchor="middle" textLength="74" lengthAdjust="spacingAndGlyphs" fill="#dcdcdc">CIE 1931 xy</text>
<rect x="1255.2" y="339.6" width="12.7" height="12.7" fill="none" stroke="#fff" stroke-width="1.35"/>
<rect x="1305.8" y="339.6" width="12.7" height="12.7" fill="none" stroke="#fff" stroke-width="1.35"/>
<rect x="1350.1" y="339.6" width="12.7" height="12.7" fill="none" stroke="#fff" stroke-width="1.35"/>
<rect x="1397.6" y="339.6" width="12.7" height="12.7" fill="none" stroke="#fff" stroke-width="1.35"/>
<rect x="1452.2" y="339.6" width="12.7" height="12.7" fill="none" stroke="#fff" stroke-width="1.35"/>
<rect x="1205.0" y="308.5" width="12.7" height="12.7" fill="none" stroke="#fff" stroke-width="1.35"/>
<rect x="1203.8" y="276.6" width="12.7" height="12.7" fill="none" stroke="#fff" stroke-width="1.35"/>
<rect x="1201.2" y="246.2" width="12.7" height="12.7" fill="none" stroke="#fff" stroke-width="1.35"/>
<rect x="1199.8" y="216.2" width="12.7" height="12.7" fill="none" stroke="#fff" stroke-width="1.35"/>
<rect x="1197.2" y="181.7" width="12.7" height="12.7" fill="none" stroke="#fff" stroke-width="1.35"/>
<rect x="1223.8" y="318.9" width="12.7" height="12.7" fill="none" stroke="#fff" stroke-width="1.35"/>
<rect x="1239.7" y="298.1" width="12.7" height="12.7" fill="none" stroke="#fff" stroke-width="1.35"/>
<rect x="1255.2" y="276.9" width="12.7" height="12.7" fill="none" stroke="#fff" stroke-width="1.35"/>
<rect x="1270.1" y="257.9" width="12.7" height="12.7" fill="none" stroke="#fff" stroke-width="1.35"/>
<rect x="1287.2" y="237.1" width="12.7" height="12.7" fill="none" stroke="#fff" stroke-width="1.35"/>
<rect x="1194.6" y="339.9" width="12.7" height="12.7" fill="none" stroke="#fff" stroke-width="1.35"/>
<rect x="1181.5" y="339.9" width="12.7" height="12.7" fill="none" stroke="#fff" stroke-width="1.35"/>
<rect x="1168.2" y="339.9" width="12.7" height="12.7" fill="none" stroke="#fff" stroke-width="1.35"/>
<rect x="1154.8" y="339.9" width="12.7" height="12.7" fill="none" stroke="#fff" stroke-width="1.35"/>
<rect x="1141.4" y="339.9" width="12.7" height="12.7" fill="none" stroke="#fff" stroke-width="1.35"/>
<rect x="1182.7" y="371.9" width="12.7" height="12.7" fill="none" stroke="#fff" stroke-width="1.35"/>
<rect x="1159.1" y="402.5" width="12.7" height="12.7" fill="none" stroke="#fff" stroke-width="1.35"/>
<rect x="1135.0" y="433.0" width="12.7" height="12.7" fill="none" stroke="#fff" stroke-width="1.35"/>
<rect x="1111.7" y="463.2" width="12.7" height="12.7" fill="none" stroke="#fff" stroke-width="1.35"/>
<rect x="1084.9" y="498.0" width="12.7" height="12.7" fill="none" stroke="#fff" stroke-width="1.35"/>
<rect x="1209.2" y="359.8" width="12.7" height="12.7" fill="none" stroke="#fff" stroke-width="1.35"/>
<rect x="1210.8" y="380.9" width="12.7" height="12.7" fill="none" stroke="#fff" stroke-width="1.35"/>
<rect x="1210.9" y="399.8" width="12.7" height="12.7" fill="none" stroke="#fff" stroke-width="1.35"/>
<rect x="1211.7" y="421.0" width="12.7" height="12.7" fill="none" stroke="#fff" stroke-width="1.35"/>
<rect x="1213.2" y="441.9" width="12.7" height="12.7" fill="none" stroke="#fff" stroke-width="1.35"/>
<rect x="1207.8" y="339.9" width="12.5" height="12.5" fill="none" stroke="#000" stroke-width="1.6"/>
<circle cx="1237.9" cy="347.6" r="3.9" fill="#c09696" stroke="#000" stroke-width="1.2"/>
<circle cx="1277.5" cy="343.9" r="3.9" fill="#c07d7d" stroke="#000" stroke-width="1.2"/>
<circle cx="1319.5" cy="338.4" r="3.9" fill="#c06464" stroke="#000" stroke-width="1.2"/>
<circle cx="1360.6" cy="333.6" r="3.9" fill="#c04141" stroke="#000" stroke-width="1.2"/>
<circle cx="1412.5" cy="328.0" r="3.9" fill="#c00505" stroke="#000" stroke-width="1.2"/>
<circle cx="1211.5" cy="327.7" r="3.9" fill="#96c096" stroke="#000" stroke-width="1.2"/>
<circle cx="1218.0" cy="301.3" r="3.9" fill="#7dc07d" stroke="#000" stroke-width="1.2"/>
<circle cx="1224.5" cy="271.3" r="3.9" fill="#64c064" stroke="#000" stroke-width="1.2"/>
<circle cx="1232.4" cy="235.3" r="3.9" fill="#41c041" stroke="#000" stroke-width="1.2"/>
<circle cx="1240.3" cy="203.3" r="3.9" fill="#05c005" stroke="#000" stroke-width="1.2"/>
<circle cx="1222.0" cy="334.4" r="3.9" fill="#c0c096" stroke="#000" stroke-width="1.2"/>
<circle cx="1239.4" cy="314.4" r="3.9" fill="#c0c07d" stroke="#000" stroke-width="1.2"/>
<circle cx="1257.5" cy="293.4" r="3.9" fill="#c0c064" stroke="#000" stroke-width="1.2"/>
<circle cx="1278.4" cy="269.2" r="3.9" fill="#c0c041" stroke="#000" stroke-width="1.2"/>
<circle cx="1299.8" cy="244.3" r="3.9" fill="#c0c005" stroke="#000" stroke-width="1.2"/>
<circle cx="1197.1" cy="354.4" r="3.9" fill="#96c0c0" stroke="#000" stroke-width="1.2"/>
<circle cx="1189.0" cy="356.1" r="3.9" fill="#7dc0c0" stroke="#000" stroke-width="1.2"/>
<circle cx="1179.6" cy="356.1" r="3.9" fill="#64c0c0" stroke="#000" stroke-width="1.2"/>
<circle cx="1169.7" cy="357.3" r="3.9" fill="#41c0c0" stroke="#000" stroke-width="1.2"/>
<circle cx="1159.9" cy="358.4" r="3.9" fill="#05c0c0" stroke="#000" stroke-width="1.2"/>
<circle cx="1183.4" cy="378.4" r="3.9" fill="#9696c0" stroke="#000" stroke-width="1.2"/>
<circle cx="1162.5" cy="402.5" r="3.9" fill="#7d7dc0" stroke="#000" stroke-width="1.2"/>
<circle cx="1141.4" cy="427.3" r="3.9" fill="#6464c0" stroke="#000" stroke-width="1.2"/>
<circle cx="1120.4" cy="452.5" r="3.9" fill="#4141c0" stroke="#000" stroke-width="1.2"/>
<circle cx="1101.9" cy="472.2" r="3.9" fill="#0505c0" stroke="#000" stroke-width="1.2"/>
<circle cx="1202.3" cy="368.9" r="3.9" fill="#c096c0" stroke="#000" stroke-width="1.2"/>
<circle cx="1198.5" cy="384.9" r="3.9" fill="#c07dc0" stroke="#000" stroke-width="1.2"/>
<circle cx="1195.6" cy="399.5" r="3.9" fill="#c064c0" stroke="#000" stroke-width="1.2"/>
<circle cx="1190.4" cy="416.3" r="3.9" fill="#c041c0" stroke="#000" stroke-width="1.2"/>
<circle cx="1187.5" cy="432.5" r="3.9" fill="#c005c0" stroke="#000" stroke-width="1.2"/>
<circle cx="1203.4" cy="356.1" r="4.3" fill="#fff"/>
<rect x="1427" y="46.8" width="182.2" height="183" fill="#222222"/>
<g clip-path="url(#ci)"><g filter="url(#bi)" stroke-width="16.6" fill="none"><path stroke="#5f9900" d="M1398.3 23.6h16"/>
<path stroke="#639900" d="M1414.3 23.6h16"/>
<path stroke="#689900" d="M1430.3 23.6h16"/>
<path stroke="#6d9900" d="M1446.3 23.6h16"/>
<path stroke="#729900" d="M1462.3 23.6h16"/>
<path stroke="#779900" d="M1478.3 23.6h16"/>
<path stroke="#7c9900" d="M1494.3 23.6h16"/>
<path stroke="#819900" d="M1510.3 23.6h16"/>
<path stroke="#879900" d="M1526.3 23.6h16"/>
<path stroke="#8c9900" d="M1542.3 23.6h16"/>
<path stroke="#919900" d="M1558.3 23.6h16"/>
<path stroke="#979900" d="M1574.3 23.6h16"/>
<path stroke="#999600" d="M1590.3 23.6h16"/>
<path stroke="#999000" d="M1606.3 23.6h16"/>
<path stroke="#998b00" d="M1622.3 23.6h16"/>
<path stroke="#998700" d="M1638.3 23.6h16"/>
<path stroke="#619900" d="M1398.3 39.6h16"/>
<path stroke="#669900" d="M1414.3 39.6h16"/>
<path stroke="#6b9900" d="M1430.3 39.6h16"/>
<path stroke="#709900" d="M1446.3 39.6h16"/>
<path stroke="#759900" d="M1462.3 39.6h16"/>
<path stroke="#7a9900" d="M1478.3 39.6h16"/>
<path stroke="#7f9900" d="M1494.3 39.6h16"/>
<path stroke="#849900" d="M1510.3 39.6h16"/>
<path stroke="#8a9900" d="M1526.3 39.6h16"/>
<path stroke="#8f9900" d="M1542.3 39.6h16"/>
<path stroke="#959900" d="M1558.3 39.6h16"/>
<path stroke="#999800" d="M1574.3 39.6h16"/>
<path stroke="#999200" d="M1590.3 39.6h16"/>
<path stroke="#998d00" d="M1606.3 39.6h16"/>
<path stroke="#998800" d="M1622.3 39.6h16"/>
<path stroke="#998400" d="M1638.3 39.6h16"/>
<path stroke="#639901" d="M1398.3 55.6h16"/>
<path stroke="#689900" d="M1414.3 55.6h16"/>
<path stroke="#6d9900" d="M1430.3 55.6h16"/>
<path stroke="#729900" d="M1446.3 55.6h16"/>
<path stroke="#789900" d="M1462.3 55.6h16"/>
<path stroke="#7d9900" d="M1478.3 55.6h16"/>
<path stroke="#829900" d="M1494.3 55.6h16"/>
<path stroke="#879900" d="M1510.3 55.6h16"/>
<path stroke="#8d9900" d="M1526.3 55.6h16"/>
<path stroke="#929900" d="M1542.3 55.6h16"/>
<path stroke="#989900" d="M1558.3 55.6h16"/>
<path stroke="#999400" d="M1574.3 55.6h16"/>
<path stroke="#998f00" d="M1590.3 55.6h16"/>
<path stroke="#998a00" d="M1606.3 55.6h16"/>
<path stroke="#998500" d="M1622.3 55.6h16"/>
<path stroke="#998100" d="M1638.3 55.6h16"/>
<path stroke="#669902" d="M1398.3 71.6h16"/>
<path stroke="#6b9901" d="M1414.3 71.6h16"/>
<path stroke="#709900" d="M1430.3 71.6h16"/>
<path stroke="#759900" d="M1446.3 71.6h16"/>
<path stroke="#7a9900" d="M1462.3 71.6h16"/>
<path stroke="#809900" d="M1478.3 71.6h16"/>
<path stroke="#859900" d="M1494.3 71.6h16"/>
<path stroke="#8b9900" d="M1510.3 71.6h16"/>
<path stroke="#909900" d="M1526.3 71.6h16"/>
<path stroke="#969900" d="M1542.3 71.6h16"/>
<path stroke="#999600" d="M1558.3 71.6h16"/>
<path stroke="#999100" d="M1574.3 71.6h16"/>
<path stroke="#998c00" d="M1590.3 71.6h16"/>
<path stroke="#998700" d="M1606.3 71.6h16"/>
<path stroke="#998200" d="M1622.3 71.6h16"/>
<path stroke="#997e00" d="M1638.3 71.6h16"/>
<path stroke="#699904" d="M1398.3 87.6h16"/>
<path stroke="#6e9903" d="M1414.3 87.6h16"/>
<path stroke="#739901" d="M1430.3 87.6h16"/>
<path stroke="#789900" d="M1446.3 87.6h16"/>
<path stroke="#7d9900" d="M1462.3 87.6h16"/>
<path stroke="#839900" d="M1478.3 87.6h16"/>
<path stroke="#889900" d="M1494.3 87.6h16"/>
<path stroke="#8e9900" d="M1510.3 87.6h16"/>
<path stroke="#949900" d="M1526.3 87.6h16"/>
<path stroke="#999900" d="M1542.3 87.6h16"/>
<path stroke="#999300" d="M1558.3 87.6h16"/>
<path stroke="#998e00" d="M1574.3 87.6h16"/>
<path stroke="#998900" d="M1590.3 87.6h16"/>
<path stroke="#998400" d="M1606.3 87.6h16"/>
<path stroke="#998000" d="M1622.3 87.6h16"/>
<path stroke="#997b00" d="M1638.3 87.6h16"/>
<path stroke="#6b9905" d="M1398.3 103.6h16"/>
<path stroke="#709904" d="M1414.3 103.6h16"/>
<path stroke="#769903" d="M1430.3 103.6h16"/>
<path stroke="#7b9902" d="M1446.3 103.6h16"/>
<path stroke="#809901" d="M1462.3 103.6h16"/>
<path stroke="#869900" d="M1478.3 103.6h16"/>
<path stroke="#8c9900" d="M1494.3 103.6h16"/>
<path stroke="#919900" d="M1510.3 103.6h16"/>
<path stroke="#979900" d="M1526.3 103.6h16"/>
<path stroke="#999500" d="M1542.3 103.6h16"/>
<path stroke="#999000" d="M1558.3 103.6h16"/>
<path stroke="#998b00" d="M1574.3 103.6h16"/>
<path stroke="#998600" d="M1590.3 103.6h16"/>
<path stroke="#998100" d="M1606.3 103.6h16"/>
<path stroke="#997d00" d="M1622.3 103.6h16"/>
<path stroke="#997900" d="M1638.3 103.6h16"/>
<path stroke="#6e9907" d="M1398.3 119.6h16"/>
<path stroke="#739906" d="M1414.3 119.6h16"/>
<path stroke="#799904" d="M1430.3 119.6h16"/>
<path stroke="#7e9903" d="M1446.3 119.6h16"/>
<path stroke="#849902" d="M1462.3 119.6h16"/>
<path stroke="#899901" d="M1478.3 119.6h16"/>
<path stroke="#8f9900" d="M1494.3 119.6h16"/>
<path stroke="#959900" d="M1510.3 119.6h16"/>
<path stroke="#999700" d="M1526.3 119.6h16"/>
<path stroke="#999200" d="M1542.3 119.6h16"/>
<path stroke="#998c00" d="M1558.3 119.6h16"/>
<path stroke="#998700" d="M1574.3 119.6h16"/>
<path stroke="#998300" d="M1590.3 119.6h16"/>
<path stroke="#997e00" d="M1606.3 119.6h16"/>
<path stroke="#997a00" d="M1622.3 119.6h16"/>
<path stroke="#997600" d="M1638.3 119.6h16"/>
<path stroke="#719908" d="M1398.3 135.6h16"/>
<path stroke="#769907" d="M1414.3 135.6h16"/>
<path stroke="#7c9906" d="M1430.3 135.6h16"/>
<path stroke="#819905" d="M1446.3 135.6h16"/>
<path stroke="#879904" d="M1462.3 135.6h16"/>
<path stroke="#8c9902" d="M1478.3 135.6h16"/>
<path stroke="#929901" d="M1494.3 135.6h16"/>
<path stroke="#989900" d="M1510.3 135.6h16"/>
<path stroke="#999400" d="M1526.3 135.6h16"/>
<path stroke="#998e00" d="M1542.3 135.6h16"/>
<path stroke="#998900" d="M1558.3 135.6h16"/>
<path stroke="#998400" d="M1574.3 135.6h16"/>
<path stroke="#998000" d="M1590.3 135.6h16"/>
<path stroke="#997b00" d="M1606.3 135.6h16"/>
<path stroke="#997700" d="M1622.3 135.6h16"/>
<path stroke="#997300" d="M1638.3 135.6h16"/>
<path stroke="#74990a" d="M1398.3 151.6h16"/>
<path stroke="#799909" d="M1414.3 151.6h16"/>
<path stroke="#7f9908" d="M1430.3 151.6h16"/>
<path stroke="#849906" d="M1446.3 151.6h16"/>
<path stroke="#8a9905" d="M1462.3 151.6h16"/>
<path stroke="#909904" d="M1478.3 151.6h16"/>
<path stroke="#969903" d="M1494.3 151.6h16"/>
<path stroke="#999602" d="M1510.3 151.6h16"/>
<path stroke="#999000" d="M1526.3 151.6h16"/>
<path stroke="#998b00" d="M1542.3 151.6h16"/>
<path stroke="#998600" d="M1558.3 151.6h16"/>
<path stroke="#998100" d="M1574.3 151.6h16"/>
<path stroke="#997d00" d="M1590.3 151.6h16"/>
<path stroke="#997800" d="M1606.3 151.6h16"/>
<path stroke="#997400" d="M1622.3 151.6h16"/>
<path stroke="#997000" d="M1638.3 151.6h16"/>
<path stroke="#77990c" d="M1398.3 167.6h16"/>
<path stroke="#7c990a" d="M1414.3 167.6h16"/>
<path stroke="#829909" d="M1430.3 167.6h16"/>
<path stroke="#889908" d="M1446.3 167.6h16"/>
<path stroke="#8d9907" d="M1462.3 167.6h16"/>
<path stroke="#939906" d="M1478.3 167.6h16"/>
<path stroke="#999904" d="M1494.3 167.6h16"/>
<path stroke="#999303" d="M1510.3 167.6h16"/>
<path stroke="#998d02" d="M1526.3 167.6h16"/>
<path stroke="#998801" d="M1542.3 167.6h16"/>
<path stroke="#998300" d="M1558.3 167.6h16"/>
<path stroke="#997e00" d="M1574.3 167.6h16"/>
<path stroke="#997a00" d="M1590.3 167.6h16"/>
<path stroke="#997600" d="M1606.3 167.6h16"/>
<path stroke="#997200" d="M1622.3 167.6h16"/>
<path stroke="#996e00" d="M1638.3 167.6h16"/>
<path stroke="#7a990d" d="M1398.3 183.6h16"/>
<path stroke="#7f990c" d="M1414.3 183.6h16"/>
<path stroke="#85990b" d="M1430.3 183.6h16"/>
<path stroke="#8b990a" d="M1446.3 183.6h16"/>
<path stroke="#919909" d="M1462.3 183.6h16"/>
<path stroke="#979907" d="M1478.3 183.6h16"/>
<path stroke="#999506" d="M1494.3 183.6h16"/>
<path stroke="#998f05" d="M1510.3 183.6h16"/>
<path stroke="#998a03" d="M1526.3 183.6h16"/>
<path stroke="#998502" d="M1542.3 183.6h16"/>
<path stroke="#998001" d="M1558.3 183.6h16"/>
<path stroke="#997b00" d="M1574.3 183.6h16"/>
<path stroke="#997700" d="M1590.3 183.6h16"/>
<path stroke="#997300" d="M1606.3 183.6h16"/>
<path stroke="#996f00" d="M1622.3 183.6h16"/>
<path stroke="#996b00" d="M1638.3 183.6h16"/>
<path stroke="#7d990f" d="M1398.3 199.6h16"/>
<path stroke="#83990e" d="M1414.3 199.6h16"/>
<path stroke="#88990d" d="M1430.3 199.6h16"/>
<path stroke="#8e990c" d="M1446.3 199.6h16"/>
<path stroke="#95990a" d="M1462.3 199.6h16"/>
<path stroke="#999709" d="M1478.3 199.6h16"/>
<path stroke="#999108" d="M1494.3 199.6h16"/>
<path stroke="#998c06" d="M1510.3 199.6h16"/>
<path stroke="#998605" d="M1526.3 199.6h16"/>
<path stroke="#998203" d="M1542.3 199.6h16"/>
<path stroke="#997d02" d="M1558.3 199.6h16"/>
<path stroke="#997801" d="M1574.3 199.6h16"/>
<path stroke="#997400" d="M1590.3 199.6h16"/>
<path stroke="#997000" d="M1606.3 199.6h16"/>
<path stroke="#996c00" d="M1622.3 199.6h16"/>
<path stroke="#996900" d="M1638.3 199.6h16"/>
<path stroke="#809911" d="M1398.3 215.6h16"/>
<path stroke="#869910" d="M1414.3 215.6h16"/>
<path stroke="#8c990f" d="M1430.3 215.6h16"/>
<path stroke="#92990d" d="M1446.3 215.6h16"/>
<path stroke="#98990c" d="M1462.3 215.6h16"/>
<path stroke="#99940b" d="M1478.3 215.6h16"/>
<path stroke="#998e09" d="M1494.3 215.6h16"/>
<path stroke="#998808" d="M1510.3 215.6h16"/>
<path stroke="#998306" d="M1526.3 215.6h16"/>
<path stroke="#997e05" d="M1542.3 215.6h16"/>
<path stroke="#997a04" d="M1558.3 215.6h16"/>
<path stroke="#997602" d="M1574.3 215.6h16"/>
<path stroke="#997101" d="M1590.3 215.6h16"/>
<path stroke="#996e00" d="M1606.3 215.6h16"/>
<path stroke="#996a00" d="M1622.3 215.6h16"/>
<path stroke="#996600" d="M1638.3 215.6h16"/>
<path stroke="#839913" d="M1398.3 231.6h16"/>
<path stroke="#899912" d="M1414.3 231.6h16"/>
<path stroke="#909911" d="M1430.3 231.6h16"/>
<path stroke="#96990f" d="M1446.3 231.6h16"/>
<path stroke="#99960e" d="M1462.3 231.6h16"/>
<path stroke="#99900c" d="M1478.3 231.6h16"/>
<path stroke="#998a0b" d="M1494.3 231.6h16"/>
<path stroke="#998509" d="M1510.3 231.6h16"/>
<path stroke="#998008" d="M1526.3 231.6h16"/>
<path stroke="#997b06" d="M1542.3 231.6h16"/>
<path stroke="#997705" d="M1558.3 231.6h16"/>
<path stroke="#997304" d="M1574.3 231.6h16"/>
<path stroke="#996f03" d="M1590.3 231.6h16"/>
<path stroke="#996b02" d="M1606.3 231.6h16"/>
<path stroke="#996701" d="M1622.3 231.6h16"/>
<path stroke="#996400" d="M1638.3 231.6h16"/>
<path stroke="#879915" d="M1398.3 247.6h16"/>
<path stroke="#8d9914" d="M1414.3 247.6h16"/>
<path stroke="#939913" d="M1430.3 247.6h16"/>
<path stroke="#999811" d="M1446.3 247.6h16"/>
<path stroke="#99920f" d="M1462.3 247.6h16"/>
<path stroke="#998c0e" d="M1478.3 247.6h16"/>
<path stroke="#99870c" d="M1494.3 247.6h16"/>
<path stroke="#99820a" d="M1510.3 247.6h16"/>
<path stroke="#997d09" d="M1526.3 247.6h16"/>
<path stroke="#997808" d="M1542.3 247.6h16"/>
<path stroke="#997406" d="M1558.3 247.6h16"/>
<path stroke="#997005" d="M1574.3 247.6h16"/>
<path stroke="#996c04" d="M1590.3 247.6h16"/>
<path stroke="#996803" d="M1606.3 247.6h16"/>
<path stroke="#996502" d="M1622.3 247.6h16"/>
<path stroke="#996101" d="M1638.3 247.6h16"/>
<path stroke="#8a9917" d="M1398.3 263.6h16"/>
<path stroke="#919916" d="M1414.3 263.6h16"/>
<path stroke="#979915" d="M1430.3 263.6h16"/>
<path stroke="#999513" d="M1446.3 263.6h16"/>
<path stroke="#998f11" d="M1462.3 263.6h16"/>
<path stroke="#99890f" d="M1478.3 263.6h16"/>
<path stroke="#99840d" d="M1494.3 263.6h16"/>
<path stroke="#997f0c" d="M1510.3 263.6h16"/>
<path stroke="#997a0a" d="M1526.3 263.6h16"/>
<path stroke="#997509" d="M1542.3 263.6h16"/>
<path stroke="#997108" d="M1558.3 263.6h16"/>
<path stroke="#996d06" d="M1574.3 263.6h16"/>
<path stroke="#996905" d="M1590.3 263.6h16"/>
<path stroke="#996604" d="M1606.3 263.6h16"/>
<path stroke="#996203" d="M1622.3 263.6h16"/>
<path stroke="#995f02" d="M1638.3 263.6h16"/></g>
<g clip-path="url(#cit)"><g filter="url(#bi)" stroke-width="16.6" fill="none"><path stroke="#9eff00" d="M1398.3 23.6h16"/>
<path stroke="#a6ff00" d="M1414.3 23.6h16"/>
<path stroke="#aeff00" d="M1430.3 23.6h16"/>
<path stroke="#b6ff00" d="M1446.3 23.6h16"/>
<path stroke="#beff00" d="M1462.3 23.6h16"/>
<path stroke="#c7ff00" d="M1478.3 23.6h16"/>
<path stroke="#cfff00" d="M1494.3 23.6h16"/>
<path stroke="#d8ff00" d="M1510.3 23.6h16"/>
<path stroke="#e0ff00" d="M1526.3 23.6h16"/>
<path stroke="#e9ff00" d="M1542.3 23.6h16"/>
<path stroke="#f2ff00" d="M1558.3 23.6h16"/>
<path stroke="#fcff00" d="M1574.3 23.6h16"/>
<path stroke="#fff900" d="M1590.3 23.6h16"/>
<path stroke="#fff000" d="M1606.3 23.6h16"/>
<path stroke="#ffe800" d="M1622.3 23.6h16"/>
<path stroke="#ffe000" d="M1638.3 23.6h16"/>
<path stroke="#a2ff00" d="M1398.3 39.6h16"/>
<path stroke="#aaff00" d="M1414.3 39.6h16"/>
<path stroke="#b2ff00" d="M1430.3 39.6h16"/>
<path stroke="#baff00" d="M1446.3 39.6h16"/>
<path stroke="#c3ff00" d="M1462.3 39.6h16"/>
<path stroke="#cbff00" d="M1478.3 39.6h16"/>
<path stroke="#d4ff00" d="M1494.3 39.6h16"/>
<path stroke="#ddff00" d="M1510.3 39.6h16"/>
<path stroke="#e6ff00" d="M1526.3 39.6h16"/>
<path stroke="#efff00" d="M1542.3 39.6h16"/>
<path stroke="#f8ff00" d="M1558.3 39.6h16"/>
<path stroke="#fffd00" d="M1574.3 39.6h16"/>
<path stroke="#fff400" d="M1590.3 39.6h16"/>
<path stroke="#ffeb00" d="M1606.3 39.6h16"/>
<path stroke="#ffe300" d="M1622.3 39.6h16"/>
<path stroke="#ffdc00" d="M1638.3 39.6h16"/>
<path stroke="#a6ff01" d="M1398.3 55.6h16"/>
<path stroke="#aeff00" d="M1414.3 55.6h16"/>
<path stroke="#b6ff00" d="M1430.3 55.6h16"/>
<path stroke="#bfff00" d="M1446.3 55.6h16"/>
<path stroke="#c7ff00" d="M1462.3 55.6h16"/>
<path stroke="#d0ff00" d="M1478.3 55.6h16"/>
<path stroke="#d9ff00" d="M1494.3 55.6h16"/>
<path stroke="#e2ff00" d="M1510.3 55.6h16"/>
<path stroke="#ebff00" d="M1526.3 55.6h16"/>
<path stroke="#f4ff00" d="M1542.3 55.6h16"/>
<path stroke="#feff00" d="M1558.3 55.6h16"/>
<path stroke="#fff700" d="M1574.3 55.6h16"/>
<path stroke="#ffee00" d="M1590.3 55.6h16"/>
<path stroke="#ffe600" d="M1606.3 55.6h16"/>
<path stroke="#ffde00" d="M1622.3 55.6h16"/>
<path stroke="#ffd700" d="M1638.3 55.6h16"/>
<path stroke="#aaff04" d="M1398.3 71.6h16"/>
<path stroke="#b2ff02" d="M1414.3 71.6h16"/>
<path stroke="#bbff00" d="M1430.3 71.6h16"/>
<path stroke="#c3ff00" d="M1446.3 71.6h16"/>
<path stroke="#ccff00" d="M1462.3 71.6h16"/>
<path stroke="#d5ff00" d="M1478.3 71.6h16"/>
<path stroke="#deff00" d="M1494.3 71.6h16"/>
<path stroke="#e7ff00" d="M1510.3 71.6h16"/>
<path stroke="#f0ff00" d="M1526.3 71.6h16"/>
<path stroke="#faff00" d="M1542.3 71.6h16"/>
<path stroke="#fffb00" d="M1558.3 71.6h16"/>
<path stroke="#fff200" d="M1574.3 71.6h16"/>
<path stroke="#ffe900" d="M1590.3 71.6h16"/>
<path stroke="#ffe100" d="M1606.3 71.6h16"/>
<path stroke="#ffd900" d="M1622.3 71.6h16"/>
<path stroke="#ffd200" d="M1638.3 71.6h16"/>
<path stroke="#aeff06" d="M1398.3 87.6h16"/>
<path stroke="#b7ff04" d="M1414.3 87.6h16"/>
<path stroke="#bfff02" d="M1430.3 87.6h16"/>
<path stroke="#c8ff00" d="M1446.3 87.6h16"/>
<path stroke="#d1ff00" d="M1462.3 87.6h16"/>
<path stroke="#daff00" d="M1478.3 87.6h16"/>
<path stroke="#e3ff00" d="M1494.3 87.6h16"/>
<path stroke="#ecff00" d="M1510.3 87.6h16"/>
<path stroke="#f6ff00" d="M1526.3 87.6h16"/>
<path stroke="#fffe00" d="M1542.3 87.6h16"/>
<path stroke="#fff500" d="M1558.3 87.6h16"/>
<path stroke="#ffec00" d="M1574.3 87.6h16"/>
<path stroke="#ffe400" d="M1590.3 87.6h16"/>
<path stroke="#ffdc00" d="M1606.3 87.6h16"/>
<path stroke="#ffd500" d="M1622.3 87.6h16"/>
<path stroke="#ffcd00" d="M1638.3 87.6h16"/>
<path stroke="#b3ff09" d="M1398.3 103.6h16"/>
<path stroke="#bbff07" d="M1414.3 103.6h16"/>
<path stroke="#c4ff05" d="M1430.3 103.6h16"/>
<path stroke="#cdff03" d="M1446.3 103.6h16"/>
<path stroke="#d6ff01" d="M1462.3 103.6h16"/>
<path stroke="#dfff00" d="M1478.3 103.6h16"/>
<path stroke="#e9ff00" d="M1494.3 103.6h16"/>
<path stroke="#f2ff00" d="M1510.3 103.6h16"/>
<path stroke="#fcff00" d="M1526.3 103.6h16"/>
<path stroke="#fff900" d="M1542.3 103.6h16"/>
<path stroke="#fff000" d="M1558.3 103.6h16"/>
<path stroke="#ffe700" d="M1574.3 103.6h16"/>
<path stroke="#ffdf00" d="M1590.3 103.6h16"/>
<path stroke="#ffd700" d="M1606.3 103.6h16"/>
<path stroke="#ffd000" d="M1622.3 103.6h16"/>
<path stroke="#ffc900" d="M1638.3 103.6h16"/>
<path stroke="#b7ff0b" d="M1398.3 119.6h16"/>
<path stroke="#c0ff09" d="M1414.3 119.6h16"/>
<path stroke="#c9ff07" d="M1430.3 119.6h16"/>
<path stroke="#d2ff05" d="M1446.3 119.6h16"/>
<path stroke="#dbff03" d="M1462.3 119.6h16"/>
<path stroke="#e5ff01" d="M1478.3 119.6h16"/>
<path stroke="#eeff00" d="M1494.3 119.6h16"/>
<path stroke="#f8ff00" d="M1510.3 119.6h16"/>
<path stroke="#fffc00" d="M1526.3 119.6h16"/>
<path stroke="#fff300" d="M1542.3 119.6h16"/>
<path stroke="#ffea00" d="M1558.3 119.6h16"/>
<path stroke="#ffe200" d="M1574.3 119.6h16"/>
<path stroke="#ffda00" d="M1590.3 119.6h16"/>
<path stroke="#ffd200" d="M1606.3 119.6h16"/>
<path stroke="#ffcb00" d="M1622.3 119.6h16"/>
<path stroke="#ffc400" d="M1638.3 119.6h16"/>
<path stroke="#bcff0e" d="M1398.3 135.6h16"/>
<path stroke="#c5ff0c" d="M1414.3 135.6h16"/>
<path stroke="#ceff0a" d="M1430.3 135.6h16"/>
<path stroke="#d7ff08" d="M1446.3 135.6h16"/>
<path stroke="#e1ff06" d="M1462.3 135.6h16"/>
<path stroke="#eaff04" d="M1478.3 135.6h16"/>
<path stroke="#f4ff02" d="M1494.3 135.6h16"/>
<path stroke="#feff00" d="M1510.3 135.6h16"/>
<path stroke="#fff700" d="M1526.3 135.6h16"/>
<path stroke="#ffed00" d="M1542.3 135.6h16"/>
<path stroke="#ffe500" d="M1558.3 135.6h16"/>
<path stroke="#ffdd00" d="M1574.3 135.6h16"/>
<path stroke="#ffd500" d="M1590.3 135.6h16"/>
<path stroke="#ffcd00" d="M1606.3 135.6h16"/>
<path stroke="#ffc600" d="M1622.3 135.6h16"/>
<path stroke="#ffc000" d="M1638.3 135.6h16"/>
<path stroke="#c1ff11" d="M1398.3 151.6h16"/>
<path stroke="#caff0f" d="M1414.3 151.6h16"/>
<path stroke="#d3ff0d" d="M1430.3 151.6h16"/>
<path stroke="#ddff0b" d="M1446.3 151.6h16"/>
<path stroke="#e6ff09" d="M1462.3 151.6h16"/>
<path stroke="#f0ff07" d="M1478.3 151.6h16"/>
<path stroke="#faff05" d="M1494.3 151.6h16"/>
<path stroke="#fffa03" d="M1510.3 151.6h16"/>
<path stroke="#fff100" d="M1526.3 151.6h16"/>
<path stroke="#ffe800" d="M1542.3 151.6h16"/>
<path stroke="#ffdf00" d="M1558.3 151.6h16"/>
<path stroke="#ffd700" d="M1574.3 151.6h16"/>
<path stroke="#ffd000" d="M1590.3 151.6h16"/>
<path stroke="#ffc900" d="M1606.3 151.6h16"/>
<path stroke="#ffc200" d="M1622.3 151.6h16"/>
<path stroke="#ffbb00" d="M1638.3 151.6h16"/>
<path stroke="#c6ff13" d="M1398.3 167.6h16"/>
<path stroke="#cfff11" d="M1414.3 167.6h16"/>
<path stroke="#d8ff10" d="M1430.3 167.6h16"/>
<path stroke="#e2ff0e" d="M1446.3 167.6h16"/>
<path stroke="#ecff0c" d="M1462.3 167.6h16"/>
<path stroke="#f6ff0a" d="M1478.3 167.6h16"/>
<path stroke="#fffe07" d="M1494.3 167.6h16"/>
<path stroke="#fff405" d="M1510.3 167.6h16"/>
<path stroke="#ffeb03" d="M1526.3 167.6h16"/>
<path stroke="#ffe201" d="M1542.3 167.6h16"/>
<path stroke="#ffda00" d="M1558.3 167.6h16"/>
<path stroke="#ffd200" d="M1574.3 167.6h16"/>
<path stroke="#ffcb00" d="M1590.3 167.6h16"/>
<path stroke="#ffc400" d="M1606.3 167.6h16"/>
<path stroke="#ffbd00" d="M1622.3 167.6h16"/>
<path stroke="#ffb700" d="M1638.3 167.6h16"/>
<path stroke="#cbff16" d="M1398.3 183.6h16"/>
<path stroke="#d4ff14" d="M1414.3 183.6h16"/>
<path stroke="#deff12" d="M1430.3 183.6h16"/>
<path stroke="#e8ff10" d="M1446.3 183.6h16"/>
<path stroke="#f2ff0e" d="M1462.3 183.6h16"/>
<path stroke="#fcff0c" d="M1478.3 183.6h16"/>
<path stroke="#fff80a" d="M1494.3 183.6h16"/>
<path stroke="#ffef08" d="M1510.3 183.6h16"/>
<path stroke="#ffe605" d="M1526.3 183.6h16"/>
<path stroke="#ffdd03" d="M1542.3 183.6h16"/>
<path stroke="#ffd501" d="M1558.3 183.6h16"/>
<path stroke="#ffce00" d="M1574.3 183.6h16"/>
<path stroke="#ffc600" d="M1590.3 183.6h16"/>
<path stroke="#ffc000" d="M1606.3 183.6h16"/>
<path stroke="#ffb900" d="M1622.3 183.6h16"/>
<path stroke="#ffb300" d="M1638.3 183.6h16"/>
<path stroke="#d0ff19" d="M1398.3 199.6h16"/>
<path stroke="#daff17" d="M1414.3 199.6h16"/>
<path stroke="#e3ff15" d="M1430.3 199.6h16"/>
<path stroke="#edff13" d="M1446.3 199.6h16"/>
<path stroke="#f8ff11" d="M1462.3 199.6h16"/>
<path stroke="#fffc0f" d="M1478.3 199.6h16"/>
<path stroke="#fff20d" d="M1494.3 199.6h16"/>
<path stroke="#ffe90a" d="M1510.3 199.6h16"/>
<path stroke="#ffe008" d="M1526.3 199.6h16"/>
<path stroke="#ffd806" d="M1542.3 199.6h16"/>
<path stroke="#ffd004" d="M1558.3 199.6h16"/>
<path stroke="#ffc902" d="M1574.3 199.6h16"/>
<path stroke="#ffc200" d="M1590.3 199.6h16"/>
<path stroke="#ffbb00" d="M1606.3 199.6h16"/>
<path stroke="#ffb500" d="M1622.3 199.6h16"/>
<path stroke="#ffaf00" d="M1638.3 199.6h16"/>
<path stroke="#d5ff1c" d="M1398.3 215.6h16"/>
<path stroke="#dfff1a" d="M1414.3 215.6h16"/>
<path stroke="#e9ff18" d="M1430.3 215.6h16"/>
<path stroke="#f3ff16" d="M1446.3 215.6h16"/>
<path stroke="#feff14" d="M1462.3 215.6h16"/>
<path stroke="#fff612" d="M1478.3 215.6h16"/>
<path stroke="#ffec0f" d="M1494.3 215.6h16"/>
<path stroke="#ffe30d" d="M1510.3 215.6h16"/>
<path stroke="#ffdb0a" d="M1526.3 215.6h16"/>
<path stroke="#ffd308" d="M1542.3 215.6h16"/>
<path stroke="#ffcb06" d="M1558.3 215.6h16"/>
<path stroke="#ffc404" d="M1574.3 215.6h16"/>
<path stroke="#ffbd02" d="M1590.3 215.6h16"/>
<path stroke="#ffb700" d="M1606.3 215.6h16"/>
<path stroke="#ffb000" d="M1622.3 215.6h16"/>
<path stroke="#ffab00" d="M1638.3 215.6h16"/>
<path stroke="#dbff20" d="M1398.3 231.6h16"/>
<path stroke="#e5ff1e" d="M1414.3 231.6h16"/>
<path stroke="#efff1c" d="M1430.3 231.6h16"/>
<path stroke="#faff1a" d="M1446.3 231.6h16"/>
<path stroke="#fffa17" d="M1462.3 231.6h16"/>
<path stroke="#fff014" d="M1478.3 231.6h16"/>
<path stroke="#ffe712" d="M1494.3 231.6h16"/>
<path stroke="#ffde0f" d="M1510.3 231.6h16"/>
<path stroke="#ffd50d" d="M1526.3 231.6h16"/>
<path stroke="#ffce0a" d="M1542.3 231.6h16"/>
<path stroke="#ffc608" d="M1558.3 231.6h16"/>
<path stroke="#ffbf06" d="M1574.3 231.6h16"/>
<path stroke="#ffb804" d="M1590.3 231.6h16"/>
<path stroke="#ffb203" d="M1606.3 231.6h16"/>
<path stroke="#ffac01" d="M1622.3 231.6h16"/>
<path stroke="#ffa600" d="M1638.3 231.6h16"/>
<path stroke="#e1ff23" d="M1398.3 247.6h16"/>
<path stroke="#ebff21" d="M1414.3 247.6h16"/>
<path stroke="#f5ff1f" d="M1430.3 247.6h16"/>
<path stroke="#fffe1d" d="M1446.3 247.6h16"/>
<path stroke="#fff41a" d="M1462.3 247.6h16"/>
<path stroke="#ffea17" d="M1478.3 247.6h16"/>
<path stroke="#ffe114" d="M1494.3 247.6h16"/>
<path stroke="#ffd811" d="M1510.3 247.6h16"/>
<path stroke="#ffd00f" d="M1526.3 247.6h16"/>
<path stroke="#ffc90d" d="M1542.3 247.6h16"/>
<path stroke="#ffc10b" d="M1558.3 247.6h16"/>
<path stroke="#ffbb09" d="M1574.3 247.6h16"/>
<path stroke="#ffb407" d="M1590.3 247.6h16"/>
<path stroke="#ffae05" d="M1606.3 247.6h16"/>
<path stroke="#ffa803" d="M1622.3 247.6h16"/>
<path stroke="#ffa201" d="M1638.3 247.6h16"/>
<path stroke="#e7ff26" d="M1398.3 263.6h16"/>
<path stroke="#f1ff24" d="M1414.3 263.6h16"/>
<path stroke="#fcff22" d="M1430.3 263.6h16"/>
<path stroke="#fff81f" d="M1446.3 263.6h16"/>
<path stroke="#ffee1c" d="M1462.3 263.6h16"/>
<path stroke="#ffe419" d="M1478.3 263.6h16"/>
<path stroke="#ffdb16" d="M1494.3 263.6h16"/>
<path stroke="#ffd314" d="M1510.3 263.6h16"/>
<path stroke="#ffcb11" d="M1526.3 263.6h16"/>
<path stroke="#ffc40f" d="M1542.3 263.6h16"/>
<path stroke="#ffbd0d" d="M1558.3 263.6h16"/>
<path stroke="#ffb60b" d="M1574.3 263.6h16"/>
<path stroke="#ffb009" d="M1590.3 263.6h16"/>
<path stroke="#ffaa07" d="M1606.3 263.6h16"/>
<path stroke="#ffa405" d="M1622.3 263.6h16"/>
<path stroke="#ff9e03" d="M1638.3 263.6h16"/></g></g></g>
<rect x="1430.3" y="47.6" width="178.4" height="178.4" fill="none" stroke="#9e9e9e" stroke-width="1.4"/>
<rect x="1512.9" y="130.1" width="12.7" height="12.7" fill="none" stroke="#fff" stroke-width="1.35"/>
<circle cx="1547.9" cy="149.9" r="4.4" fill="#c8c000" stroke="#000" stroke-width="1.2"/>
<rect x="947.0" y="582.0" width="496.0" height="30.0" fill="url(#th)"/>
<rect x="947.0" y="582.0" width="16" height="30.0" fill="#000"/>
<rect x="947.0" y="612.0" width="496.0" height="27.799999999999955" fill="#404040"/>
<rect x="947.0" y="612.0" width="16" height="27.799999999999955" fill="#262626"/>
<text x="968.4" y="631.9" font-size="17" textLength="66.0" lengthAdjust="spacingAndGlyphs" fill="#f0f0f0">x: CIE31</text>
<text x="1102.5" y="631.9" font-size="17" textLength="35.3" lengthAdjust="spacingAndGlyphs" fill="#f0f0f0">0,32</text>
<text x="1171.4" y="631.9" font-size="17" textLength="35.3" lengthAdjust="spacingAndGlyphs" fill="#f0f0f0">0,35</text>
<text x="1240.6" y="631.9" font-size="17" textLength="35.3" lengthAdjust="spacingAndGlyphs" fill="#f0f0f0">0,37</text>
<text x="1309.9" y="631.9" font-size="17" textLength="35.3" lengthAdjust="spacingAndGlyphs" fill="#f0f0f0">0,40</text>
<text x="1379.2" y="631.9" font-size="17" textLength="35.3" lengthAdjust="spacingAndGlyphs" fill="#f0f0f0">0,43</text>
<rect x="947.0" y="639.8" width="496.0" height="27.700000000000045" fill="#808080"/>
<rect x="947.0" y="639.8" width="16" height="27.700000000000045" fill="#262626"/>
<text x="968.4" y="659.6999999999999" font-size="17" textLength="66.5" lengthAdjust="spacingAndGlyphs" fill="#f0f0f0">y: CIE31</text>
<text x="1102.5" y="659.6999999999999" font-size="17" textLength="35.3" lengthAdjust="spacingAndGlyphs" fill="#f0f0f0">0,35</text>
<text x="1171.4" y="659.6999999999999" font-size="17" textLength="35.3" lengthAdjust="spacingAndGlyphs" fill="#f0f0f0">0,38</text>
<text x="1240.6" y="659.6999999999999" font-size="17" textLength="35.3" lengthAdjust="spacingAndGlyphs" fill="#f0f0f0">0,42</text>
<text x="1309.9" y="659.6999999999999" font-size="17" textLength="35.3" lengthAdjust="spacingAndGlyphs" fill="#f0f0f0">0,46</text>
<text x="1379.2" y="659.6999999999999" font-size="17" textLength="35.3" lengthAdjust="spacingAndGlyphs" fill="#f0f0f0">0,50</text>
<rect x="947.0" y="667.5" width="496.0" height="27.700000000000045" fill="#404040"/>
<rect x="947.0" y="667.5" width="16" height="27.700000000000045" fill="#262626"/>
<text x="968.4" y="687.4" font-size="17" textLength="11.5" lengthAdjust="spacingAndGlyphs" fill="#f0f0f0">Y</text>
<text x="1103.1" y="687.4" font-size="17" textLength="55.9" lengthAdjust="spacingAndGlyphs" fill="#f0f0f0">146,89</text>
<text x="1172.0" y="687.4" font-size="17" textLength="55.9" lengthAdjust="spacingAndGlyphs" fill="#f0f0f0">140,89</text>
<text x="1241.1999999999998" y="687.4" font-size="17" textLength="55.9" lengthAdjust="spacingAndGlyphs" fill="#f0f0f0">135,86</text>
<text x="1310.5" y="687.4" font-size="17" textLength="55.9" lengthAdjust="spacingAndGlyphs" fill="#f0f0f0">131,41</text>
<text x="1379.8" y="687.4" font-size="17" textLength="55.9" lengthAdjust="spacingAndGlyphs" fill="#f0f0f0">127,55</text>
<rect x="947.0" y="695.2" width="496.0" height="27.59999999999991" fill="#808080"/>
<rect x="947.0" y="695.2" width="16" height="27.59999999999991" fill="#262626"/>
<text x="968.4" y="715.1" font-size="17" textLength="120.5" lengthAdjust="spacingAndGlyphs" fill="#f0f0f0">Target x:CIE31</text>
<text x="1102.5" y="715.1" font-size="17" textLength="35.3" lengthAdjust="spacingAndGlyphs" fill="#f0f0f0">0,33</text>
<text x="1171.4" y="715.1" font-size="17" textLength="35.3" lengthAdjust="spacingAndGlyphs" fill="#f0f0f0">0,36</text>
<text x="1240.6" y="715.1" font-size="17" textLength="35.3" lengthAdjust="spacingAndGlyphs" fill="#f0f0f0">0,38</text>
<text x="1309.9" y="715.1" font-size="17" textLength="35.3" lengthAdjust="spacingAndGlyphs" fill="#f0f0f0">0,40</text>
<text x="1379.2" y="715.1" font-size="17" textLength="35.3" lengthAdjust="spacingAndGlyphs" fill="#f0f0f0">0,42</text>
<rect x="947.0" y="722.8" width="496.0" height="27.5" fill="#404040"/>
<rect x="947.0" y="722.8" width="16" height="27.5" fill="#262626"/>
<text x="968.4" y="742.6999999999999" font-size="17" textLength="120.8" lengthAdjust="spacingAndGlyphs" fill="#f0f0f0">Target y:CIE31</text>
<text x="1102.5" y="742.6999999999999" font-size="17" textLength="35.3" lengthAdjust="spacingAndGlyphs" fill="#f0f0f0">0,36</text>
<text x="1171.4" y="742.6999999999999" font-size="17" textLength="35.3" lengthAdjust="spacingAndGlyphs" fill="#f0f0f0">0,40</text>
<text x="1240.6" y="742.6999999999999" font-size="17" textLength="35.3" lengthAdjust="spacingAndGlyphs" fill="#f0f0f0">0,44</text>
<text x="1309.9" y="742.6999999999999" font-size="17" textLength="35.3" lengthAdjust="spacingAndGlyphs" fill="#f0f0f0">0,47</text>
<text x="1379.2" y="742.6999999999999" font-size="17" textLength="35.3" lengthAdjust="spacingAndGlyphs" fill="#f0f0f0">0,51</text>
<rect x="947.0" y="750.3" width="496.0" height="27.300000000000068" fill="#808080"/>
<rect x="947.0" y="750.3" width="16" height="27.300000000000068" fill="#262626"/>
<text x="968.4" y="770.1999999999999" font-size="17" textLength="70.5" lengthAdjust="spacingAndGlyphs" fill="#f0f0f0">Target Y</text>
<text x="1103.1" y="770.1999999999999" font-size="17" textLength="55.9" lengthAdjust="spacingAndGlyphs" fill="#f0f0f0">135,59</text>
<text x="1172.0" y="770.1999999999999" font-size="17" textLength="55.9" lengthAdjust="spacingAndGlyphs" fill="#f0f0f0">133,21</text>
<text x="1241.1999999999998" y="770.1999999999999" font-size="17" textLength="55.9" lengthAdjust="spacingAndGlyphs" fill="#f0f0f0">131,38</text>
<text x="1310.5" y="770.1999999999999" font-size="17" textLength="55.9" lengthAdjust="spacingAndGlyphs" fill="#f0f0f0">129,95</text>
<text x="1379.8" y="770.1999999999999" font-size="17" textLength="55.9" lengthAdjust="spacingAndGlyphs" fill="#f0f0f0">128,56</text>
<text x="1102.5" y="603.2" font-size="17" textLength="33.8" lengthAdjust="spacingAndGlyphs" fill="#fff">20%</text>
<text x="1171.4" y="603.2" font-size="17" textLength="33.8" lengthAdjust="spacingAndGlyphs" fill="#fff">40%</text>
<text x="1240.6" y="603.2" font-size="17" textLength="33.8" lengthAdjust="spacingAndGlyphs" fill="#fff">60%</text>
<text x="1309.9" y="603.2" font-size="17" textLength="33.8" lengthAdjust="spacingAndGlyphs" fill="#fff">80%</text>
<text x="1379.2" y="603.2" font-size="17" textLength="43.5" lengthAdjust="spacingAndGlyphs" fill="#fff">100%</text>
</svg>
</body></html>
